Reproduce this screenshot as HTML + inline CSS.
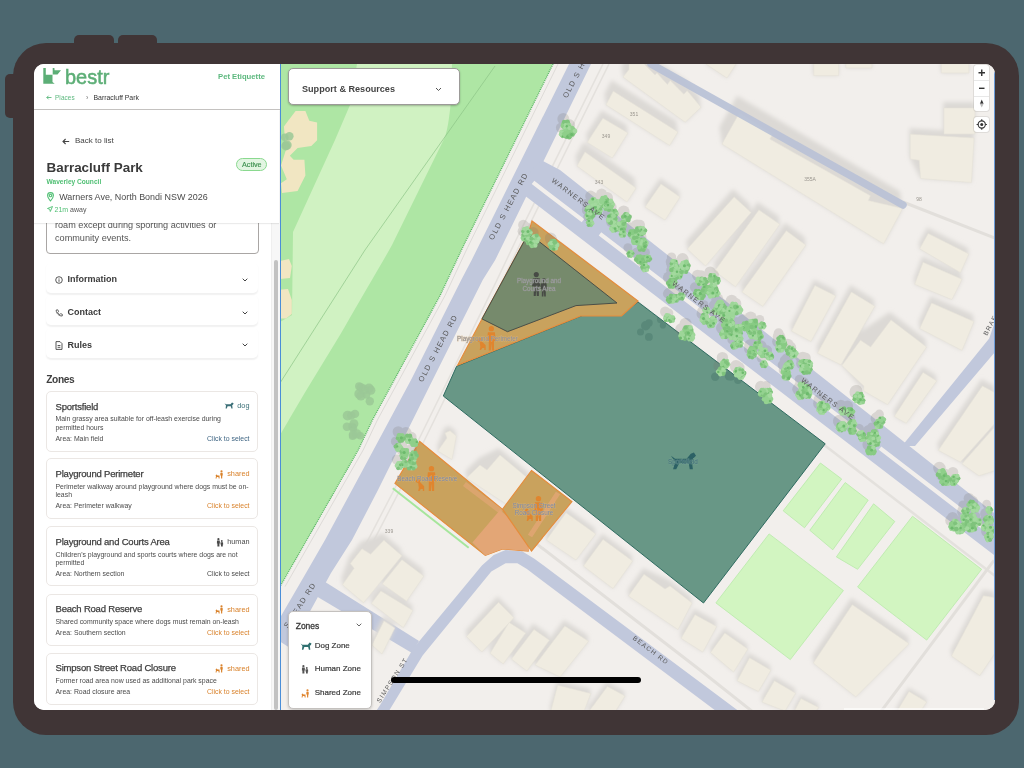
<!DOCTYPE html>
<html><head><meta charset="utf-8">
<style>
*{box-sizing:border-box}
html,body{margin:0;padding:0}
body{width:1024px;height:768px;background:#4c676f;position:relative;overflow:hidden;font-family:"Liberation Sans",sans-serif;color:#3b3b3b}
.abs{position:absolute}
.frame{left:13px;top:43px;width:1006px;height:692px;border-radius:33px;background:#403536}
.btn{background:#403536;border-radius:5px}
.screen{left:34px;top:64px;width:961px;height:646px;border-radius:10px;overflow:hidden;background:#fff;will-change:transform}
.side{left:0;top:0;width:246px;height:646px;background:#fff}
.t{position:absolute;white-space:nowrap;line-height:1}
.card{position:absolute;left:12px;width:212px;border:1px solid #ebe7e4;border-radius:5px;background:#fff}
.acc{position:absolute;left:12px;width:212px;height:30px;border-radius:5px;box-shadow:0 1.5px 1.5px rgba(0,0,0,0.06)}
.map{left:246px;top:0;width:715px;height:646px}
</style></head>
<body>
<div class="abs btn" style="left:74px;top:35px;width:40px;height:16px"></div>
<div class="abs btn" style="left:118px;top:35px;width:39px;height:16px"></div>
<div class="abs btn" style="left:5px;top:74px;width:16px;height:44px"></div>
<div class="abs frame"></div>
<div class="abs screen">
  <svg class="abs map" width="715" height="646" viewBox="280 64 715 646">
    <defs><filter id="blur" x="-20%" y="-20%" width="140%" height="140%"><feGaussianBlur stdDeviation="2.2"/></filter></defs>
    <rect x="280" y="64" width="715" height="646" fill="#f2efec"/>
<polygon points="280.0,64.0 553.0,64.0 462.6,247.5 440.0,295.6 372.4,420.0 358.2,450.0 280.0,586.6" fill="#aee6a4" />
<path d="M357,64 L452,64 L450.6,105 C449,118 448,128 445,137 L392,245 C378,270 360,300 340,335 L306,390.7 L280,435 L280,322 L292,315 L293,232 L335,140 L350,105 Z" fill="#d0f2c2" />
<polygon points="295.6,110.9 305.4,110.9 309.3,120.7 317.1,122.6 317.1,140.2 311.3,146.1 297.6,148.0 289.8,155.8 293.7,159.8 304.4,159.8 305.4,175.4 297.6,191.0 282.0,193.0 281.0,183.2 286.8,179.3 281.0,165.6 285.9,150.0 283.9,126.5" fill="#f1e6c2" />
<polygon points="280.0,261.0 289.0,259.0 291.8,266.0 290.0,278.0 280.0,279.0" fill="#f1e6c2" />
<polygon points="280.0,289.7 288.0,289.0 291.8,300.0 291.8,314.0 286.0,318.5 280.0,318.5" fill="#f1e6c2" />
<path d="M495,66 L365,250 L280,383" fill="none" stroke="#8cc487" stroke-width="0.7"/>
<path d="M553,64 L462.6,247.5 L440,295.6 L372.4,420 L358.2,450 L280,586.6" fill="none" stroke="#5fb86a" stroke-width="1.4" stroke-dasharray="1 1"/>
<path d="M558,64 L467.6,247.5 L445,295.6 L377.4,420 L363.2,450 L285,586.6" fill="none" stroke="#dedbd8" stroke-width="1"/>
<polygon points="569.0,64.0 471.7,260.0 461.2,280.0 411.0,380.0 352.0,490.0 325.0,540.0 306.0,573.0 270.0,635.0 290.0,648.0 331.0,573.0 352.0,540.0 378.0,490.0 432.6,380.0 482.7,280.0 495.2,260.0 591.0,64.0" fill="#c1c8dc" />
<path d="M603,64 L516,240 L496,282 L448,380 L394,490 L368,540 L348,573" fill="none" stroke="#e4e1dd" stroke-width="1.6"/>
<path d="M609,64 L522,240 L502,282 L454,380 L400,490 L374,540 L354,573" fill="none" stroke="#e4e1dd" stroke-width="1.6"/>
<polygon points="541.0,160.0 560.0,170.0 1000.0,517.7 1000.0,559.7 525.0,195.8 505.0,200.0" fill="#c1c8dc" />
<path d="M533,182.4 L583,220.7 M600,233.8 L712,319.6 M730,333.4 L870,440.6 M880,448.2 L990,532.5" fill="none" stroke="#f2efec" stroke-width="4.2"/>
<path d="M560,242.6 L1000,579.7" fill="none" stroke="#e4e1dd" stroke-width="2.5"/>
<polygon points="902.0,446.0 915.0,446.0 995.0,352.0 995.0,321.6 989.2,338.5" fill="#c1c8dc" />
<path d="M903,202 L995,238" fill="none" stroke="#e2dfdb" stroke-width="3"/>
<polygon points="322.0,580.0 419.0,641.0 412.0,653.0 316.0,596.0" fill="#c1c8dc" />
<polygon points="370.0,720.0 380.0,705.3 413.2,648.5 481.9,565.5 493.7,554.9 505.6,550.1 522.1,551.3 534.0,558.4 620.0,622.4 760.0,727.0 740.0,729.0 620.0,639.0 526.9,569.1 517.4,563.2 505.6,563.2 491.3,571.5 422.6,655.6 388.3,712.0 392.0,720.0" fill="#c1c8dc" />
<path d="M534,541.8 L620,608.2 L700,670 L753,712" fill="none" stroke="#e2dfdb" stroke-width="3"/>
<path d="M994,560.4 L880.6,712" fill="none" stroke="#e2dfdb" stroke-width="3"/>
<polygon points="783.2,510.8 820.4,463.0 841.7,479.0 804.5,527.8" fill="#d2f5c1" stroke="#b8eaa8" stroke-width="0.8"/>
<polygon points="809.8,530.3 845.2,482.5 868.2,500.2 832.8,549.8" fill="#d2f5c1" stroke="#b8eaa8" stroke-width="0.8"/>
<polygon points="836.4,556.9 873.6,503.8 894.8,521.5 857.6,569.3" fill="#d2f5c1" stroke="#b8eaa8" stroke-width="0.8"/>
<polygon points="715.9,602.9 769.1,533.9 843.4,590.5 790.3,659.6" fill="#d2f5c1" stroke="#b8eaa8" stroke-width="0.8"/>
<polygon points="857.6,587.0 912.5,516.2 981.6,569.3 926.7,640.1" fill="#d2f5c1" stroke="#b8eaa8" stroke-width="0.8"/>
<g filter="url(#blur)">
<polygon points="621.4,66.0 627.4,53.0 642.4,53.0 685.6,79.8 699.4,96.2 701.0,107.2 685.2,122.2 623.0,77.0" fill="#dcd9d5" />
<polygon points="705.2,59.0 735.2,59.0 736.0,64.0 727.0,78.0 706.0,64.0" fill="#dcd9d5" />
<polygon points="604.4,93.8 611.6,80.2 676.2,120.9 677.9,131.9 669.6,145.4 606.0,104.8" fill="#dcd9d5" />
<polygon points="586.1,134.3 601.7,110.3 626.7,124.9 627.9,132.9 612.3,157.9 587.3,142.3" fill="#dcd9d5" />
<polygon points="575.5,156.0 583.5,142.0 634.5,178.0 636.0,188.0 627.0,202.0 577.0,166.0" fill="#dcd9d5" />
<polygon points="644.1,201.0 660.1,178.0 679.1,191.0 680.0,197.0 665.0,220.0 645.0,207.0" fill="#dcd9d5" />
<polygon points="719.5,127.0 737.0,95.7 900.1,191.4 902.6,208.4 883.6,243.8 722.0,144.0" fill="#dcd9d5" />
<polygon points="812.9,58.0 837.7,58.0 838.6,64.0 838.6,75.6 813.8,75.6 812.9,69.6" fill="#dcd9d5" />
<polygon points="845.4,60.0 871.4,60.0 872.0,64.0 872.0,68.0 846.0,68.0 845.4,64.0" fill="#dcd9d5" />
<polygon points="940.6,59.0 968.0,59.0 968.8,64.0 968.8,73.0 941.4,73.0 940.6,68.0" fill="#dcd9d5" />
<polygon points="943.1,102.0 974.1,102.0 975.0,108.0 975.0,134.0 944.0,134.0 943.1,128.0" fill="#dcd9d5" />
<polygon points="909.3,128.2 973.1,132.0 974.0,138.0 971.4,182.4 920.6,178.5 910.2,159.0 909.3,153.0" fill="#dcd9d5" />
<polygon points="686.1,241.0 733.0,188.9 749.9,204.5 751.1,212.5 705.6,265.9 687.3,249.0" fill="#dcd9d5" />
<polygon points="713.5,263.1 757.7,201.9 778.6,216.3 779.8,224.3 735.5,286.7 714.7,271.1" fill="#dcd9d5" />
<polygon points="740.8,284.0 785.1,222.8 804.6,237.1 805.8,245.1 762.8,306.3 742.0,292.0" fill="#dcd9d5" />
<polygon points="790.6,325.0 814.0,279.4 834.8,289.9 835.7,295.9 811.0,341.4 791.5,331.0" fill="#dcd9d5" />
<polygon points="816.5,346.1 850.4,285.0 873.8,299.3 874.8,306.3 841.0,364.8 817.5,353.1" fill="#dcd9d5" />
<polygon points="918.8,242.8 927.3,227.5 967.9,247.9 968.8,253.9 960.4,272.5 919.7,248.8" fill="#dcd9d5" />
<polygon points="913.8,278.3 922.2,256.3 961.1,273.3 962.0,279.3 951.9,299.6 914.7,284.3" fill="#dcd9d5" />
<polygon points="918.7,321.4 930.6,296.0 972.9,314.6 973.9,321.6 962.0,350.4 919.7,328.4" fill="#dcd9d5" />
<polygon points="840.7,357.6 859.3,332.2 889.8,311.9 925.3,339.0 926.5,347.0 887.6,404.6 863.9,391.0 841.9,365.6" fill="#dcd9d5" />
<polygon points="893.4,410.4 922.2,366.4 935.8,374.9 936.7,380.9 906.2,423.2 894.3,416.4" fill="#dcd9d5" />
<polygon points="937.4,443.3 981.4,378.9 994.0,385.7 995.0,392.7 995.0,423.2 960.4,462.1 938.4,450.3" fill="#dcd9d5" />
<polygon points="961.1,457.8 994.1,420.6 995.0,426.6 995.0,470.6 979.0,475.7 962.0,463.8" fill="#dcd9d5" />
<polygon points="812.2,656.1 851.2,597.7 908.0,636.7 909.0,643.7 855.8,696.8 813.3,663.1" fill="#dcd9d5" />
<polygon points="950.6,650.0 982.5,589.8 994.1,591.6 995.0,597.6 995.0,653.0 979.8,675.5 951.5,656.0" fill="#dcd9d5" />
<polygon points="709.9,647.5 724.0,628.0 747.0,644.0 747.8,649.0 733.6,672.0 710.6,652.5" fill="#dcd9d5" />
<polygon points="736.5,675.8 748.9,652.8 770.0,665.2 770.8,670.2 758.4,691.5 737.2,680.8" fill="#dcd9d5" />
<polygon points="761.2,697.0 773.6,675.8 794.9,688.2 795.6,693.2 785.0,711.0 762.0,702.0" fill="#dcd9d5" />
<polygon points="793.3,708.0 800.4,694.6 818.1,703.4 818.7,707.4 815.0,712.0 793.9,712.0" fill="#dcd9d5" />
<polygon points="896.0,708.0 908.4,687.5 926.1,698.0 926.7,702.0 920.0,712.0 896.6,712.0" fill="#dcd9d5" />
<polygon points="465.6,630.6 497.6,596.3 513.0,611.7 513.9,617.7 481.9,652.0 466.5,636.6" fill="#dcd9d5" />
<polygon points="489.3,647.2 508.2,616.4 524.8,627.1 525.7,633.1 503.2,663.9 490.2,653.2" fill="#dcd9d5" />
<polygon points="510.6,653.1 533.1,623.5 548.5,634.2 549.4,640.2 526.9,671.0 511.5,659.1" fill="#dcd9d5" />
<polygon points="534.3,659.0 563.9,620.0 587.6,635.3 588.5,641.3 560.0,676.9 535.2,665.0" fill="#dcd9d5" />
<polygon points="549.9,707.0 557.0,680.2 590.0,688.5 590.8,693.5 583.7,712.0 550.6,712.0" fill="#dcd9d5" />
<polygon points="587.8,707.0 606.6,681.4 624.2,691.0 625.0,696.0 615.0,712.0 588.5,712.0" fill="#dcd9d5" />
<polygon points="341.4,577.7 349.2,556.6 360.9,541.8 382.8,533.2 400.8,548.8 401.9,555.8 363.6,602.7 342.5,584.7" fill="#dcd9d5" />
<polygon points="381.2,576.9 400.8,552.7 422.7,569.1 423.8,576.1 406.6,601.1 382.3,583.9" fill="#dcd9d5" />
<polygon points="370.5,597.4 379.9,584.9 411.9,604.5 412.8,610.5 403.4,627.7 371.4,603.4" fill="#dcd9d5" />
<polygon points="465.4,471.0 478.9,458.0 498.9,448.0 529.0,473.0 530.0,480.0 513.0,508.6 466.5,478.0" fill="#dcd9d5" />
<polygon points="437.1,446.0 444.2,428.0 449.2,425.8 455.6,431.0 456.3,436.0 452.0,459.5 437.8,451.0" fill="#dcd9d5" />
<polygon points="545.6,534.0 565.1,506.7 594.8,528.0 595.7,534.0 576.0,560.0 546.5,540.0" fill="#dcd9d5" />
<polygon points="582.6,560.0 602.1,533.4 631.7,555.0 632.6,561.0 613.0,588.6 583.5,566.0" fill="#dcd9d5" />
<polygon points="627.6,590.0 643.1,568.3 669.1,580.0 691.1,597.0 692.0,603.0 678.0,629.6 628.5,596.0" fill="#dcd9d5" />
<polygon points="680.2,632.3 694.1,608.7 715.7,620.5 716.6,626.5 702.8,652.1 681.1,638.3" fill="#dcd9d5" />
<polygon points="371.2,640.0 383.2,616.0 394.1,623.0 394.8,628.0 382.0,654.0 372.0,645.0" fill="#dcd9d5" />
</g>
<polygon points="623.0,77.0 629.0,69.6 629.0,64.0 644.0,64.0 655.0,75.0 657.0,73.0 667.4,84.6 670.2,80.5 683.8,94.2 687.2,90.8 701.0,107.2 685.2,122.2" fill="#f0ece1" stroke="#e6e2d9" stroke-width="0.6"/>
<polygon points="706.0,64.0 736.0,64.0 727.0,78.0" fill="#f0ece1" stroke="#e6e2d9" stroke-width="0.6"/>
<polygon points="606.0,104.8 613.3,91.2 677.9,131.9 669.6,145.4" fill="#f0ece1" stroke="#e6e2d9" stroke-width="0.6"/>
<polygon points="587.3,142.3 602.9,118.3 627.9,132.9 612.3,157.9" fill="#f0ece1" stroke="#e6e2d9" stroke-width="0.6"/>
<polygon points="577.0,166.0 585.0,152.0 636.0,188.0 627.0,202.0" fill="#f0ece1" stroke="#e6e2d9" stroke-width="0.6"/>
<polygon points="645.0,207.0 661.0,184.0 680.0,197.0 665.0,220.0" fill="#f0ece1" stroke="#e6e2d9" stroke-width="0.6"/>
<polygon points="722.0,144.0 739.5,112.7 772.7,134.2 769.8,139.1 870.4,195.7 868.4,200.6 902.6,208.4 883.6,243.8" fill="#f0ece1" stroke="#e6e2d9" stroke-width="0.6"/>
<polygon points="813.8,64.0 838.6,64.0 838.6,75.6 813.8,75.6" fill="#f0ece1" stroke="#e6e2d9" stroke-width="0.6"/>
<polygon points="846.0,64.0 872.0,64.0 872.0,68.0 846.0,68.0" fill="#f0ece1" stroke="#e6e2d9" stroke-width="0.6"/>
<polygon points="941.4,64.0 968.8,64.0 968.8,73.0 941.4,73.0" fill="#f0ece1" stroke="#e6e2d9" stroke-width="0.6"/>
<polygon points="944.0,108.0 975.0,108.0 975.0,134.0 944.0,134.0" fill="#f0ece1" stroke="#e6e2d9" stroke-width="0.6"/>
<polygon points="910.2,134.2 974.0,138.0 971.4,182.4 920.6,178.5 919.3,160.2 910.2,159.0" fill="#f0ece1" stroke="#e6e2d9" stroke-width="0.6"/>
<polygon points="687.3,249.0 734.2,196.9 751.1,212.5 705.6,265.9" fill="#f0ece1" stroke="#e6e2d9" stroke-width="0.6"/>
<polygon points="714.7,271.1 758.9,209.9 779.8,224.3 735.5,286.7" fill="#f0ece1" stroke="#e6e2d9" stroke-width="0.6"/>
<polygon points="742.0,292.0 786.3,230.8 805.8,245.1 762.8,306.3" fill="#f0ece1" stroke="#e6e2d9" stroke-width="0.6"/>
<polygon points="791.5,331.0 814.9,285.4 835.7,295.9 811.0,341.4" fill="#f0ece1" stroke="#e6e2d9" stroke-width="0.6"/>
<polygon points="817.5,353.1 851.4,292.0 874.8,306.3 841.0,364.8" fill="#f0ece1" stroke="#e6e2d9" stroke-width="0.6"/>
<polygon points="919.7,248.8 928.2,233.5 968.8,253.9 960.4,272.5" fill="#f0ece1" stroke="#e6e2d9" stroke-width="0.6"/>
<polygon points="914.7,284.3 923.1,262.3 962.0,279.3 951.9,299.6" fill="#f0ece1" stroke="#e6e2d9" stroke-width="0.6"/>
<polygon points="919.7,328.4 931.6,303.0 973.9,321.6 962.0,350.4" fill="#f0ece1" stroke="#e6e2d9" stroke-width="0.6"/>
<polygon points="841.9,365.6 860.5,340.2 870.6,347.0 891.0,319.9 926.5,347.0 887.6,404.6 863.9,391.0 863.9,386.0" fill="#f0ece1" stroke="#e6e2d9" stroke-width="0.6"/>
<polygon points="894.3,416.4 923.1,372.4 936.7,380.9 906.2,423.2" fill="#f0ece1" stroke="#e6e2d9" stroke-width="0.6"/>
<polygon points="938.4,450.3 982.4,385.9 995.0,392.7 995.0,423.2 960.4,462.1" fill="#f0ece1" stroke="#e6e2d9" stroke-width="0.6"/>
<polygon points="962.0,463.8 995.0,426.6 995.0,470.6 979.0,475.7" fill="#f0ece1" stroke="#e6e2d9" stroke-width="0.6"/>
<polygon points="813.3,663.1 852.3,604.7 909.0,643.7 855.8,696.8" fill="#f0ece1" stroke="#e6e2d9" stroke-width="0.6"/>
<polygon points="951.5,656.0 983.4,595.8 995.0,597.6 995.0,653.0 979.8,675.5" fill="#f0ece1" stroke="#e6e2d9" stroke-width="0.6"/>
<polygon points="710.6,652.5 724.8,633.0 747.8,649.0 733.6,672.0" fill="#f0ece1" stroke="#e6e2d9" stroke-width="0.6"/>
<polygon points="737.2,680.8 749.6,657.8 770.8,670.2 758.4,691.5" fill="#f0ece1" stroke="#e6e2d9" stroke-width="0.6"/>
<polygon points="762.0,702.0 774.4,680.8 795.6,693.2 785.0,711.0" fill="#f0ece1" stroke="#e6e2d9" stroke-width="0.6"/>
<polygon points="793.9,712.0 801.0,698.6 818.7,707.4 815.0,712.0" fill="#f0ece1" stroke="#e6e2d9" stroke-width="0.6"/>
<polygon points="896.6,712.0 909.0,691.5 926.7,702.0 920.0,712.0" fill="#f0ece1" stroke="#e6e2d9" stroke-width="0.6"/>
<polygon points="466.5,636.6 498.5,602.3 513.9,617.7 481.9,652.0" fill="#f0ece1" stroke="#e6e2d9" stroke-width="0.6"/>
<polygon points="490.2,653.2 509.1,622.4 525.7,633.1 503.2,663.9" fill="#f0ece1" stroke="#e6e2d9" stroke-width="0.6"/>
<polygon points="511.5,659.1 534.0,629.5 549.4,640.2 526.9,671.0" fill="#f0ece1" stroke="#e6e2d9" stroke-width="0.6"/>
<polygon points="535.2,665.0 564.8,626.0 588.5,641.3 560.0,676.9" fill="#f0ece1" stroke="#e6e2d9" stroke-width="0.6"/>
<polygon points="550.6,712.0 557.7,685.2 590.8,693.5 583.7,712.0" fill="#f0ece1" stroke="#e6e2d9" stroke-width="0.6"/>
<polygon points="588.5,712.0 607.4,686.4 625.0,696.0 615.0,712.0" fill="#f0ece1" stroke="#e6e2d9" stroke-width="0.6"/>
<polygon points="342.5,584.7 354.2,568.3 350.3,563.6 362.0,548.8 370.6,554.2 383.9,540.2 401.9,555.8 363.6,602.7" fill="#f0ece1" stroke="#e6e2d9" stroke-width="0.6"/>
<polygon points="382.3,583.9 401.9,559.7 423.8,576.1 406.6,601.1" fill="#f0ece1" stroke="#e6e2d9" stroke-width="0.6"/>
<polygon points="371.4,603.4 380.8,590.9 412.8,610.5 403.4,627.7" fill="#f0ece1" stroke="#e6e2d9" stroke-width="0.6"/>
<polygon points="466.5,478.0 480.0,465.0 487.0,470.0 500.0,455.0 530.0,480.0 513.0,508.6 466.5,478.0" fill="#f0ece1" stroke="#e6e2d9" stroke-width="0.6"/>
<polygon points="437.8,451.0 447.0,438.0 445.0,433.0 450.0,430.8 456.3,436.0 452.0,459.5" fill="#f0ece1" stroke="#e6e2d9" stroke-width="0.6"/>
<polygon points="546.5,540.0 566.0,512.7 595.7,534.0 576.0,560.0" fill="#f0ece1" stroke="#e6e2d9" stroke-width="0.6"/>
<polygon points="583.5,566.0 603.0,539.4 632.6,561.0 613.0,588.6" fill="#f0ece1" stroke="#e6e2d9" stroke-width="0.6"/>
<polygon points="628.5,596.0 644.0,574.3 665.0,589.0 670.0,586.0 692.0,603.0 678.0,629.6" fill="#f0ece1" stroke="#e6e2d9" stroke-width="0.6"/>
<polygon points="681.1,638.3 695.0,614.7 716.6,626.5 702.8,652.1" fill="#f0ece1" stroke="#e6e2d9" stroke-width="0.6"/>
<polygon points="372.0,645.0 384.0,621.0 394.8,628.0 382.0,654.0" fill="#f0ece1" stroke="#e6e2d9" stroke-width="0.6"/>
<path d="M651,64 L903,205" fill="none" stroke="#b9c1d6" stroke-width="7.5" stroke-linecap="round" opacity="0.92"/>
<polygon points="443.3,396.0 456.6,366.3 582.7,315.4 620.3,315.4 638.0,302.0 825.2,443.8 703.5,603.0" fill="#689786" stroke="#2f6b60" stroke-width="1"/>
<clipPath id="sfclip"><polygon points="443.3,396 456.6,366.3 582.7,315.4 620.3,315.4 638,302 825.2,443.8 703.5,603"/></clipPath>
<g clip-path="url(#sfclip)" fill="#4d7d70" opacity="0.55"><circle cx="649.0" cy="322.9" r="3.7"/><circle cx="662.9" cy="325.4" r="3.1"/><circle cx="640.5" cy="332.0" r="3.5"/><circle cx="648.9" cy="336.9" r="3.9"/><circle cx="671.8" cy="320.8" r="4.3"/><circle cx="645.7" cy="325.7" r="4.7"/><circle cx="731.3" cy="376.3" r="4.3"/><circle cx="715.2" cy="376.7" r="4.2"/><circle cx="723.5" cy="360.7" r="4.7"/><circle cx="729.5" cy="375.8" r="4.8"/><circle cx="738.0" cy="380.3" r="3.8"/><circle cx="741.0" cy="369.8" r="4.9"/><circle cx="693.9" cy="301.9" r="3.3"/><circle cx="660.8" cy="319.3" r="3.9"/><circle cx="681.3" cy="306.0" r="4.0"/><circle cx="669.3" cy="307.0" r="4.2"/><circle cx="679.2" cy="318.1" r="4.4"/><circle cx="696.4" cy="317.1" r="5.0"/><circle cx="806.8" cy="413.3" r="4.7"/><circle cx="814.1" cy="428.1" r="4.1"/><circle cx="807.8" cy="414.2" r="4.7"/><circle cx="804.3" cy="415.7" r="3.1"/><circle cx="811.3" cy="429.8" r="3.2"/><circle cx="810.0" cy="418.2" r="3.3"/></g>
<polygon points="532.0,221.0 638.0,301.0 621.5,316.0 580.5,316.0 457.7,365.0 482.0,319.0 528.5,233.0" fill="#c9a25d" stroke="#e58c3c" stroke-width="1.2"/>
<polygon points="528.5,233.2 617.0,303.0 576.0,305.6 507.5,331.7 482.0,318.9" fill="#768a6c" stroke="#4a4f48" stroke-width="1"/>
<path d="M392.8,488.2 L468.7,547.7" fill="none" stroke="#a6e69c" stroke-width="2"/>
<polygon points="419.7,441.5 503.5,510.2 527.2,533.9 528.2,551.0 502.5,548.9 485.3,555.4 395.0,483.4" fill="#c9a25d" stroke="#e58c3c" stroke-width="1.2"/>
<polygon points="472.4,542.5 500.0,510.0 527.2,533.9 528.2,551.0 502.5,548.9 485.3,555.4" fill="#e3a676" />
<polygon points="466.0,482.0 503.5,510.2 500.0,514.0 463.0,486.0" fill="#e3a676" opacity="0.7"/>
<polygon points="531.5,470.5 571.9,501.6 531.5,551.0 502.5,509.2" fill="#c9a25d" stroke="#e58c3c" stroke-width="1.2"/>
<path d="M558,493 L530,536" fill="none" stroke="#e3a676" stroke-width="5" opacity="0.8"/>
<g fill="#77736c" opacity="0.2"><circle cx="560.9" cy="127.7" r="5.0"/>
<circle cx="563.3" cy="119.0" r="6.0"/>
<circle cx="567.4" cy="125.4" r="4.9"/>
<circle cx="565.9" cy="127.6" r="6.2"/>
<circle cx="564.7" cy="120.9" r="4.7"/>
<circle cx="568.9" cy="125.2" r="6.2"/>
<circle cx="586.0" cy="203.5" r="4.5"/>
<circle cx="587.7" cy="209.3" r="5.8"/>
<circle cx="586.9" cy="210.6" r="4.9"/>
<circle cx="595.9" cy="204.9" r="4.8"/>
<circle cx="593.2" cy="198.1" r="5.9"/>
<circle cx="590.6" cy="196.0" r="5.4"/>
<circle cx="587.7" cy="217.1" r="4.5"/>
<circle cx="623.7" cy="211.4" r="5.9"/>
<circle cx="614.3" cy="220.4" r="5.7"/>
<circle cx="620.2" cy="218.0" r="4.5"/>
<circle cx="618.7" cy="220.8" r="6.2"/>
<circle cx="610.8" cy="213.0" r="5.0"/>
<circle cx="611.8" cy="207.0" r="4.8"/>
<circle cx="611.2" cy="222.2" r="5.0"/>
<circle cx="620.2" cy="227.9" r="4.4"/>
<circle cx="608.0" cy="213.9" r="4.9"/>
<circle cx="609.2" cy="213.1" r="6.2"/>
<circle cx="601.0" cy="198.0" r="4.9"/>
<circle cx="605.7" cy="200.1" r="6.2"/>
<circle cx="607.0" cy="198.0" r="6.1"/>
<circle cx="601.6" cy="194.1" r="5.5"/>
<circle cx="633.7" cy="234.1" r="5.2"/>
<circle cx="640.6" cy="237.1" r="5.9"/>
<circle cx="630.1" cy="227.8" r="5.6"/>
<circle cx="627.9" cy="247.8" r="4.5"/>
<circle cx="640.9" cy="237.2" r="5.0"/>
<circle cx="637.0" cy="225.6" r="6.2"/>
<circle cx="639.9" cy="224.9" r="5.1"/>
<circle cx="639.8" cy="240.8" r="5.8"/>
<circle cx="633.4" cy="234.5" r="5.5"/>
<circle cx="640.1" cy="254.2" r="6.0"/>
<circle cx="642.4" cy="261.7" r="5.3"/>
<circle cx="645.5" cy="252.5" r="4.5"/>
<circle cx="636.9" cy="253.3" r="5.7"/>
<circle cx="670.1" cy="276.6" r="5.6"/>
<circle cx="672.9" cy="267.4" r="4.7"/>
<circle cx="671.6" cy="270.4" r="5.4"/>
<circle cx="670.9" cy="261.8" r="5.2"/>
<circle cx="673.2" cy="263.0" r="5.9"/>
<circle cx="668.8" cy="277.5" r="5.9"/>
<circle cx="675.1" cy="265.9" r="6.0"/>
<circle cx="676.3" cy="269.4" r="4.7"/>
<circle cx="672.5" cy="264.2" r="6.1"/>
<circle cx="681.4" cy="263.2" r="6.0"/>
<circle cx="682.6" cy="259.2" r="6.1"/>
<circle cx="671.5" cy="257.1" r="4.7"/>
<circle cx="667.5" cy="293.7" r="4.6"/>
<circle cx="672.4" cy="292.3" r="5.2"/>
<circle cx="669.4" cy="292.8" r="5.5"/>
<circle cx="678.8" cy="290.4" r="4.7"/>
<circle cx="713.2" cy="287.1" r="4.9"/>
<circle cx="697.6" cy="275.3" r="5.6"/>
<circle cx="710.2" cy="282.3" r="6.1"/>
<circle cx="694.9" cy="287.2" r="5.0"/>
<circle cx="698.1" cy="289.6" r="5.9"/>
<circle cx="714.4" cy="274.6" r="4.5"/>
<circle cx="703.6" cy="283.6" r="5.9"/>
<circle cx="708.8" cy="287.4" r="5.6"/>
<circle cx="701.3" cy="275.7" r="5.5"/>
<circle cx="710.1" cy="272.0" r="5.6"/>
<circle cx="707.8" cy="316.5" r="5.2"/>
<circle cx="704.0" cy="304.7" r="4.5"/>
<circle cx="713.4" cy="304.9" r="4.6"/>
<circle cx="708.3" cy="318.1" r="5.1"/>
<circle cx="710.5" cy="314.7" r="5.1"/>
<circle cx="727.9" cy="310.1" r="5.6"/>
<circle cx="731.7" cy="300.8" r="6.0"/>
<circle cx="734.2" cy="303.5" r="5.4"/>
<circle cx="735.3" cy="303.9" r="6.1"/>
<circle cx="727.1" cy="305.3" r="4.5"/>
<circle cx="722.1" cy="328.0" r="6.1"/>
<circle cx="728.8" cy="317.8" r="4.5"/>
<circle cx="726.4" cy="317.0" r="6.1"/>
<circle cx="728.0" cy="320.8" r="5.3"/>
<circle cx="728.7" cy="320.8" r="5.8"/>
<circle cx="665.2" cy="311.8" r="5.2"/>
<circle cx="668.8" cy="313.0" r="4.5"/>
<circle cx="681.2" cy="329.2" r="6.0"/>
<circle cx="688.3" cy="328.8" r="4.9"/>
<circle cx="688.2" cy="331.7" r="4.7"/>
<circle cx="685.6" cy="323.9" r="6.1"/>
<circle cx="702.1" cy="311.1" r="4.9"/>
<circle cx="702.1" cy="313.9" r="5.6"/>
<circle cx="717.5" cy="298.0" r="4.8"/>
<circle cx="735.0" cy="328.9" r="4.6"/>
<circle cx="724.0" cy="315.2" r="5.1"/>
<circle cx="717.4" cy="299.6" r="6.1"/>
<circle cx="720.3" cy="304.2" r="6.2"/>
<circle cx="719.9" cy="307.2" r="5.2"/>
<circle cx="727.1" cy="316.1" r="4.8"/>
<circle cx="721.4" cy="306.6" r="4.7"/>
<circle cx="729.4" cy="329.9" r="5.0"/>
<circle cx="723.9" cy="319.2" r="6.1"/>
<circle cx="724.3" cy="304.6" r="4.9"/>
<circle cx="728.1" cy="306.6" r="5.4"/>
<circle cx="722.7" cy="311.1" r="5.8"/>
<circle cx="750.8" cy="325.0" r="4.8"/>
<circle cx="755.7" cy="329.6" r="6.1"/>
<circle cx="749.2" cy="326.3" r="6.0"/>
<circle cx="736.0" cy="332.3" r="5.6"/>
<circle cx="743.3" cy="320.2" r="6.0"/>
<circle cx="735.1" cy="327.2" r="5.5"/>
<circle cx="750.6" cy="317.6" r="6.1"/>
<circle cx="736.4" cy="322.3" r="5.4"/>
<circle cx="731.8" cy="339.8" r="4.5"/>
<circle cx="750.2" cy="329.2" r="5.0"/>
<circle cx="736.7" cy="338.0" r="4.6"/>
<circle cx="755.1" cy="339.1" r="5.4"/>
<circle cx="759.7" cy="319.5" r="4.6"/>
<circle cx="760.6" cy="346.4" r="6.2"/>
<circle cx="767.4" cy="350.3" r="4.5"/>
<circle cx="750.9" cy="347.9" r="4.5"/>
<circle cx="761.4" cy="358.3" r="4.7"/>
<circle cx="766.9" cy="350.2" r="5.0"/>
<circle cx="749.7" cy="344.8" r="5.5"/>
<circle cx="749.9" cy="345.9" r="5.4"/>
<circle cx="749.0" cy="348.9" r="5.0"/>
<circle cx="778.6" cy="336.7" r="5.9"/>
<circle cx="778.0" cy="341.6" r="5.9"/>
<circle cx="779.3" cy="337.7" r="6.3"/>
<circle cx="778.6" cy="333.1" r="4.9"/>
<circle cx="787.1" cy="358.8" r="5.6"/>
<circle cx="783.6" cy="365.5" r="5.2"/>
<circle cx="782.4" cy="365.1" r="4.8"/>
<circle cx="784.1" cy="370.1" r="5.4"/>
<circle cx="784.3" cy="360.2" r="4.5"/>
<circle cx="790.4" cy="347.7" r="5.9"/>
<circle cx="787.7" cy="344.9" r="6.1"/>
<circle cx="805.4" cy="360.0" r="5.1"/>
<circle cx="802.7" cy="357.4" r="5.6"/>
<circle cx="805.5" cy="363.9" r="5.1"/>
<circle cx="799.7" cy="357.3" r="4.6"/>
<circle cx="805.4" cy="357.9" r="5.4"/>
<circle cx="802.3" cy="363.4" r="6.2"/>
<circle cx="805.4" cy="388.9" r="4.7"/>
<circle cx="797.9" cy="389.3" r="5.7"/>
<circle cx="802.3" cy="382.7" r="5.1"/>
<circle cx="803.5" cy="382.6" r="5.5"/>
<circle cx="766.2" cy="385.6" r="4.5"/>
<circle cx="760.8" cy="386.0" r="5.3"/>
<circle cx="765.3" cy="392.7" r="6.2"/>
<circle cx="760.0" cy="387.1" r="5.0"/>
<circle cx="738.3" cy="368.0" r="6.3"/>
<circle cx="722.4" cy="357.6" r="5.7"/>
<circle cx="736.7" cy="366.8" r="5.3"/>
<circle cx="722.2" cy="358.7" r="5.2"/>
<circle cx="736.6" cy="365.7" r="4.8"/>
<circle cx="736.0" cy="366.3" r="6.2"/>
<circle cx="718.7" cy="365.6" r="5.4"/>
<circle cx="738.2" cy="366.2" r="4.6"/>
<circle cx="799.9" cy="386.5" r="5.9"/>
<circle cx="801.7" cy="386.4" r="4.9"/>
<circle cx="804.7" cy="386.7" r="6.0"/>
<circle cx="799.4" cy="379.5" r="4.7"/>
<circle cx="819.2" cy="403.5" r="6.1"/>
<circle cx="819.1" cy="399.7" r="5.6"/>
<circle cx="824.1" cy="400.9" r="4.5"/>
<circle cx="819.8" cy="402.8" r="5.6"/>
<circle cx="837.9" cy="422.0" r="4.8"/>
<circle cx="849.8" cy="424.8" r="5.0"/>
<circle cx="838.5" cy="420.5" r="5.4"/>
<circle cx="849.8" cy="417.4" r="5.5"/>
<circle cx="847.6" cy="406.1" r="5.5"/>
<circle cx="840.6" cy="420.2" r="5.8"/>
<circle cx="840.8" cy="405.2" r="5.5"/>
<circle cx="856.1" cy="391.2" r="6.3"/>
<circle cx="858.7" cy="394.7" r="4.7"/>
<circle cx="857.0" cy="390.4" r="5.1"/>
<circle cx="855.1" cy="392.7" r="5.6"/>
<circle cx="876.3" cy="418.4" r="5.7"/>
<circle cx="879.3" cy="414.2" r="4.6"/>
<circle cx="876.8" cy="417.0" r="5.1"/>
<circle cx="860.1" cy="431.8" r="4.8"/>
<circle cx="858.9" cy="428.9" r="5.2"/>
<circle cx="873.6" cy="436.8" r="4.9"/>
<circle cx="868.5" cy="430.6" r="5.6"/>
<circle cx="874.4" cy="431.9" r="4.4"/>
<circle cx="871.9" cy="427.1" r="4.7"/>
<circle cx="868.5" cy="444.6" r="6.1"/>
<circle cx="869.0" cy="435.0" r="5.4"/>
<circle cx="951.0" cy="475.7" r="5.1"/>
<circle cx="952.9" cy="472.3" r="5.4"/>
<circle cx="944.6" cy="474.3" r="5.9"/>
<circle cx="939.4" cy="468.1" r="6.3"/>
<circle cx="941.5" cy="475.3" r="5.3"/>
<circle cx="986.7" cy="504.1" r="4.4"/>
<circle cx="963.2" cy="518.1" r="5.3"/>
<circle cx="975.7" cy="516.0" r="4.6"/>
<circle cx="952.6" cy="517.5" r="5.5"/>
<circle cx="965.0" cy="521.2" r="4.9"/>
<circle cx="969.9" cy="520.6" r="6.0"/>
<circle cx="983.0" cy="521.5" r="5.0"/>
<circle cx="962.7" cy="510.6" r="5.4"/>
<circle cx="963.1" cy="505.2" r="4.8"/>
<circle cx="972.2" cy="501.7" r="6.1"/>
<circle cx="954.2" cy="520.5" r="5.8"/>
<circle cx="957.4" cy="523.6" r="5.9"/>
<circle cx="969.9" cy="511.5" r="5.2"/>
<circle cx="969.0" cy="498.4" r="5.4"/>
<circle cx="962.1" cy="512.5" r="4.8"/>
<circle cx="968.1" cy="521.7" r="5.6"/>
<circle cx="986.8" cy="513.8" r="5.1"/>
<circle cx="951.2" cy="520.5" r="6.0"/>
<circle cx="986.2" cy="513.8" r="6.1"/>
<circle cx="986.1" cy="531.9" r="4.8"/>
<circle cx="987.9" cy="524.4" r="5.4"/>
<circle cx="986.5" cy="530.6" r="5.2"/>
<circle cx="409.1" cy="459.5" r="6.2"/>
<circle cx="405.9" cy="432.8" r="5.8"/>
<circle cx="409.6" cy="455.0" r="4.5"/>
<circle cx="411.1" cy="449.4" r="5.6"/>
<circle cx="395.9" cy="441.4" r="5.0"/>
<circle cx="396.8" cy="459.6" r="5.1"/>
<circle cx="411.6" cy="437.0" r="5.0"/>
<circle cx="402.0" cy="457.9" r="4.4"/>
<circle cx="401.1" cy="450.1" r="4.7"/>
<circle cx="402.0" cy="446.3" r="5.5"/>
<circle cx="398.2" cy="431.8" r="5.6"/>
<circle cx="530.5" cy="237.0" r="5.8"/>
<circle cx="525.7" cy="226.9" r="5.0"/>
<circle cx="522.9" cy="231.2" r="5.3"/>
<circle cx="523.3" cy="224.9" r="5.2"/>
<circle cx="533.1" cy="232.7" r="5.6"/>
<circle cx="527.2" cy="235.2" r="5.1"/>
<circle cx="550.5" cy="238.1" r="5.7"/>
<circle cx="551.3" cy="239.7" r="6.0"/></g>
<circle cx="563.4" cy="133.7" r="4.1" fill="#8fcf8a"/>
<circle cx="566.3" cy="134.2" r="1.6" fill="#a3d99e"/>
<circle cx="565.5" cy="135.8" r="1.8" fill="#8fcf8a"/>
<circle cx="562.6" cy="136.5" r="1.7" fill="#8fcf8a"/>
<circle cx="560.5" cy="134.4" r="1.7" fill="#a3d99e"/>
<circle cx="561.4" cy="131.5" r="1.6" fill="#a3d99e"/>
<circle cx="565.0" cy="131.2" r="1.6" fill="#a3d99e"/>
<circle cx="562.8" cy="136.4" r="1.0" fill="#6cba6c"/>
<circle cx="565.8" cy="125.0" r="4.9" fill="#8fcf8a"/>
<circle cx="569.4" cy="125.2" r="2.2" fill="#a3d99e"/>
<circle cx="568.1" cy="127.7" r="2.2" fill="#a3d99e"/>
<circle cx="564.6" cy="128.4" r="1.9" fill="#a3d99e"/>
<circle cx="562.4" cy="126.0" r="1.9" fill="#8fcf8a"/>
<circle cx="564.0" cy="121.9" r="2.1" fill="#7fc37c"/>
<circle cx="567.5" cy="121.9" r="2.4" fill="#7fc37c"/>
<circle cx="564.4" cy="127.1" r="1.6" fill="#6cba6c"/>
<circle cx="569.9" cy="131.4" r="3.9" fill="#88cb84"/>
<circle cx="572.8" cy="131.8" r="1.6" fill="#88cb84"/>
<circle cx="571.9" cy="133.5" r="1.7" fill="#7fc37c"/>
<circle cx="569.0" cy="134.1" r="1.7" fill="#88cb84"/>
<circle cx="567.1" cy="130.6" r="1.5" fill="#a3d99e"/>
<circle cx="568.6" cy="128.9" r="1.9" fill="#7fc37c"/>
<circle cx="571.1" cy="128.8" r="1.6" fill="#7fc37c"/>
<circle cx="570.4" cy="131.2" r="1.3" fill="#6cba6c"/>
<circle cx="568.4" cy="133.6" r="5.0" fill="#8fcf8a"/>
<circle cx="572.0" cy="134.2" r="2.1" fill="#a3d99e"/>
<circle cx="569.2" cy="137.2" r="2.4" fill="#7fc37c"/>
<circle cx="566.2" cy="136.6" r="2.4" fill="#7fc37c"/>
<circle cx="564.9" cy="134.7" r="2.2" fill="#8fcf8a"/>
<circle cx="566.8" cy="130.4" r="2.2" fill="#8fcf8a"/>
<circle cx="570.7" cy="130.8" r="2.0" fill="#8fcf8a"/>
<circle cx="567.7" cy="136.6" r="1.5" fill="#6cba6c"/>
<circle cx="567.2" cy="126.9" r="3.8" fill="#94d290"/>
<circle cx="569.9" cy="127.4" r="1.8" fill="#7fc37c"/>
<circle cx="568.3" cy="129.4" r="1.9" fill="#a3d99e"/>
<circle cx="565.3" cy="128.9" r="1.9" fill="#94d290"/>
<circle cx="564.5" cy="127.6" r="1.5" fill="#a3d99e"/>
<circle cx="565.4" cy="124.7" r="1.7" fill="#a3d99e"/>
<circle cx="568.1" cy="124.2" r="1.6" fill="#94d290"/>
<circle cx="566.8" cy="126.2" r="1.2" fill="#6cba6c"/>
<circle cx="571.4" cy="131.2" r="5.0" fill="#8fcf8a"/>
<circle cx="575.0" cy="131.1" r="2.4" fill="#a3d99e"/>
<circle cx="572.6" cy="134.7" r="2.1" fill="#7fc37c"/>
<circle cx="569.8" cy="134.5" r="2.2" fill="#7fc37c"/>
<circle cx="567.8" cy="132.2" r="1.9" fill="#8fcf8a"/>
<circle cx="569.4" cy="128.1" r="2.0" fill="#a3d99e"/>
<circle cx="572.3" cy="127.7" r="1.9" fill="#8fcf8a"/>
<circle cx="571.6" cy="134.4" r="1.5" fill="#6cba6c"/>
<circle cx="588.5" cy="209.5" r="3.7" fill="#88cb84"/>
<circle cx="591.1" cy="210.3" r="1.6" fill="#7fc37c"/>
<circle cx="590.3" cy="211.5" r="1.8" fill="#7fc37c"/>
<circle cx="587.2" cy="211.9" r="1.5" fill="#88cb84"/>
<circle cx="585.9" cy="210.2" r="1.5" fill="#7fc37c"/>
<circle cx="587.1" cy="207.2" r="1.7" fill="#a3d99e"/>
<circle cx="589.1" cy="206.9" r="1.8" fill="#a3d99e"/>
<circle cx="587.8" cy="210.5" r="1.3" fill="#6cba6c"/>
<circle cx="590.2" cy="215.3" r="4.7" fill="#8fcf8a"/>
<circle cx="593.6" cy="215.7" r="1.9" fill="#7fc37c"/>
<circle cx="591.1" cy="218.7" r="2.0" fill="#8fcf8a"/>
<circle cx="588.4" cy="218.3" r="2.2" fill="#7fc37c"/>
<circle cx="586.7" cy="215.1" r="2.1" fill="#8fcf8a"/>
<circle cx="589.0" cy="212.1" r="2.2" fill="#a3d99e"/>
<circle cx="592.4" cy="212.7" r="1.9" fill="#7fc37c"/>
<circle cx="589.2" cy="212.2" r="1.1" fill="#6cba6c"/>
<circle cx="589.4" cy="216.6" r="4.0" fill="#88cb84"/>
<circle cx="592.3" cy="216.5" r="1.9" fill="#7fc37c"/>
<circle cx="590.1" cy="219.4" r="1.7" fill="#88cb84"/>
<circle cx="588.6" cy="219.4" r="1.7" fill="#7fc37c"/>
<circle cx="586.5" cy="217.1" r="1.8" fill="#a3d99e"/>
<circle cx="588.5" cy="213.8" r="1.7" fill="#a3d99e"/>
<circle cx="590.6" cy="214.0" r="1.8" fill="#a3d99e"/>
<circle cx="587.2" cy="216.0" r="1.3" fill="#6cba6c"/>
<circle cx="598.4" cy="210.9" r="3.9" fill="#88cb84"/>
<circle cx="601.1" cy="210.2" r="1.9" fill="#a3d99e"/>
<circle cx="600.0" cy="213.2" r="1.6" fill="#88cb84"/>
<circle cx="596.7" cy="213.1" r="1.5" fill="#88cb84"/>
<circle cx="595.7" cy="211.7" r="1.7" fill="#7fc37c"/>
<circle cx="597.5" cy="208.2" r="1.5" fill="#a3d99e"/>
<circle cx="600.5" cy="208.9" r="1.8" fill="#7fc37c"/>
<circle cx="596.5" cy="211.1" r="0.9" fill="#6cba6c"/>
<circle cx="595.7" cy="204.1" r="4.8" fill="#94d290"/>
<circle cx="599.2" cy="203.9" r="2.3" fill="#94d290"/>
<circle cx="598.2" cy="206.5" r="1.9" fill="#a3d99e"/>
<circle cx="594.5" cy="207.3" r="2.1" fill="#7fc37c"/>
<circle cx="592.2" cy="204.0" r="2.3" fill="#94d290"/>
<circle cx="594.8" cy="200.7" r="2.0" fill="#7fc37c"/>
<circle cx="597.8" cy="201.2" r="2.3" fill="#a3d99e"/>
<circle cx="595.2" cy="206.9" r="1.4" fill="#6cba6c"/>
<circle cx="593.1" cy="202.0" r="4.4" fill="#9dd698"/>
<circle cx="596.3" cy="202.5" r="2.0" fill="#9dd698"/>
<circle cx="595.2" cy="204.4" r="1.9" fill="#a3d99e"/>
<circle cx="592.2" cy="205.1" r="1.7" fill="#a3d99e"/>
<circle cx="589.9" cy="202.0" r="1.9" fill="#9dd698"/>
<circle cx="592.2" cy="199.0" r="1.7" fill="#9dd698"/>
<circle cx="594.3" cy="199.1" r="2.0" fill="#a3d99e"/>
<circle cx="592.8" cy="199.1" r="1.5" fill="#6cba6c"/>
<circle cx="590.2" cy="223.1" r="3.7" fill="#94d290"/>
<circle cx="592.9" cy="223.4" r="1.6" fill="#a3d99e"/>
<circle cx="591.1" cy="225.6" r="1.6" fill="#94d290"/>
<circle cx="588.6" cy="225.2" r="1.8" fill="#7fc37c"/>
<circle cx="587.6" cy="222.4" r="1.8" fill="#94d290"/>
<circle cx="589.4" cy="220.5" r="1.4" fill="#94d290"/>
<circle cx="591.4" cy="220.7" r="1.5" fill="#a3d99e"/>
<circle cx="588.9" cy="220.9" r="1.2" fill="#6cba6c"/>
<circle cx="626.2" cy="217.4" r="4.8" fill="#88cb84"/>
<circle cx="629.6" cy="216.7" r="2.3" fill="#7fc37c"/>
<circle cx="628.4" cy="220.1" r="2.3" fill="#7fc37c"/>
<circle cx="623.8" cy="220.0" r="1.9" fill="#a3d99e"/>
<circle cx="622.8" cy="216.8" r="1.9" fill="#7fc37c"/>
<circle cx="625.4" cy="214.1" r="2.0" fill="#7fc37c"/>
<circle cx="627.3" cy="214.2" r="2.0" fill="#a3d99e"/>
<circle cx="625.3" cy="216.4" r="1.4" fill="#6cba6c"/>
<circle cx="616.8" cy="226.4" r="4.6" fill="#88cb84"/>
<circle cx="620.1" cy="226.5" r="1.8" fill="#88cb84"/>
<circle cx="617.6" cy="229.7" r="1.8" fill="#7fc37c"/>
<circle cx="615.5" cy="229.6" r="2.2" fill="#88cb84"/>
<circle cx="613.4" cy="226.9" r="1.8" fill="#7fc37c"/>
<circle cx="615.7" cy="223.2" r="2.1" fill="#7fc37c"/>
<circle cx="618.3" cy="223.4" r="2.0" fill="#a3d99e"/>
<circle cx="617.2" cy="227.7" r="1.1" fill="#6cba6c"/>
<circle cx="622.7" cy="224.0" r="3.7" fill="#8fcf8a"/>
<circle cx="625.3" cy="223.6" r="1.4" fill="#8fcf8a"/>
<circle cx="623.6" cy="226.5" r="1.4" fill="#8fcf8a"/>
<circle cx="622.0" cy="226.6" r="1.7" fill="#7fc37c"/>
<circle cx="620.1" cy="224.8" r="1.8" fill="#7fc37c"/>
<circle cx="622.0" cy="221.4" r="1.5" fill="#8fcf8a"/>
<circle cx="623.4" cy="221.4" r="1.7" fill="#8fcf8a"/>
<circle cx="625.1" cy="222.8" r="0.9" fill="#6cba6c"/>
<circle cx="621.2" cy="226.8" r="5.0" fill="#94d290"/>
<circle cx="624.8" cy="226.3" r="2.2" fill="#94d290"/>
<circle cx="623.5" cy="229.6" r="2.4" fill="#7fc37c"/>
<circle cx="620.3" cy="230.3" r="1.9" fill="#a3d99e"/>
<circle cx="617.6" cy="226.6" r="2.0" fill="#7fc37c"/>
<circle cx="618.9" cy="223.9" r="2.1" fill="#a3d99e"/>
<circle cx="623.6" cy="224.0" r="2.1" fill="#7fc37c"/>
<circle cx="621.5" cy="229.5" r="1.7" fill="#6cba6c"/>
<circle cx="613.3" cy="219.0" r="4.0" fill="#94d290"/>
<circle cx="616.2" cy="219.6" r="1.9" fill="#a3d99e"/>
<circle cx="615.3" cy="221.2" r="2.0" fill="#94d290"/>
<circle cx="611.4" cy="221.2" r="1.5" fill="#a3d99e"/>
<circle cx="610.4" cy="218.6" r="1.6" fill="#94d290"/>
<circle cx="611.2" cy="216.9" r="1.8" fill="#7fc37c"/>
<circle cx="615.3" cy="216.8" r="1.8" fill="#7fc37c"/>
<circle cx="613.9" cy="220.1" r="1.0" fill="#6cba6c"/>
<circle cx="614.3" cy="213.0" r="3.9" fill="#88cb84"/>
<circle cx="617.0" cy="213.7" r="1.9" fill="#a3d99e"/>
<circle cx="616.0" cy="215.2" r="1.5" fill="#7fc37c"/>
<circle cx="613.3" cy="215.6" r="1.5" fill="#7fc37c"/>
<circle cx="611.5" cy="213.2" r="1.7" fill="#a3d99e"/>
<circle cx="613.1" cy="210.4" r="1.6" fill="#88cb84"/>
<circle cx="615.1" cy="210.3" r="1.8" fill="#88cb84"/>
<circle cx="613.8" cy="210.5" r="0.9" fill="#6cba6c"/>
<circle cx="613.7" cy="228.2" r="4.0" fill="#94d290"/>
<circle cx="616.6" cy="228.5" r="1.9" fill="#a3d99e"/>
<circle cx="615.3" cy="230.7" r="1.7" fill="#7fc37c"/>
<circle cx="612.8" cy="231.0" r="1.9" fill="#a3d99e"/>
<circle cx="610.8" cy="228.8" r="1.9" fill="#a3d99e"/>
<circle cx="612.8" cy="225.4" r="1.8" fill="#a3d99e"/>
<circle cx="615.4" cy="225.9" r="1.8" fill="#a3d99e"/>
<circle cx="615.1" cy="228.6" r="1.3" fill="#6cba6c"/>
<circle cx="622.7" cy="233.9" r="3.6" fill="#94d290"/>
<circle cx="625.2" cy="233.3" r="1.4" fill="#a3d99e"/>
<circle cx="624.2" cy="236.1" r="1.4" fill="#7fc37c"/>
<circle cx="621.3" cy="236.2" r="1.6" fill="#a3d99e"/>
<circle cx="620.1" cy="233.9" r="1.5" fill="#7fc37c"/>
<circle cx="620.8" cy="232.2" r="1.7" fill="#a3d99e"/>
<circle cx="624.5" cy="232.1" r="1.7" fill="#94d290"/>
<circle cx="623.5" cy="231.7" r="1.2" fill="#6cba6c"/>
<circle cx="610.5" cy="219.9" r="4.0" fill="#94d290"/>
<circle cx="613.4" cy="219.4" r="1.8" fill="#7fc37c"/>
<circle cx="612.0" cy="222.4" r="1.7" fill="#7fc37c"/>
<circle cx="608.5" cy="222.0" r="1.6" fill="#94d290"/>
<circle cx="607.6" cy="219.7" r="1.8" fill="#94d290"/>
<circle cx="609.2" cy="217.3" r="1.6" fill="#a3d99e"/>
<circle cx="612.3" cy="217.6" r="1.6" fill="#a3d99e"/>
<circle cx="608.5" cy="219.8" r="1.2" fill="#6cba6c"/>
<circle cx="611.7" cy="219.1" r="5.1" fill="#9dd698"/>
<circle cx="615.4" cy="218.7" r="2.2" fill="#7fc37c"/>
<circle cx="613.7" cy="222.3" r="2.4" fill="#a3d99e"/>
<circle cx="610.5" cy="222.6" r="2.5" fill="#7fc37c"/>
<circle cx="608.2" cy="220.2" r="2.2" fill="#a3d99e"/>
<circle cx="610.9" cy="215.6" r="2.2" fill="#7fc37c"/>
<circle cx="613.4" cy="215.8" r="2.4" fill="#9dd698"/>
<circle cx="608.7" cy="216.2" r="1.6" fill="#6cba6c"/>
<circle cx="603.5" cy="204.0" r="4.0" fill="#88cb84"/>
<circle cx="606.3" cy="204.6" r="1.8" fill="#88cb84"/>
<circle cx="604.9" cy="206.5" r="1.9" fill="#7fc37c"/>
<circle cx="602.8" cy="206.8" r="1.5" fill="#7fc37c"/>
<circle cx="600.6" cy="203.7" r="1.7" fill="#a3d99e"/>
<circle cx="601.5" cy="201.8" r="1.7" fill="#7fc37c"/>
<circle cx="604.3" cy="201.2" r="1.6" fill="#7fc37c"/>
<circle cx="604.9" cy="205.9" r="1.0" fill="#6cba6c"/>
<circle cx="608.2" cy="206.1" r="5.0" fill="#88cb84"/>
<circle cx="611.8" cy="205.6" r="1.9" fill="#7fc37c"/>
<circle cx="609.0" cy="209.7" r="2.2" fill="#7fc37c"/>
<circle cx="605.7" cy="208.7" r="2.3" fill="#88cb84"/>
<circle cx="604.6" cy="206.6" r="1.9" fill="#a3d99e"/>
<circle cx="606.0" cy="203.2" r="2.4" fill="#88cb84"/>
<circle cx="610.8" cy="203.6" r="2.1" fill="#7fc37c"/>
<circle cx="606.0" cy="205.2" r="1.7" fill="#6cba6c"/>
<circle cx="609.5" cy="204.0" r="4.9" fill="#94d290"/>
<circle cx="613.1" cy="204.5" r="1.9" fill="#a3d99e"/>
<circle cx="611.5" cy="207.0" r="2.2" fill="#94d290"/>
<circle cx="607.5" cy="207.0" r="2.0" fill="#94d290"/>
<circle cx="606.0" cy="203.2" r="2.2" fill="#94d290"/>
<circle cx="607.7" cy="201.0" r="2.1" fill="#7fc37c"/>
<circle cx="610.8" cy="200.7" r="2.3" fill="#a3d99e"/>
<circle cx="607.9" cy="205.1" r="1.3" fill="#6cba6c"/>
<circle cx="604.1" cy="200.1" r="4.4" fill="#94d290"/>
<circle cx="607.2" cy="199.3" r="1.9" fill="#7fc37c"/>
<circle cx="605.6" cy="202.9" r="1.9" fill="#7fc37c"/>
<circle cx="601.7" cy="202.3" r="1.9" fill="#94d290"/>
<circle cx="600.8" cy="200.0" r="1.8" fill="#94d290"/>
<circle cx="602.2" cy="197.5" r="1.7" fill="#94d290"/>
<circle cx="605.4" cy="197.2" r="2.1" fill="#94d290"/>
<circle cx="606.5" cy="201.7" r="1.3" fill="#6cba6c"/>
<circle cx="636.2" cy="240.1" r="4.2" fill="#88cb84"/>
<circle cx="639.2" cy="240.6" r="1.8" fill="#a3d99e"/>
<circle cx="636.9" cy="243.1" r="1.6" fill="#a3d99e"/>
<circle cx="634.6" cy="242.7" r="2.0" fill="#88cb84"/>
<circle cx="633.2" cy="240.8" r="2.0" fill="#7fc37c"/>
<circle cx="634.5" cy="237.5" r="1.8" fill="#7fc37c"/>
<circle cx="638.2" cy="237.8" r="2.0" fill="#88cb84"/>
<circle cx="633.9" cy="239.7" r="1.4" fill="#6cba6c"/>
<circle cx="643.1" cy="243.1" r="4.8" fill="#8fcf8a"/>
<circle cx="646.5" cy="242.9" r="2.3" fill="#a3d99e"/>
<circle cx="644.1" cy="246.4" r="2.4" fill="#8fcf8a"/>
<circle cx="640.8" cy="245.8" r="1.9" fill="#8fcf8a"/>
<circle cx="639.6" cy="243.0" r="2.2" fill="#a3d99e"/>
<circle cx="641.7" cy="239.9" r="2.3" fill="#7fc37c"/>
<circle cx="644.0" cy="239.7" r="2.2" fill="#8fcf8a"/>
<circle cx="645.0" cy="241.3" r="1.6" fill="#6cba6c"/>
<circle cx="632.6" cy="233.8" r="4.6" fill="#88cb84"/>
<circle cx="635.9" cy="233.8" r="2.0" fill="#88cb84"/>
<circle cx="634.9" cy="236.2" r="1.9" fill="#a3d99e"/>
<circle cx="631.5" cy="236.9" r="1.9" fill="#a3d99e"/>
<circle cx="629.4" cy="234.7" r="2.0" fill="#7fc37c"/>
<circle cx="630.6" cy="231.1" r="1.9" fill="#88cb84"/>
<circle cx="634.2" cy="230.8" r="1.8" fill="#88cb84"/>
<circle cx="629.6" cy="233.2" r="1.4" fill="#6cba6c"/>
<circle cx="630.4" cy="253.8" r="3.7" fill="#9dd698"/>
<circle cx="633.0" cy="253.2" r="1.5" fill="#7fc37c"/>
<circle cx="631.1" cy="256.4" r="1.5" fill="#9dd698"/>
<circle cx="628.8" cy="256.0" r="1.7" fill="#7fc37c"/>
<circle cx="627.8" cy="253.6" r="1.5" fill="#7fc37c"/>
<circle cx="629.4" cy="251.4" r="1.6" fill="#9dd698"/>
<circle cx="631.7" cy="251.5" r="1.5" fill="#9dd698"/>
<circle cx="629.0" cy="252.4" r="1.2" fill="#6cba6c"/>
<circle cx="643.4" cy="243.2" r="4.0" fill="#94d290"/>
<circle cx="646.2" cy="243.9" r="1.7" fill="#a3d99e"/>
<circle cx="645.5" cy="245.3" r="1.8" fill="#7fc37c"/>
<circle cx="642.6" cy="246.1" r="1.5" fill="#a3d99e"/>
<circle cx="640.5" cy="243.9" r="1.5" fill="#94d290"/>
<circle cx="641.5" cy="241.0" r="1.7" fill="#a3d99e"/>
<circle cx="645.4" cy="241.1" r="1.9" fill="#94d290"/>
<circle cx="645.8" cy="242.3" r="1.0" fill="#6cba6c"/>
<circle cx="639.5" cy="231.6" r="5.0" fill="#9dd698"/>
<circle cx="643.1" cy="232.4" r="2.5" fill="#7fc37c"/>
<circle cx="641.9" cy="234.4" r="1.9" fill="#7fc37c"/>
<circle cx="638.5" cy="235.1" r="2.1" fill="#9dd698"/>
<circle cx="635.9" cy="231.5" r="2.3" fill="#7fc37c"/>
<circle cx="637.4" cy="228.6" r="2.4" fill="#7fc37c"/>
<circle cx="640.5" cy="228.1" r="2.3" fill="#9dd698"/>
<circle cx="638.6" cy="234.6" r="1.3" fill="#6cba6c"/>
<circle cx="642.4" cy="230.9" r="4.1" fill="#9dd698"/>
<circle cx="645.4" cy="230.4" r="1.9" fill="#7fc37c"/>
<circle cx="644.5" cy="233.0" r="1.6" fill="#9dd698"/>
<circle cx="640.4" cy="233.2" r="1.6" fill="#9dd698"/>
<circle cx="639.4" cy="230.5" r="2.0" fill="#7fc37c"/>
<circle cx="640.7" cy="228.4" r="1.7" fill="#a3d99e"/>
<circle cx="643.1" cy="228.0" r="1.9" fill="#a3d99e"/>
<circle cx="641.3" cy="229.6" r="1.0" fill="#6cba6c"/>
<circle cx="642.3" cy="246.8" r="4.7" fill="#8fcf8a"/>
<circle cx="645.6" cy="245.8" r="1.9" fill="#7fc37c"/>
<circle cx="643.6" cy="250.0" r="2.0" fill="#7fc37c"/>
<circle cx="640.1" cy="249.4" r="2.3" fill="#7fc37c"/>
<circle cx="638.9" cy="247.5" r="2.1" fill="#8fcf8a"/>
<circle cx="641.1" cy="243.5" r="2.2" fill="#a3d99e"/>
<circle cx="644.5" cy="244.1" r="2.1" fill="#7fc37c"/>
<circle cx="644.7" cy="246.5" r="1.5" fill="#6cba6c"/>
<circle cx="635.9" cy="240.5" r="4.5" fill="#94d290"/>
<circle cx="639.2" cy="240.0" r="1.7" fill="#94d290"/>
<circle cx="637.6" cy="243.4" r="2.0" fill="#94d290"/>
<circle cx="633.6" cy="242.8" r="2.2" fill="#94d290"/>
<circle cx="632.7" cy="241.0" r="1.7" fill="#94d290"/>
<circle cx="634.2" cy="237.8" r="2.2" fill="#7fc37c"/>
<circle cx="637.0" cy="237.4" r="1.8" fill="#7fc37c"/>
<circle cx="636.7" cy="241.6" r="1.4" fill="#6cba6c"/>
<circle cx="642.6" cy="260.2" r="4.9" fill="#88cb84"/>
<circle cx="646.2" cy="259.8" r="2.2" fill="#7fc37c"/>
<circle cx="644.8" cy="263.0" r="2.0" fill="#7fc37c"/>
<circle cx="641.3" cy="263.5" r="2.0" fill="#88cb84"/>
<circle cx="639.1" cy="260.7" r="2.4" fill="#88cb84"/>
<circle cx="640.5" cy="257.3" r="2.1" fill="#88cb84"/>
<circle cx="644.4" cy="257.1" r="2.0" fill="#88cb84"/>
<circle cx="643.7" cy="263.6" r="1.2" fill="#6cba6c"/>
<circle cx="644.9" cy="267.7" r="4.3" fill="#88cb84"/>
<circle cx="648.0" cy="266.9" r="1.8" fill="#88cb84"/>
<circle cx="647.2" cy="269.9" r="1.9" fill="#a3d99e"/>
<circle cx="643.9" cy="270.7" r="1.7" fill="#a3d99e"/>
<circle cx="641.9" cy="267.0" r="1.8" fill="#7fc37c"/>
<circle cx="643.8" cy="264.8" r="2.0" fill="#88cb84"/>
<circle cx="645.8" cy="264.7" r="1.9" fill="#a3d99e"/>
<circle cx="644.0" cy="264.9" r="1.2" fill="#6cba6c"/>
<circle cx="648.0" cy="258.5" r="3.6" fill="#94d290"/>
<circle cx="650.6" cy="259.0" r="1.7" fill="#7fc37c"/>
<circle cx="649.1" cy="260.9" r="1.4" fill="#7fc37c"/>
<circle cx="647.3" cy="261.0" r="1.4" fill="#7fc37c"/>
<circle cx="645.4" cy="258.4" r="1.4" fill="#94d290"/>
<circle cx="647.1" cy="256.0" r="1.7" fill="#94d290"/>
<circle cx="649.5" cy="256.3" r="1.4" fill="#94d290"/>
<circle cx="647.5" cy="257.3" r="1.3" fill="#6cba6c"/>
<circle cx="639.4" cy="259.3" r="4.6" fill="#88cb84"/>
<circle cx="642.7" cy="259.1" r="1.7" fill="#7fc37c"/>
<circle cx="640.8" cy="262.4" r="1.9" fill="#7fc37c"/>
<circle cx="638.3" cy="262.5" r="1.7" fill="#88cb84"/>
<circle cx="636.1" cy="259.5" r="2.2" fill="#7fc37c"/>
<circle cx="637.9" cy="256.3" r="1.9" fill="#88cb84"/>
<circle cx="640.4" cy="256.1" r="1.8" fill="#88cb84"/>
<circle cx="640.3" cy="262.0" r="1.1" fill="#6cba6c"/>
<circle cx="672.6" cy="282.6" r="4.5" fill="#94d290"/>
<circle cx="675.9" cy="282.3" r="1.8" fill="#94d290"/>
<circle cx="673.5" cy="285.8" r="1.8" fill="#7fc37c"/>
<circle cx="670.5" cy="285.2" r="2.1" fill="#94d290"/>
<circle cx="669.3" cy="283.0" r="2.1" fill="#94d290"/>
<circle cx="671.8" cy="279.4" r="2.0" fill="#94d290"/>
<circle cx="674.4" cy="279.9" r="2.0" fill="#94d290"/>
<circle cx="675.2" cy="283.4" r="1.5" fill="#6cba6c"/>
<circle cx="675.4" cy="273.4" r="3.8" fill="#9dd698"/>
<circle cx="678.1" cy="273.6" r="1.5" fill="#7fc37c"/>
<circle cx="677.2" cy="275.5" r="1.5" fill="#7fc37c"/>
<circle cx="673.4" cy="275.4" r="1.5" fill="#7fc37c"/>
<circle cx="672.6" cy="274.0" r="1.5" fill="#a3d99e"/>
<circle cx="674.4" cy="270.8" r="1.5" fill="#a3d99e"/>
<circle cx="677.2" cy="271.3" r="1.7" fill="#a3d99e"/>
<circle cx="677.2" cy="271.3" r="1.2" fill="#6cba6c"/>
<circle cx="674.1" cy="276.4" r="4.4" fill="#9dd698"/>
<circle cx="677.3" cy="276.0" r="1.8" fill="#7fc37c"/>
<circle cx="675.5" cy="279.3" r="1.9" fill="#7fc37c"/>
<circle cx="673.1" cy="279.4" r="1.7" fill="#7fc37c"/>
<circle cx="670.9" cy="276.4" r="1.9" fill="#a3d99e"/>
<circle cx="673.0" cy="273.3" r="1.9" fill="#9dd698"/>
<circle cx="676.2" cy="273.9" r="1.9" fill="#9dd698"/>
<circle cx="671.8" cy="275.9" r="1.1" fill="#6cba6c"/>
<circle cx="673.4" cy="267.8" r="4.2" fill="#94d290"/>
<circle cx="676.4" cy="267.0" r="2.0" fill="#a3d99e"/>
<circle cx="674.9" cy="270.5" r="1.6" fill="#a3d99e"/>
<circle cx="671.3" cy="270.0" r="1.9" fill="#94d290"/>
<circle cx="670.4" cy="268.7" r="1.6" fill="#a3d99e"/>
<circle cx="672.3" cy="264.9" r="2.0" fill="#94d290"/>
<circle cx="674.3" cy="264.8" r="2.0" fill="#7fc37c"/>
<circle cx="676.2" cy="270.3" r="1.1" fill="#6cba6c"/>
<circle cx="675.7" cy="269.0" r="4.8" fill="#88cb84"/>
<circle cx="679.2" cy="269.2" r="1.9" fill="#7fc37c"/>
<circle cx="676.7" cy="272.3" r="2.0" fill="#7fc37c"/>
<circle cx="674.6" cy="272.3" r="2.1" fill="#7fc37c"/>
<circle cx="672.3" cy="269.6" r="1.9" fill="#a3d99e"/>
<circle cx="673.5" cy="266.3" r="2.0" fill="#88cb84"/>
<circle cx="676.8" cy="265.7" r="1.9" fill="#7fc37c"/>
<circle cx="676.9" cy="271.6" r="1.2" fill="#6cba6c"/>
<circle cx="671.3" cy="283.5" r="4.8" fill="#88cb84"/>
<circle cx="674.6" cy="284.4" r="2.1" fill="#a3d99e"/>
<circle cx="672.8" cy="286.6" r="2.3" fill="#88cb84"/>
<circle cx="670.0" cy="286.7" r="2.1" fill="#7fc37c"/>
<circle cx="667.8" cy="283.0" r="2.0" fill="#7fc37c"/>
<circle cx="670.5" cy="280.1" r="2.1" fill="#7fc37c"/>
<circle cx="672.7" cy="280.3" r="1.8" fill="#88cb84"/>
<circle cx="669.1" cy="285.1" r="1.1" fill="#6cba6c"/>
<circle cx="677.6" cy="271.9" r="4.8" fill="#88cb84"/>
<circle cx="681.1" cy="272.4" r="2.2" fill="#88cb84"/>
<circle cx="680.0" cy="274.5" r="2.2" fill="#7fc37c"/>
<circle cx="676.0" cy="275.0" r="2.0" fill="#88cb84"/>
<circle cx="674.2" cy="272.7" r="1.9" fill="#a3d99e"/>
<circle cx="675.1" cy="269.5" r="1.8" fill="#a3d99e"/>
<circle cx="679.1" cy="268.7" r="1.9" fill="#7fc37c"/>
<circle cx="677.9" cy="271.3" r="1.3" fill="#6cba6c"/>
<circle cx="678.8" cy="275.4" r="3.8" fill="#94d290"/>
<circle cx="681.5" cy="274.8" r="1.8" fill="#94d290"/>
<circle cx="679.9" cy="278.0" r="1.6" fill="#94d290"/>
<circle cx="677.3" cy="277.7" r="1.8" fill="#7fc37c"/>
<circle cx="676.1" cy="275.6" r="1.5" fill="#94d290"/>
<circle cx="676.9" cy="273.5" r="1.8" fill="#7fc37c"/>
<circle cx="680.4" cy="273.1" r="1.7" fill="#a3d99e"/>
<circle cx="681.2" cy="276.7" r="1.0" fill="#6cba6c"/>
<circle cx="675.0" cy="270.2" r="5.0" fill="#9dd698"/>
<circle cx="678.6" cy="269.6" r="2.0" fill="#9dd698"/>
<circle cx="677.7" cy="272.7" r="2.2" fill="#9dd698"/>
<circle cx="673.9" cy="273.7" r="2.0" fill="#a3d99e"/>
<circle cx="671.4" cy="269.9" r="2.2" fill="#7fc37c"/>
<circle cx="673.8" cy="266.8" r="2.0" fill="#7fc37c"/>
<circle cx="676.0" cy="266.7" r="2.2" fill="#a3d99e"/>
<circle cx="677.0" cy="271.7" r="1.2" fill="#6cba6c"/>
<circle cx="683.9" cy="269.2" r="4.9" fill="#9dd698"/>
<circle cx="687.4" cy="268.5" r="2.4" fill="#7fc37c"/>
<circle cx="686.2" cy="272.0" r="1.9" fill="#7fc37c"/>
<circle cx="681.5" cy="271.8" r="2.4" fill="#7fc37c"/>
<circle cx="680.4" cy="268.8" r="2.0" fill="#a3d99e"/>
<circle cx="682.5" cy="266.0" r="2.2" fill="#a3d99e"/>
<circle cx="686.5" cy="266.8" r="2.0" fill="#9dd698"/>
<circle cx="681.1" cy="269.3" r="1.2" fill="#6cba6c"/>
<circle cx="685.1" cy="265.2" r="5.0" fill="#94d290"/>
<circle cx="688.7" cy="265.7" r="2.1" fill="#7fc37c"/>
<circle cx="687.2" cy="268.1" r="2.0" fill="#a3d99e"/>
<circle cx="682.6" cy="267.8" r="2.4" fill="#a3d99e"/>
<circle cx="681.5" cy="265.3" r="2.4" fill="#a3d99e"/>
<circle cx="682.5" cy="262.7" r="1.9" fill="#a3d99e"/>
<circle cx="686.4" cy="261.8" r="2.4" fill="#94d290"/>
<circle cx="684.4" cy="265.8" r="1.5" fill="#6cba6c"/>
<circle cx="674.0" cy="263.1" r="3.8" fill="#94d290"/>
<circle cx="676.8" cy="262.8" r="1.5" fill="#94d290"/>
<circle cx="676.0" cy="265.0" r="1.5" fill="#a3d99e"/>
<circle cx="672.4" cy="265.4" r="1.8" fill="#a3d99e"/>
<circle cx="671.3" cy="263.8" r="1.8" fill="#7fc37c"/>
<circle cx="672.2" cy="260.9" r="1.9" fill="#a3d99e"/>
<circle cx="676.0" cy="261.0" r="1.5" fill="#a3d99e"/>
<circle cx="676.4" cy="261.0" r="1.0" fill="#6cba6c"/>
<circle cx="670.0" cy="299.7" r="3.7" fill="#8fcf8a"/>
<circle cx="672.7" cy="300.2" r="1.7" fill="#7fc37c"/>
<circle cx="671.4" cy="302.0" r="1.5" fill="#a3d99e"/>
<circle cx="669.1" cy="302.2" r="1.5" fill="#7fc37c"/>
<circle cx="667.3" cy="300.1" r="1.6" fill="#7fc37c"/>
<circle cx="668.0" cy="297.7" r="1.7" fill="#7fc37c"/>
<circle cx="671.7" cy="297.5" r="1.7" fill="#7fc37c"/>
<circle cx="671.9" cy="300.3" r="0.9" fill="#6cba6c"/>
<circle cx="674.9" cy="298.3" r="4.2" fill="#88cb84"/>
<circle cx="677.9" cy="298.3" r="1.6" fill="#a3d99e"/>
<circle cx="676.8" cy="300.7" r="2.0" fill="#88cb84"/>
<circle cx="673.2" cy="300.9" r="1.7" fill="#7fc37c"/>
<circle cx="672.0" cy="299.2" r="1.7" fill="#88cb84"/>
<circle cx="672.6" cy="296.3" r="1.8" fill="#7fc37c"/>
<circle cx="676.7" cy="295.9" r="2.0" fill="#7fc37c"/>
<circle cx="675.4" cy="301.1" r="1.2" fill="#6cba6c"/>
<circle cx="671.9" cy="298.8" r="4.5" fill="#94d290"/>
<circle cx="675.1" cy="298.8" r="1.7" fill="#a3d99e"/>
<circle cx="673.1" cy="301.8" r="1.9" fill="#a3d99e"/>
<circle cx="670.2" cy="301.6" r="1.7" fill="#7fc37c"/>
<circle cx="668.7" cy="299.1" r="1.9" fill="#7fc37c"/>
<circle cx="671.0" cy="295.7" r="2.1" fill="#7fc37c"/>
<circle cx="674.1" cy="296.4" r="1.7" fill="#94d290"/>
<circle cx="670.7" cy="298.4" r="1.3" fill="#6cba6c"/>
<circle cx="681.3" cy="296.4" r="3.8" fill="#9dd698"/>
<circle cx="684.1" cy="295.8" r="1.7" fill="#a3d99e"/>
<circle cx="682.4" cy="299.0" r="1.7" fill="#7fc37c"/>
<circle cx="679.8" cy="298.8" r="1.7" fill="#7fc37c"/>
<circle cx="678.6" cy="296.2" r="1.8" fill="#9dd698"/>
<circle cx="679.9" cy="294.0" r="1.8" fill="#7fc37c"/>
<circle cx="682.8" cy="294.1" r="1.5" fill="#7fc37c"/>
<circle cx="682.1" cy="297.5" r="1.1" fill="#6cba6c"/>
<circle cx="715.7" cy="293.1" r="4.0" fill="#94d290"/>
<circle cx="718.6" cy="293.5" r="2.0" fill="#a3d99e"/>
<circle cx="717.4" cy="295.5" r="1.7" fill="#94d290"/>
<circle cx="714.6" cy="295.8" r="1.9" fill="#7fc37c"/>
<circle cx="712.9" cy="292.3" r="1.8" fill="#94d290"/>
<circle cx="713.8" cy="291.0" r="1.8" fill="#94d290"/>
<circle cx="716.9" cy="290.5" r="2.0" fill="#7fc37c"/>
<circle cx="717.0" cy="292.8" r="1.0" fill="#6cba6c"/>
<circle cx="700.1" cy="281.3" r="4.5" fill="#9dd698"/>
<circle cx="703.4" cy="281.2" r="1.7" fill="#7fc37c"/>
<circle cx="701.4" cy="284.3" r="2.0" fill="#a3d99e"/>
<circle cx="698.8" cy="284.3" r="1.7" fill="#7fc37c"/>
<circle cx="696.8" cy="281.1" r="1.9" fill="#a3d99e"/>
<circle cx="698.0" cy="278.7" r="2.2" fill="#a3d99e"/>
<circle cx="701.9" cy="278.5" r="2.1" fill="#7fc37c"/>
<circle cx="702.3" cy="282.4" r="1.4" fill="#6cba6c"/>
<circle cx="712.7" cy="288.3" r="4.9" fill="#94d290"/>
<circle cx="716.2" cy="288.6" r="2.2" fill="#7fc37c"/>
<circle cx="714.6" cy="291.3" r="2.0" fill="#a3d99e"/>
<circle cx="711.7" cy="291.7" r="2.1" fill="#7fc37c"/>
<circle cx="709.1" cy="287.8" r="2.2" fill="#7fc37c"/>
<circle cx="711.6" cy="284.9" r="2.1" fill="#94d290"/>
<circle cx="714.7" cy="285.3" r="2.1" fill="#a3d99e"/>
<circle cx="713.8" cy="290.8" r="1.7" fill="#6cba6c"/>
<circle cx="697.4" cy="293.2" r="4.1" fill="#8fcf8a"/>
<circle cx="700.3" cy="292.4" r="1.8" fill="#8fcf8a"/>
<circle cx="698.6" cy="295.9" r="2.0" fill="#8fcf8a"/>
<circle cx="695.9" cy="295.7" r="1.6" fill="#a3d99e"/>
<circle cx="694.4" cy="293.3" r="1.6" fill="#7fc37c"/>
<circle cx="695.9" cy="290.6" r="1.8" fill="#7fc37c"/>
<circle cx="698.9" cy="290.6" r="1.7" fill="#7fc37c"/>
<circle cx="695.7" cy="294.2" r="1.1" fill="#6cba6c"/>
<circle cx="700.6" cy="295.6" r="4.7" fill="#88cb84"/>
<circle cx="704.0" cy="295.9" r="1.9" fill="#7fc37c"/>
<circle cx="702.5" cy="298.5" r="1.8" fill="#7fc37c"/>
<circle cx="698.2" cy="298.1" r="2.1" fill="#a3d99e"/>
<circle cx="697.1" cy="295.9" r="1.9" fill="#88cb84"/>
<circle cx="698.5" cy="292.8" r="2.0" fill="#a3d99e"/>
<circle cx="703.1" cy="293.2" r="2.3" fill="#7fc37c"/>
<circle cx="700.3" cy="293.4" r="1.6" fill="#6cba6c"/>
<circle cx="716.9" cy="280.6" r="3.7" fill="#94d290"/>
<circle cx="719.5" cy="281.1" r="1.4" fill="#a3d99e"/>
<circle cx="718.0" cy="283.0" r="1.7" fill="#7fc37c"/>
<circle cx="715.6" cy="282.9" r="1.5" fill="#a3d99e"/>
<circle cx="714.2" cy="280.4" r="1.7" fill="#7fc37c"/>
<circle cx="715.4" cy="278.4" r="1.8" fill="#7fc37c"/>
<circle cx="718.5" cy="278.5" r="1.7" fill="#7fc37c"/>
<circle cx="717.8" cy="280.5" r="1.2" fill="#6cba6c"/>
<circle cx="706.1" cy="289.6" r="4.8" fill="#88cb84"/>
<circle cx="709.6" cy="289.5" r="2.0" fill="#a3d99e"/>
<circle cx="708.5" cy="292.1" r="2.3" fill="#88cb84"/>
<circle cx="703.6" cy="292.0" r="2.3" fill="#88cb84"/>
<circle cx="702.7" cy="290.4" r="2.1" fill="#7fc37c"/>
<circle cx="704.9" cy="286.3" r="1.9" fill="#7fc37c"/>
<circle cx="708.1" cy="286.7" r="1.8" fill="#88cb84"/>
<circle cx="704.1" cy="286.7" r="1.3" fill="#6cba6c"/>
<circle cx="711.3" cy="293.4" r="4.5" fill="#94d290"/>
<circle cx="714.5" cy="293.9" r="1.9" fill="#94d290"/>
<circle cx="713.4" cy="295.9" r="1.9" fill="#a3d99e"/>
<circle cx="710.2" cy="296.5" r="2.2" fill="#a3d99e"/>
<circle cx="708.1" cy="292.4" r="1.7" fill="#a3d99e"/>
<circle cx="710.1" cy="290.3" r="2.1" fill="#94d290"/>
<circle cx="712.9" cy="290.5" r="1.8" fill="#94d290"/>
<circle cx="712.8" cy="293.0" r="1.5" fill="#6cba6c"/>
<circle cx="703.8" cy="281.7" r="4.4" fill="#94d290"/>
<circle cx="707.0" cy="281.7" r="2.0" fill="#7fc37c"/>
<circle cx="705.4" cy="284.5" r="1.7" fill="#7fc37c"/>
<circle cx="702.6" cy="284.8" r="1.7" fill="#a3d99e"/>
<circle cx="700.6" cy="281.1" r="1.7" fill="#7fc37c"/>
<circle cx="702.1" cy="279.0" r="2.0" fill="#a3d99e"/>
<circle cx="705.0" cy="278.8" r="1.9" fill="#7fc37c"/>
<circle cx="703.3" cy="284.6" r="1.1" fill="#6cba6c"/>
<circle cx="712.6" cy="278.0" r="4.5" fill="#8fcf8a"/>
<circle cx="715.9" cy="278.3" r="2.2" fill="#7fc37c"/>
<circle cx="713.7" cy="281.1" r="1.8" fill="#7fc37c"/>
<circle cx="711.0" cy="280.9" r="2.2" fill="#8fcf8a"/>
<circle cx="709.4" cy="278.5" r="1.9" fill="#8fcf8a"/>
<circle cx="710.7" cy="275.3" r="2.2" fill="#7fc37c"/>
<circle cx="714.0" cy="275.0" r="2.1" fill="#a3d99e"/>
<circle cx="714.4" cy="276.1" r="1.3" fill="#6cba6c"/>
<circle cx="710.3" cy="322.5" r="4.2" fill="#88cb84"/>
<circle cx="713.3" cy="322.3" r="1.8" fill="#7fc37c"/>
<circle cx="711.8" cy="325.2" r="1.7" fill="#a3d99e"/>
<circle cx="709.0" cy="325.3" r="1.7" fill="#7fc37c"/>
<circle cx="707.2" cy="322.0" r="1.8" fill="#7fc37c"/>
<circle cx="709.1" cy="319.7" r="1.7" fill="#a3d99e"/>
<circle cx="711.1" cy="319.6" r="2.1" fill="#7fc37c"/>
<circle cx="711.6" cy="324.8" r="1.3" fill="#6cba6c"/>
<circle cx="706.5" cy="310.7" r="3.6" fill="#94d290"/>
<circle cx="709.1" cy="311.2" r="1.6" fill="#a3d99e"/>
<circle cx="708.4" cy="312.6" r="1.6" fill="#a3d99e"/>
<circle cx="705.0" cy="312.9" r="1.6" fill="#a3d99e"/>
<circle cx="703.9" cy="310.4" r="1.7" fill="#a3d99e"/>
<circle cx="704.6" cy="308.8" r="1.4" fill="#a3d99e"/>
<circle cx="707.8" cy="308.4" r="1.7" fill="#94d290"/>
<circle cx="707.3" cy="312.6" r="1.0" fill="#6cba6c"/>
<circle cx="715.9" cy="310.9" r="3.7" fill="#94d290"/>
<circle cx="718.6" cy="311.3" r="1.6" fill="#7fc37c"/>
<circle cx="716.7" cy="313.5" r="1.5" fill="#94d290"/>
<circle cx="714.8" cy="313.4" r="1.6" fill="#a3d99e"/>
<circle cx="713.2" cy="310.7" r="1.8" fill="#7fc37c"/>
<circle cx="714.6" cy="308.5" r="1.4" fill="#94d290"/>
<circle cx="717.6" cy="308.8" r="1.6" fill="#a3d99e"/>
<circle cx="718.1" cy="310.6" r="0.9" fill="#6cba6c"/>
<circle cx="710.8" cy="324.1" r="4.2" fill="#94d290"/>
<circle cx="713.8" cy="324.1" r="1.8" fill="#94d290"/>
<circle cx="712.9" cy="326.3" r="1.8" fill="#94d290"/>
<circle cx="709.1" cy="326.6" r="1.8" fill="#94d290"/>
<circle cx="707.8" cy="323.8" r="1.6" fill="#94d290"/>
<circle cx="708.9" cy="321.8" r="1.6" fill="#7fc37c"/>
<circle cx="711.5" cy="321.1" r="1.9" fill="#94d290"/>
<circle cx="710.5" cy="325.5" r="1.4" fill="#6cba6c"/>
<circle cx="713.0" cy="320.7" r="4.1" fill="#94d290"/>
<circle cx="716.0" cy="321.1" r="1.6" fill="#a3d99e"/>
<circle cx="714.4" cy="323.4" r="1.8" fill="#a3d99e"/>
<circle cx="710.9" cy="322.9" r="1.7" fill="#94d290"/>
<circle cx="710.0" cy="320.3" r="1.6" fill="#94d290"/>
<circle cx="712.1" cy="317.8" r="1.9" fill="#a3d99e"/>
<circle cx="713.8" cy="317.8" r="1.7" fill="#a3d99e"/>
<circle cx="713.6" cy="323.4" r="1.4" fill="#6cba6c"/>
<circle cx="730.4" cy="316.1" r="4.5" fill="#9dd698"/>
<circle cx="733.7" cy="316.1" r="1.8" fill="#9dd698"/>
<circle cx="732.3" cy="318.8" r="2.0" fill="#a3d99e"/>
<circle cx="728.3" cy="318.6" r="1.9" fill="#7fc37c"/>
<circle cx="727.3" cy="315.3" r="2.1" fill="#a3d99e"/>
<circle cx="728.5" cy="313.5" r="1.8" fill="#a3d99e"/>
<circle cx="732.8" cy="313.9" r="2.1" fill="#a3d99e"/>
<circle cx="729.4" cy="316.8" r="1.6" fill="#6cba6c"/>
<circle cx="734.2" cy="306.8" r="4.8" fill="#9dd698"/>
<circle cx="737.6" cy="307.8" r="2.0" fill="#7fc37c"/>
<circle cx="735.6" cy="310.1" r="2.2" fill="#9dd698"/>
<circle cx="731.9" cy="309.5" r="2.0" fill="#9dd698"/>
<circle cx="730.7" cy="307.2" r="2.0" fill="#9dd698"/>
<circle cx="732.6" cy="303.7" r="2.3" fill="#9dd698"/>
<circle cx="735.6" cy="303.6" r="1.9" fill="#a3d99e"/>
<circle cx="731.8" cy="310.1" r="1.6" fill="#6cba6c"/>
<circle cx="736.7" cy="309.5" r="4.4" fill="#8fcf8a"/>
<circle cx="739.9" cy="309.6" r="1.9" fill="#7fc37c"/>
<circle cx="738.7" cy="312.0" r="2.0" fill="#8fcf8a"/>
<circle cx="735.4" cy="312.5" r="1.7" fill="#7fc37c"/>
<circle cx="733.4" cy="309.6" r="1.8" fill="#7fc37c"/>
<circle cx="735.2" cy="306.7" r="1.7" fill="#7fc37c"/>
<circle cx="738.2" cy="306.7" r="1.7" fill="#7fc37c"/>
<circle cx="738.3" cy="307.9" r="1.3" fill="#6cba6c"/>
<circle cx="737.8" cy="309.9" r="4.9" fill="#9dd698"/>
<circle cx="741.4" cy="309.9" r="2.0" fill="#9dd698"/>
<circle cx="740.1" cy="312.6" r="2.0" fill="#a3d99e"/>
<circle cx="736.4" cy="313.2" r="2.2" fill="#7fc37c"/>
<circle cx="734.2" cy="310.1" r="2.2" fill="#9dd698"/>
<circle cx="735.5" cy="307.0" r="2.4" fill="#7fc37c"/>
<circle cx="739.3" cy="306.6" r="1.9" fill="#a3d99e"/>
<circle cx="737.5" cy="306.9" r="1.3" fill="#6cba6c"/>
<circle cx="729.6" cy="311.3" r="3.6" fill="#8fcf8a"/>
<circle cx="732.2" cy="310.6" r="1.8" fill="#a3d99e"/>
<circle cx="731.0" cy="313.6" r="1.6" fill="#7fc37c"/>
<circle cx="727.8" cy="313.2" r="1.5" fill="#8fcf8a"/>
<circle cx="727.1" cy="310.6" r="1.7" fill="#a3d99e"/>
<circle cx="729.0" cy="308.7" r="1.5" fill="#8fcf8a"/>
<circle cx="730.7" cy="308.9" r="1.8" fill="#7fc37c"/>
<circle cx="727.5" cy="309.0" r="1.1" fill="#6cba6c"/>
<circle cx="724.6" cy="334.0" r="4.9" fill="#8fcf8a"/>
<circle cx="728.1" cy="334.8" r="2.2" fill="#8fcf8a"/>
<circle cx="726.0" cy="337.3" r="1.9" fill="#7fc37c"/>
<circle cx="722.7" cy="337.0" r="2.2" fill="#a3d99e"/>
<circle cx="721.0" cy="334.0" r="2.0" fill="#8fcf8a"/>
<circle cx="722.5" cy="331.1" r="2.0" fill="#a3d99e"/>
<circle cx="725.8" cy="330.7" r="1.9" fill="#7fc37c"/>
<circle cx="727.6" cy="331.0" r="1.5" fill="#6cba6c"/>
<circle cx="731.3" cy="323.8" r="3.6" fill="#9dd698"/>
<circle cx="733.9" cy="323.1" r="1.4" fill="#9dd698"/>
<circle cx="732.0" cy="326.4" r="1.6" fill="#7fc37c"/>
<circle cx="729.9" cy="326.0" r="1.5" fill="#a3d99e"/>
<circle cx="728.8" cy="324.5" r="1.5" fill="#7fc37c"/>
<circle cx="729.9" cy="321.7" r="1.5" fill="#7fc37c"/>
<circle cx="732.2" cy="321.3" r="1.5" fill="#9dd698"/>
<circle cx="733.4" cy="325.8" r="1.0" fill="#6cba6c"/>
<circle cx="728.9" cy="323.0" r="5.0" fill="#94d290"/>
<circle cx="732.4" cy="322.1" r="2.2" fill="#7fc37c"/>
<circle cx="729.9" cy="326.4" r="2.0" fill="#7fc37c"/>
<circle cx="726.3" cy="325.5" r="2.4" fill="#7fc37c"/>
<circle cx="725.3" cy="322.2" r="2.2" fill="#7fc37c"/>
<circle cx="728.0" cy="319.5" r="2.1" fill="#94d290"/>
<circle cx="730.6" cy="319.8" r="2.2" fill="#94d290"/>
<circle cx="727.7" cy="324.6" r="1.3" fill="#6cba6c"/>
<circle cx="730.5" cy="326.8" r="4.3" fill="#94d290"/>
<circle cx="733.5" cy="326.4" r="1.8" fill="#94d290"/>
<circle cx="732.7" cy="329.0" r="1.9" fill="#7fc37c"/>
<circle cx="729.2" cy="329.7" r="1.7" fill="#7fc37c"/>
<circle cx="727.4" cy="327.6" r="1.8" fill="#7fc37c"/>
<circle cx="728.3" cy="324.6" r="2.1" fill="#94d290"/>
<circle cx="732.2" cy="324.3" r="2.0" fill="#94d290"/>
<circle cx="730.8" cy="328.8" r="1.1" fill="#6cba6c"/>
<circle cx="731.2" cy="326.8" r="4.7" fill="#88cb84"/>
<circle cx="734.5" cy="327.8" r="2.3" fill="#88cb84"/>
<circle cx="733.1" cy="329.6" r="2.0" fill="#88cb84"/>
<circle cx="730.3" cy="330.1" r="2.2" fill="#7fc37c"/>
<circle cx="727.9" cy="327.5" r="2.1" fill="#7fc37c"/>
<circle cx="730.1" cy="323.5" r="2.0" fill="#88cb84"/>
<circle cx="732.8" cy="323.7" r="2.2" fill="#a3d99e"/>
<circle cx="729.8" cy="325.8" r="1.1" fill="#6cba6c"/>
<circle cx="667.7" cy="317.8" r="4.2" fill="#94d290"/>
<circle cx="670.8" cy="317.9" r="1.7" fill="#94d290"/>
<circle cx="669.7" cy="320.2" r="1.6" fill="#94d290"/>
<circle cx="665.6" cy="320.1" r="1.9" fill="#7fc37c"/>
<circle cx="664.7" cy="318.4" r="1.6" fill="#a3d99e"/>
<circle cx="666.6" cy="315.0" r="2.0" fill="#a3d99e"/>
<circle cx="669.0" cy="315.0" r="1.6" fill="#a3d99e"/>
<circle cx="669.1" cy="317.3" r="1.3" fill="#6cba6c"/>
<circle cx="671.3" cy="319.0" r="3.7" fill="#9dd698"/>
<circle cx="673.9" cy="318.4" r="1.6" fill="#7fc37c"/>
<circle cx="673.1" cy="321.0" r="1.7" fill="#9dd698"/>
<circle cx="670.4" cy="321.5" r="1.7" fill="#7fc37c"/>
<circle cx="668.7" cy="319.8" r="1.7" fill="#a3d99e"/>
<circle cx="670.1" cy="316.6" r="1.4" fill="#a3d99e"/>
<circle cx="673.1" cy="317.1" r="1.8" fill="#9dd698"/>
<circle cx="669.3" cy="320.1" r="1.2" fill="#6cba6c"/>
<circle cx="683.7" cy="335.2" r="4.9" fill="#9dd698"/>
<circle cx="687.3" cy="335.4" r="2.4" fill="#7fc37c"/>
<circle cx="684.8" cy="338.6" r="2.4" fill="#7fc37c"/>
<circle cx="682.0" cy="338.3" r="1.9" fill="#a3d99e"/>
<circle cx="680.2" cy="336.0" r="2.0" fill="#9dd698"/>
<circle cx="681.4" cy="332.4" r="1.9" fill="#9dd698"/>
<circle cx="685.1" cy="331.9" r="2.2" fill="#9dd698"/>
<circle cx="680.4" cy="338.1" r="1.6" fill="#6cba6c"/>
<circle cx="690.8" cy="334.8" r="4.0" fill="#9dd698"/>
<circle cx="693.7" cy="334.9" r="1.8" fill="#9dd698"/>
<circle cx="692.5" cy="337.2" r="1.5" fill="#9dd698"/>
<circle cx="690.1" cy="337.6" r="1.6" fill="#7fc37c"/>
<circle cx="687.9" cy="334.7" r="1.9" fill="#9dd698"/>
<circle cx="688.8" cy="332.7" r="1.7" fill="#9dd698"/>
<circle cx="692.3" cy="332.4" r="1.6" fill="#9dd698"/>
<circle cx="688.8" cy="335.2" r="1.3" fill="#6cba6c"/>
<circle cx="690.7" cy="337.7" r="3.8" fill="#9dd698"/>
<circle cx="693.5" cy="338.0" r="1.7" fill="#a3d99e"/>
<circle cx="692.1" cy="340.1" r="1.6" fill="#9dd698"/>
<circle cx="689.0" cy="339.8" r="1.6" fill="#9dd698"/>
<circle cx="688.0" cy="337.1" r="1.8" fill="#a3d99e"/>
<circle cx="689.8" cy="335.0" r="1.8" fill="#7fc37c"/>
<circle cx="692.6" cy="335.6" r="1.5" fill="#a3d99e"/>
<circle cx="688.8" cy="338.6" r="1.1" fill="#6cba6c"/>
<circle cx="688.1" cy="329.9" r="4.9" fill="#8fcf8a"/>
<circle cx="691.7" cy="330.0" r="1.9" fill="#7fc37c"/>
<circle cx="690.4" cy="332.7" r="2.2" fill="#8fcf8a"/>
<circle cx="687.0" cy="333.3" r="2.4" fill="#7fc37c"/>
<circle cx="684.5" cy="329.6" r="2.3" fill="#8fcf8a"/>
<circle cx="685.5" cy="327.4" r="2.2" fill="#7fc37c"/>
<circle cx="690.6" cy="327.4" r="2.2" fill="#a3d99e"/>
<circle cx="688.4" cy="332.9" r="1.5" fill="#6cba6c"/>
<circle cx="704.6" cy="317.1" r="4.0" fill="#8fcf8a"/>
<circle cx="707.4" cy="316.7" r="1.6" fill="#a3d99e"/>
<circle cx="706.5" cy="319.3" r="1.5" fill="#a3d99e"/>
<circle cx="702.6" cy="319.2" r="1.5" fill="#a3d99e"/>
<circle cx="701.7" cy="317.0" r="1.6" fill="#8fcf8a"/>
<circle cx="703.1" cy="314.6" r="1.9" fill="#7fc37c"/>
<circle cx="706.1" cy="314.7" r="1.6" fill="#a3d99e"/>
<circle cx="702.3" cy="317.4" r="1.3" fill="#6cba6c"/>
<circle cx="704.6" cy="319.9" r="4.5" fill="#94d290"/>
<circle cx="707.9" cy="320.0" r="1.9" fill="#a3d99e"/>
<circle cx="706.6" cy="322.5" r="1.9" fill="#7fc37c"/>
<circle cx="703.8" cy="323.1" r="1.9" fill="#94d290"/>
<circle cx="701.3" cy="319.9" r="1.9" fill="#a3d99e"/>
<circle cx="702.8" cy="317.2" r="2.2" fill="#94d290"/>
<circle cx="706.8" cy="317.5" r="1.8" fill="#a3d99e"/>
<circle cx="703.5" cy="318.4" r="1.5" fill="#6cba6c"/>
<circle cx="720.0" cy="304.0" r="3.9" fill="#8fcf8a"/>
<circle cx="722.9" cy="304.1" r="1.6" fill="#a3d99e"/>
<circle cx="722.1" cy="306.0" r="1.6" fill="#7fc37c"/>
<circle cx="718.8" cy="306.5" r="1.8" fill="#a3d99e"/>
<circle cx="717.2" cy="304.4" r="1.9" fill="#a3d99e"/>
<circle cx="719.3" cy="301.2" r="1.7" fill="#a3d99e"/>
<circle cx="721.2" cy="301.4" r="1.8" fill="#a3d99e"/>
<circle cx="720.7" cy="302.7" r="1.3" fill="#6cba6c"/>
<circle cx="737.5" cy="334.9" r="3.7" fill="#9dd698"/>
<circle cx="740.2" cy="334.5" r="1.7" fill="#a3d99e"/>
<circle cx="738.3" cy="337.5" r="1.5" fill="#9dd698"/>
<circle cx="736.9" cy="337.5" r="1.7" fill="#a3d99e"/>
<circle cx="734.9" cy="335.5" r="1.6" fill="#a3d99e"/>
<circle cx="735.7" cy="332.8" r="1.8" fill="#7fc37c"/>
<circle cx="739.4" cy="332.9" r="1.7" fill="#7fc37c"/>
<circle cx="739.4" cy="335.9" r="1.0" fill="#6cba6c"/>
<circle cx="726.5" cy="321.2" r="4.1" fill="#9dd698"/>
<circle cx="729.5" cy="321.4" r="1.6" fill="#a3d99e"/>
<circle cx="727.5" cy="324.0" r="1.8" fill="#7fc37c"/>
<circle cx="725.4" cy="323.9" r="1.8" fill="#9dd698"/>
<circle cx="723.5" cy="321.3" r="1.7" fill="#9dd698"/>
<circle cx="724.4" cy="319.0" r="2.0" fill="#7fc37c"/>
<circle cx="728.7" cy="319.1" r="1.8" fill="#9dd698"/>
<circle cx="729.2" cy="319.5" r="1.2" fill="#6cba6c"/>
<circle cx="719.9" cy="305.6" r="5.0" fill="#9dd698"/>
<circle cx="723.5" cy="305.2" r="2.2" fill="#7fc37c"/>
<circle cx="721.6" cy="308.8" r="2.5" fill="#a3d99e"/>
<circle cx="717.5" cy="308.4" r="2.3" fill="#7fc37c"/>
<circle cx="716.3" cy="305.9" r="2.1" fill="#a3d99e"/>
<circle cx="718.4" cy="302.3" r="2.1" fill="#9dd698"/>
<circle cx="722.0" cy="302.7" r="2.2" fill="#9dd698"/>
<circle cx="719.3" cy="305.6" r="1.5" fill="#6cba6c"/>
<circle cx="722.8" cy="310.2" r="5.0" fill="#9dd698"/>
<circle cx="726.4" cy="310.2" r="2.1" fill="#a3d99e"/>
<circle cx="723.8" cy="313.7" r="2.2" fill="#a3d99e"/>
<circle cx="720.9" cy="313.3" r="2.4" fill="#9dd698"/>
<circle cx="719.2" cy="310.5" r="2.1" fill="#9dd698"/>
<circle cx="721.6" cy="306.8" r="2.2" fill="#9dd698"/>
<circle cx="724.9" cy="307.2" r="2.1" fill="#7fc37c"/>
<circle cx="725.0" cy="313.7" r="1.7" fill="#6cba6c"/>
<circle cx="722.4" cy="313.2" r="4.2" fill="#94d290"/>
<circle cx="725.5" cy="313.2" r="1.7" fill="#94d290"/>
<circle cx="724.6" cy="315.4" r="1.9" fill="#94d290"/>
<circle cx="721.1" cy="316.0" r="2.1" fill="#a3d99e"/>
<circle cx="719.3" cy="312.8" r="1.9" fill="#94d290"/>
<circle cx="721.3" cy="310.3" r="1.7" fill="#a3d99e"/>
<circle cx="724.0" cy="310.6" r="2.0" fill="#7fc37c"/>
<circle cx="724.4" cy="313.7" r="1.3" fill="#6cba6c"/>
<circle cx="729.6" cy="322.1" r="3.9" fill="#88cb84"/>
<circle cx="732.4" cy="322.7" r="1.9" fill="#a3d99e"/>
<circle cx="730.3" cy="324.9" r="1.7" fill="#7fc37c"/>
<circle cx="728.1" cy="324.5" r="1.5" fill="#a3d99e"/>
<circle cx="726.8" cy="321.7" r="1.5" fill="#88cb84"/>
<circle cx="727.6" cy="320.1" r="1.9" fill="#7fc37c"/>
<circle cx="731.5" cy="320.0" r="1.7" fill="#88cb84"/>
<circle cx="730.4" cy="323.1" r="1.2" fill="#6cba6c"/>
<circle cx="723.9" cy="312.6" r="3.8" fill="#8fcf8a"/>
<circle cx="726.7" cy="312.2" r="1.5" fill="#a3d99e"/>
<circle cx="725.9" cy="314.5" r="1.5" fill="#a3d99e"/>
<circle cx="722.7" cy="315.1" r="1.5" fill="#7fc37c"/>
<circle cx="721.2" cy="312.4" r="1.9" fill="#7fc37c"/>
<circle cx="722.0" cy="310.6" r="1.5" fill="#8fcf8a"/>
<circle cx="724.6" cy="309.9" r="1.8" fill="#8fcf8a"/>
<circle cx="723.0" cy="314.7" r="1.3" fill="#6cba6c"/>
<circle cx="731.9" cy="335.9" r="4.0" fill="#9dd698"/>
<circle cx="734.7" cy="336.8" r="1.6" fill="#a3d99e"/>
<circle cx="733.5" cy="338.4" r="1.9" fill="#9dd698"/>
<circle cx="730.5" cy="338.5" r="1.7" fill="#a3d99e"/>
<circle cx="728.9" cy="335.9" r="1.9" fill="#9dd698"/>
<circle cx="729.8" cy="333.8" r="1.6" fill="#7fc37c"/>
<circle cx="732.8" cy="333.1" r="2.0" fill="#7fc37c"/>
<circle cx="731.3" cy="335.1" r="1.1" fill="#6cba6c"/>
<circle cx="726.4" cy="325.2" r="4.9" fill="#8fcf8a"/>
<circle cx="730.0" cy="325.1" r="2.4" fill="#a3d99e"/>
<circle cx="728.6" cy="328.0" r="2.0" fill="#7fc37c"/>
<circle cx="724.9" cy="328.5" r="2.1" fill="#7fc37c"/>
<circle cx="722.8" cy="324.9" r="2.0" fill="#8fcf8a"/>
<circle cx="724.1" cy="322.4" r="1.9" fill="#8fcf8a"/>
<circle cx="727.7" cy="321.9" r="2.3" fill="#8fcf8a"/>
<circle cx="726.8" cy="325.0" r="1.6" fill="#6cba6c"/>
<circle cx="726.8" cy="310.6" r="3.9" fill="#9dd698"/>
<circle cx="729.7" cy="310.4" r="1.9" fill="#9dd698"/>
<circle cx="728.5" cy="312.9" r="1.7" fill="#9dd698"/>
<circle cx="725.8" cy="313.3" r="1.7" fill="#9dd698"/>
<circle cx="724.0" cy="309.9" r="1.9" fill="#a3d99e"/>
<circle cx="726.0" cy="307.9" r="1.8" fill="#7fc37c"/>
<circle cx="728.3" cy="308.2" r="1.7" fill="#a3d99e"/>
<circle cx="725.2" cy="312.7" r="1.0" fill="#6cba6c"/>
<circle cx="730.6" cy="312.6" r="4.4" fill="#9dd698"/>
<circle cx="733.6" cy="311.7" r="2.0" fill="#9dd698"/>
<circle cx="732.5" cy="315.2" r="1.8" fill="#9dd698"/>
<circle cx="728.7" cy="315.2" r="2.0" fill="#9dd698"/>
<circle cx="727.4" cy="313.0" r="2.0" fill="#9dd698"/>
<circle cx="728.3" cy="310.4" r="2.1" fill="#a3d99e"/>
<circle cx="732.6" cy="310.2" r="1.7" fill="#a3d99e"/>
<circle cx="729.4" cy="310.9" r="1.1" fill="#6cba6c"/>
<circle cx="725.2" cy="317.1" r="4.7" fill="#9dd698"/>
<circle cx="728.6" cy="317.7" r="2.2" fill="#9dd698"/>
<circle cx="726.1" cy="320.4" r="1.9" fill="#7fc37c"/>
<circle cx="723.2" cy="319.9" r="2.1" fill="#7fc37c"/>
<circle cx="721.9" cy="316.3" r="1.8" fill="#a3d99e"/>
<circle cx="723.9" cy="314.0" r="1.9" fill="#7fc37c"/>
<circle cx="726.7" cy="314.0" r="2.1" fill="#9dd698"/>
<circle cx="723.8" cy="315.6" r="1.4" fill="#6cba6c"/>
<circle cx="753.3" cy="331.0" r="3.9" fill="#94d290"/>
<circle cx="756.1" cy="330.8" r="1.8" fill="#94d290"/>
<circle cx="754.9" cy="333.3" r="1.5" fill="#7fc37c"/>
<circle cx="751.7" cy="333.3" r="1.9" fill="#a3d99e"/>
<circle cx="750.5" cy="330.4" r="1.7" fill="#a3d99e"/>
<circle cx="751.9" cy="328.5" r="1.9" fill="#a3d99e"/>
<circle cx="755.0" cy="328.7" r="1.6" fill="#94d290"/>
<circle cx="751.2" cy="332.4" r="1.2" fill="#6cba6c"/>
<circle cx="758.2" cy="335.6" r="4.9" fill="#8fcf8a"/>
<circle cx="761.7" cy="336.6" r="2.3" fill="#8fcf8a"/>
<circle cx="759.5" cy="339.0" r="2.0" fill="#7fc37c"/>
<circle cx="756.0" cy="338.4" r="1.9" fill="#a3d99e"/>
<circle cx="754.7" cy="335.1" r="2.4" fill="#a3d99e"/>
<circle cx="757.1" cy="332.2" r="2.0" fill="#8fcf8a"/>
<circle cx="759.7" cy="332.3" r="2.4" fill="#7fc37c"/>
<circle cx="761.2" cy="337.0" r="1.6" fill="#6cba6c"/>
<circle cx="751.7" cy="332.3" r="4.8" fill="#8fcf8a"/>
<circle cx="755.2" cy="332.7" r="1.9" fill="#a3d99e"/>
<circle cx="753.5" cy="335.4" r="2.4" fill="#8fcf8a"/>
<circle cx="750.0" cy="335.4" r="1.9" fill="#a3d99e"/>
<circle cx="748.2" cy="331.6" r="2.1" fill="#8fcf8a"/>
<circle cx="750.0" cy="329.2" r="2.4" fill="#a3d99e"/>
<circle cx="753.0" cy="329.0" r="2.0" fill="#8fcf8a"/>
<circle cx="749.4" cy="331.3" r="1.2" fill="#6cba6c"/>
<circle cx="738.5" cy="338.3" r="4.5" fill="#9dd698"/>
<circle cx="741.8" cy="338.6" r="1.8" fill="#9dd698"/>
<circle cx="740.9" cy="340.5" r="2.1" fill="#9dd698"/>
<circle cx="736.1" cy="340.6" r="1.9" fill="#7fc37c"/>
<circle cx="735.2" cy="339.0" r="2.1" fill="#a3d99e"/>
<circle cx="736.9" cy="335.3" r="1.9" fill="#9dd698"/>
<circle cx="740.2" cy="335.4" r="2.1" fill="#9dd698"/>
<circle cx="739.6" cy="336.0" r="1.6" fill="#6cba6c"/>
<circle cx="745.8" cy="326.2" r="4.9" fill="#88cb84"/>
<circle cx="749.2" cy="325.1" r="2.1" fill="#88cb84"/>
<circle cx="748.3" cy="328.7" r="2.0" fill="#88cb84"/>
<circle cx="744.8" cy="329.6" r="2.0" fill="#88cb84"/>
<circle cx="742.3" cy="326.9" r="2.1" fill="#a3d99e"/>
<circle cx="743.8" cy="323.2" r="1.9" fill="#88cb84"/>
<circle cx="746.7" cy="322.7" r="2.1" fill="#7fc37c"/>
<circle cx="743.0" cy="327.6" r="1.7" fill="#6cba6c"/>
<circle cx="737.6" cy="333.2" r="4.4" fill="#9dd698"/>
<circle cx="740.9" cy="333.2" r="2.1" fill="#7fc37c"/>
<circle cx="740.0" cy="335.4" r="2.1" fill="#a3d99e"/>
<circle cx="736.4" cy="336.2" r="2.0" fill="#a3d99e"/>
<circle cx="734.4" cy="332.9" r="1.8" fill="#9dd698"/>
<circle cx="735.4" cy="330.9" r="2.1" fill="#9dd698"/>
<circle cx="739.7" cy="330.7" r="2.1" fill="#7fc37c"/>
<circle cx="736.8" cy="336.1" r="1.3" fill="#6cba6c"/>
<circle cx="753.1" cy="323.6" r="4.9" fill="#88cb84"/>
<circle cx="756.7" cy="324.1" r="2.0" fill="#88cb84"/>
<circle cx="754.6" cy="326.9" r="2.1" fill="#88cb84"/>
<circle cx="751.6" cy="326.9" r="2.2" fill="#7fc37c"/>
<circle cx="749.6" cy="322.9" r="2.0" fill="#88cb84"/>
<circle cx="750.5" cy="321.1" r="2.2" fill="#a3d99e"/>
<circle cx="755.6" cy="321.0" r="2.4" fill="#7fc37c"/>
<circle cx="755.9" cy="326.7" r="1.4" fill="#6cba6c"/>
<circle cx="738.9" cy="328.3" r="4.3" fill="#8fcf8a"/>
<circle cx="742.0" cy="327.6" r="1.7" fill="#8fcf8a"/>
<circle cx="740.6" cy="331.0" r="2.1" fill="#8fcf8a"/>
<circle cx="736.6" cy="330.5" r="2.1" fill="#7fc37c"/>
<circle cx="735.8" cy="328.9" r="2.0" fill="#8fcf8a"/>
<circle cx="736.6" cy="326.1" r="1.9" fill="#a3d99e"/>
<circle cx="740.3" cy="325.5" r="1.8" fill="#a3d99e"/>
<circle cx="736.2" cy="329.6" r="1.5" fill="#6cba6c"/>
<circle cx="734.3" cy="345.8" r="3.7" fill="#94d290"/>
<circle cx="736.9" cy="346.4" r="1.5" fill="#7fc37c"/>
<circle cx="736.2" cy="347.6" r="1.7" fill="#a3d99e"/>
<circle cx="733.2" cy="348.2" r="1.5" fill="#94d290"/>
<circle cx="731.6" cy="345.7" r="1.6" fill="#7fc37c"/>
<circle cx="733.6" cy="343.2" r="1.8" fill="#94d290"/>
<circle cx="736.2" cy="343.9" r="1.8" fill="#a3d99e"/>
<circle cx="732.1" cy="347.4" r="1.2" fill="#6cba6c"/>
<circle cx="752.7" cy="335.2" r="4.1" fill="#9dd698"/>
<circle cx="755.6" cy="336.0" r="1.8" fill="#a3d99e"/>
<circle cx="754.7" cy="337.4" r="2.0" fill="#a3d99e"/>
<circle cx="750.7" cy="337.4" r="1.5" fill="#9dd698"/>
<circle cx="749.8" cy="335.7" r="1.9" fill="#a3d99e"/>
<circle cx="750.6" cy="333.1" r="1.9" fill="#7fc37c"/>
<circle cx="754.3" cy="332.7" r="2.0" fill="#7fc37c"/>
<circle cx="752.9" cy="335.6" r="1.1" fill="#6cba6c"/>
<circle cx="739.2" cy="344.0" r="3.7" fill="#8fcf8a"/>
<circle cx="741.9" cy="343.5" r="1.8" fill="#a3d99e"/>
<circle cx="741.1" cy="345.9" r="1.6" fill="#7fc37c"/>
<circle cx="737.6" cy="346.1" r="1.5" fill="#7fc37c"/>
<circle cx="736.5" cy="344.4" r="1.7" fill="#8fcf8a"/>
<circle cx="738.2" cy="341.4" r="1.8" fill="#a3d99e"/>
<circle cx="739.9" cy="341.3" r="1.6" fill="#8fcf8a"/>
<circle cx="740.8" cy="342.0" r="1.1" fill="#6cba6c"/>
<circle cx="757.6" cy="345.1" r="4.3" fill="#8fcf8a"/>
<circle cx="760.8" cy="345.0" r="2.0" fill="#a3d99e"/>
<circle cx="759.7" cy="347.5" r="2.1" fill="#a3d99e"/>
<circle cx="756.0" cy="347.8" r="1.7" fill="#7fc37c"/>
<circle cx="754.5" cy="344.6" r="1.7" fill="#8fcf8a"/>
<circle cx="755.3" cy="342.9" r="1.7" fill="#a3d99e"/>
<circle cx="759.3" cy="342.4" r="1.7" fill="#7fc37c"/>
<circle cx="755.3" cy="342.8" r="1.5" fill="#6cba6c"/>
<circle cx="762.2" cy="325.5" r="3.7" fill="#8fcf8a"/>
<circle cx="764.8" cy="326.1" r="1.8" fill="#8fcf8a"/>
<circle cx="763.8" cy="327.7" r="1.8" fill="#a3d99e"/>
<circle cx="760.6" cy="327.7" r="1.8" fill="#8fcf8a"/>
<circle cx="759.6" cy="325.9" r="1.6" fill="#a3d99e"/>
<circle cx="761.5" cy="322.9" r="1.7" fill="#8fcf8a"/>
<circle cx="764.0" cy="323.4" r="1.5" fill="#7fc37c"/>
<circle cx="762.5" cy="327.1" r="0.9" fill="#6cba6c"/>
<circle cx="763.1" cy="352.4" r="5.0" fill="#94d290"/>
<circle cx="766.7" cy="352.8" r="1.9" fill="#a3d99e"/>
<circle cx="765.0" cy="355.5" r="2.3" fill="#7fc37c"/>
<circle cx="762.1" cy="355.9" r="2.3" fill="#94d290"/>
<circle cx="759.6" cy="353.1" r="2.4" fill="#a3d99e"/>
<circle cx="761.6" cy="349.1" r="2.4" fill="#a3d99e"/>
<circle cx="765.6" cy="349.7" r="2.2" fill="#a3d99e"/>
<circle cx="765.0" cy="350.8" r="1.4" fill="#6cba6c"/>
<circle cx="769.9" cy="356.3" r="3.6" fill="#9dd698"/>
<circle cx="772.5" cy="356.8" r="1.7" fill="#9dd698"/>
<circle cx="771.8" cy="358.1" r="1.6" fill="#a3d99e"/>
<circle cx="768.4" cy="358.4" r="1.5" fill="#7fc37c"/>
<circle cx="767.4" cy="355.5" r="1.7" fill="#7fc37c"/>
<circle cx="768.5" cy="354.1" r="1.7" fill="#a3d99e"/>
<circle cx="771.3" cy="354.0" r="1.5" fill="#a3d99e"/>
<circle cx="768.5" cy="358.3" r="1.1" fill="#6cba6c"/>
<circle cx="753.4" cy="353.9" r="3.6" fill="#9dd698"/>
<circle cx="756.0" cy="353.6" r="1.6" fill="#7fc37c"/>
<circle cx="755.0" cy="356.0" r="1.5" fill="#7fc37c"/>
<circle cx="752.3" cy="356.3" r="1.4" fill="#7fc37c"/>
<circle cx="750.8" cy="353.3" r="1.6" fill="#a3d99e"/>
<circle cx="751.6" cy="351.9" r="1.7" fill="#7fc37c"/>
<circle cx="754.6" cy="351.5" r="1.4" fill="#7fc37c"/>
<circle cx="752.7" cy="354.2" r="1.1" fill="#6cba6c"/>
<circle cx="763.9" cy="364.3" r="3.8" fill="#8fcf8a"/>
<circle cx="766.6" cy="364.9" r="1.8" fill="#a3d99e"/>
<circle cx="765.2" cy="366.7" r="1.5" fill="#7fc37c"/>
<circle cx="762.2" cy="366.4" r="1.5" fill="#8fcf8a"/>
<circle cx="761.2" cy="364.0" r="1.6" fill="#7fc37c"/>
<circle cx="762.9" cy="361.7" r="1.7" fill="#a3d99e"/>
<circle cx="764.9" cy="361.7" r="1.8" fill="#a3d99e"/>
<circle cx="763.4" cy="361.9" r="1.0" fill="#6cba6c"/>
<circle cx="769.4" cy="356.2" r="4.1" fill="#88cb84"/>
<circle cx="772.3" cy="356.9" r="1.9" fill="#7fc37c"/>
<circle cx="771.4" cy="358.4" r="1.6" fill="#a3d99e"/>
<circle cx="768.0" cy="358.8" r="1.7" fill="#a3d99e"/>
<circle cx="766.5" cy="355.7" r="2.0" fill="#a3d99e"/>
<circle cx="767.3" cy="354.1" r="1.7" fill="#7fc37c"/>
<circle cx="770.5" cy="353.4" r="1.8" fill="#a3d99e"/>
<circle cx="771.9" cy="355.2" r="1.4" fill="#6cba6c"/>
<circle cx="752.2" cy="350.8" r="4.5" fill="#88cb84"/>
<circle cx="755.3" cy="351.8" r="1.9" fill="#a3d99e"/>
<circle cx="753.9" cy="353.6" r="2.1" fill="#88cb84"/>
<circle cx="750.0" cy="353.3" r="1.8" fill="#88cb84"/>
<circle cx="748.9" cy="351.3" r="1.8" fill="#88cb84"/>
<circle cx="751.0" cy="347.8" r="2.0" fill="#88cb84"/>
<circle cx="754.1" cy="348.2" r="1.8" fill="#7fc37c"/>
<circle cx="751.8" cy="353.3" r="1.2" fill="#6cba6c"/>
<circle cx="752.4" cy="351.9" r="4.3" fill="#8fcf8a"/>
<circle cx="755.5" cy="352.8" r="1.9" fill="#8fcf8a"/>
<circle cx="754.7" cy="354.1" r="2.0" fill="#a3d99e"/>
<circle cx="751.1" cy="354.8" r="1.7" fill="#8fcf8a"/>
<circle cx="749.3" cy="352.3" r="2.0" fill="#8fcf8a"/>
<circle cx="751.1" cy="349.0" r="2.1" fill="#8fcf8a"/>
<circle cx="753.7" cy="349.0" r="2.1" fill="#8fcf8a"/>
<circle cx="753.4" cy="351.3" r="1.4" fill="#6cba6c"/>
<circle cx="751.5" cy="354.9" r="4.1" fill="#8fcf8a"/>
<circle cx="754.4" cy="354.2" r="1.8" fill="#7fc37c"/>
<circle cx="752.2" cy="357.8" r="1.7" fill="#7fc37c"/>
<circle cx="749.4" cy="357.1" r="1.6" fill="#7fc37c"/>
<circle cx="748.5" cy="354.8" r="2.0" fill="#8fcf8a"/>
<circle cx="749.9" cy="352.4" r="1.9" fill="#7fc37c"/>
<circle cx="752.4" cy="352.1" r="1.5" fill="#8fcf8a"/>
<circle cx="749.4" cy="356.5" r="1.0" fill="#6cba6c"/>
<circle cx="781.1" cy="342.7" r="4.8" fill="#94d290"/>
<circle cx="784.6" cy="343.0" r="2.2" fill="#7fc37c"/>
<circle cx="783.3" cy="345.4" r="2.2" fill="#a3d99e"/>
<circle cx="779.3" cy="345.8" r="1.8" fill="#a3d99e"/>
<circle cx="777.6" cy="343.1" r="2.3" fill="#a3d99e"/>
<circle cx="779.2" cy="339.7" r="2.0" fill="#a3d99e"/>
<circle cx="782.9" cy="339.7" r="2.0" fill="#7fc37c"/>
<circle cx="777.7" cy="342.5" r="1.5" fill="#6cba6c"/>
<circle cx="780.5" cy="347.6" r="4.8" fill="#94d290"/>
<circle cx="783.9" cy="347.4" r="2.3" fill="#94d290"/>
<circle cx="782.0" cy="350.7" r="1.9" fill="#a3d99e"/>
<circle cx="778.7" cy="350.6" r="2.1" fill="#94d290"/>
<circle cx="777.0" cy="348.1" r="2.1" fill="#a3d99e"/>
<circle cx="778.1" cy="345.0" r="1.9" fill="#a3d99e"/>
<circle cx="782.8" cy="345.0" r="2.2" fill="#a3d99e"/>
<circle cx="777.3" cy="349.4" r="1.3" fill="#6cba6c"/>
<circle cx="781.8" cy="343.7" r="5.1" fill="#88cb84"/>
<circle cx="785.4" cy="344.6" r="2.1" fill="#88cb84"/>
<circle cx="784.0" cy="346.7" r="2.4" fill="#88cb84"/>
<circle cx="779.6" cy="346.7" r="1.9" fill="#a3d99e"/>
<circle cx="778.2" cy="342.8" r="2.3" fill="#7fc37c"/>
<circle cx="779.2" cy="341.1" r="2.2" fill="#7fc37c"/>
<circle cx="784.4" cy="341.0" r="2.1" fill="#a3d99e"/>
<circle cx="782.7" cy="341.7" r="1.3" fill="#6cba6c"/>
<circle cx="781.1" cy="339.1" r="4.0" fill="#94d290"/>
<circle cx="783.9" cy="338.8" r="1.7" fill="#7fc37c"/>
<circle cx="782.8" cy="341.4" r="2.0" fill="#94d290"/>
<circle cx="779.0" cy="341.1" r="1.9" fill="#7fc37c"/>
<circle cx="778.2" cy="338.4" r="1.9" fill="#7fc37c"/>
<circle cx="780.3" cy="336.3" r="1.6" fill="#7fc37c"/>
<circle cx="782.2" cy="336.4" r="1.6" fill="#7fc37c"/>
<circle cx="783.2" cy="337.7" r="1.1" fill="#6cba6c"/>
<circle cx="789.6" cy="364.8" r="4.5" fill="#8fcf8a"/>
<circle cx="792.8" cy="365.5" r="1.8" fill="#a3d99e"/>
<circle cx="791.4" cy="367.5" r="2.1" fill="#7fc37c"/>
<circle cx="788.5" cy="367.9" r="2.2" fill="#7fc37c"/>
<circle cx="786.3" cy="364.4" r="2.1" fill="#8fcf8a"/>
<circle cx="788.8" cy="361.6" r="1.7" fill="#7fc37c"/>
<circle cx="790.6" cy="361.7" r="2.1" fill="#8fcf8a"/>
<circle cx="791.1" cy="364.6" r="1.3" fill="#6cba6c"/>
<circle cx="786.1" cy="371.5" r="4.2" fill="#9dd698"/>
<circle cx="789.0" cy="372.2" r="2.1" fill="#9dd698"/>
<circle cx="787.5" cy="374.2" r="1.7" fill="#a3d99e"/>
<circle cx="784.2" cy="374.0" r="1.6" fill="#a3d99e"/>
<circle cx="783.0" cy="371.3" r="1.9" fill="#a3d99e"/>
<circle cx="783.9" cy="369.3" r="1.6" fill="#7fc37c"/>
<circle cx="786.8" cy="368.5" r="1.6" fill="#7fc37c"/>
<circle cx="788.8" cy="371.6" r="1.0" fill="#6cba6c"/>
<circle cx="784.9" cy="371.1" r="3.9" fill="#8fcf8a"/>
<circle cx="787.7" cy="371.1" r="1.9" fill="#8fcf8a"/>
<circle cx="786.5" cy="373.4" r="1.6" fill="#8fcf8a"/>
<circle cx="783.1" cy="373.3" r="1.6" fill="#8fcf8a"/>
<circle cx="782.1" cy="371.9" r="1.6" fill="#8fcf8a"/>
<circle cx="783.0" cy="368.9" r="1.5" fill="#a3d99e"/>
<circle cx="786.9" cy="369.1" r="1.6" fill="#7fc37c"/>
<circle cx="785.9" cy="371.9" r="1.2" fill="#6cba6c"/>
<circle cx="786.6" cy="376.1" r="4.4" fill="#88cb84"/>
<circle cx="789.8" cy="375.9" r="1.8" fill="#7fc37c"/>
<circle cx="788.4" cy="378.8" r="1.7" fill="#7fc37c"/>
<circle cx="784.4" cy="378.5" r="2.1" fill="#a3d99e"/>
<circle cx="783.5" cy="377.1" r="2.0" fill="#7fc37c"/>
<circle cx="785.3" cy="373.2" r="2.0" fill="#88cb84"/>
<circle cx="788.7" cy="373.7" r="2.0" fill="#88cb84"/>
<circle cx="788.7" cy="377.9" r="1.5" fill="#6cba6c"/>
<circle cx="786.8" cy="366.2" r="3.6" fill="#9dd698"/>
<circle cx="789.5" cy="366.3" r="1.5" fill="#a3d99e"/>
<circle cx="788.8" cy="368.0" r="1.7" fill="#7fc37c"/>
<circle cx="785.5" cy="368.5" r="1.6" fill="#7fc37c"/>
<circle cx="784.2" cy="366.6" r="1.6" fill="#a3d99e"/>
<circle cx="786.1" cy="363.7" r="1.5" fill="#9dd698"/>
<circle cx="788.0" cy="363.8" r="1.6" fill="#a3d99e"/>
<circle cx="787.7" cy="367.9" r="0.9" fill="#6cba6c"/>
<circle cx="792.9" cy="353.7" r="4.8" fill="#88cb84"/>
<circle cx="796.4" cy="353.2" r="2.3" fill="#a3d99e"/>
<circle cx="795.0" cy="356.5" r="2.1" fill="#a3d99e"/>
<circle cx="791.7" cy="356.9" r="1.9" fill="#a3d99e"/>
<circle cx="789.5" cy="354.0" r="1.9" fill="#88cb84"/>
<circle cx="791.8" cy="350.4" r="1.9" fill="#88cb84"/>
<circle cx="794.0" cy="350.3" r="2.2" fill="#88cb84"/>
<circle cx="793.9" cy="355.9" r="1.6" fill="#6cba6c"/>
<circle cx="790.2" cy="350.9" r="4.9" fill="#9dd698"/>
<circle cx="793.7" cy="350.1" r="1.9" fill="#7fc37c"/>
<circle cx="792.2" cy="353.9" r="2.1" fill="#a3d99e"/>
<circle cx="787.9" cy="353.6" r="2.1" fill="#7fc37c"/>
<circle cx="786.7" cy="350.6" r="2.0" fill="#7fc37c"/>
<circle cx="789.4" cy="347.4" r="2.2" fill="#7fc37c"/>
<circle cx="792.2" cy="348.0" r="2.3" fill="#9dd698"/>
<circle cx="792.0" cy="348.5" r="1.5" fill="#6cba6c"/>
<circle cx="807.9" cy="366.0" r="4.1" fill="#88cb84"/>
<circle cx="810.9" cy="366.1" r="1.9" fill="#7fc37c"/>
<circle cx="810.1" cy="368.1" r="1.7" fill="#a3d99e"/>
<circle cx="806.8" cy="368.8" r="1.8" fill="#7fc37c"/>
<circle cx="804.9" cy="365.6" r="1.7" fill="#7fc37c"/>
<circle cx="806.0" cy="363.7" r="1.7" fill="#7fc37c"/>
<circle cx="808.7" cy="363.1" r="1.9" fill="#88cb84"/>
<circle cx="806.1" cy="365.6" r="1.4" fill="#6cba6c"/>
<circle cx="805.2" cy="363.4" r="4.5" fill="#9dd698"/>
<circle cx="808.5" cy="363.1" r="1.7" fill="#7fc37c"/>
<circle cx="806.0" cy="366.6" r="1.9" fill="#a3d99e"/>
<circle cx="803.1" cy="365.9" r="1.9" fill="#7fc37c"/>
<circle cx="802.0" cy="362.7" r="1.8" fill="#a3d99e"/>
<circle cx="803.1" cy="360.9" r="2.2" fill="#a3d99e"/>
<circle cx="807.0" cy="360.6" r="1.7" fill="#9dd698"/>
<circle cx="804.2" cy="360.6" r="1.5" fill="#6cba6c"/>
<circle cx="808.0" cy="369.9" r="4.2" fill="#8fcf8a"/>
<circle cx="810.9" cy="369.2" r="1.8" fill="#7fc37c"/>
<circle cx="809.2" cy="372.7" r="1.8" fill="#7fc37c"/>
<circle cx="807.0" cy="372.8" r="1.6" fill="#7fc37c"/>
<circle cx="804.9" cy="370.0" r="1.8" fill="#8fcf8a"/>
<circle cx="806.7" cy="367.2" r="1.9" fill="#7fc37c"/>
<circle cx="809.5" cy="367.4" r="2.0" fill="#7fc37c"/>
<circle cx="808.3" cy="371.5" r="1.4" fill="#6cba6c"/>
<circle cx="802.2" cy="363.3" r="3.8" fill="#8fcf8a"/>
<circle cx="804.9" cy="362.7" r="1.5" fill="#8fcf8a"/>
<circle cx="803.5" cy="365.7" r="1.4" fill="#a3d99e"/>
<circle cx="801.3" cy="365.9" r="1.6" fill="#8fcf8a"/>
<circle cx="799.5" cy="363.2" r="1.7" fill="#a3d99e"/>
<circle cx="800.4" cy="361.3" r="1.6" fill="#8fcf8a"/>
<circle cx="804.1" cy="361.3" r="1.5" fill="#7fc37c"/>
<circle cx="800.6" cy="365.9" r="1.0" fill="#6cba6c"/>
<circle cx="807.9" cy="363.9" r="4.4" fill="#9dd698"/>
<circle cx="811.0" cy="363.4" r="2.1" fill="#a3d99e"/>
<circle cx="809.6" cy="366.6" r="2.1" fill="#a3d99e"/>
<circle cx="807.1" cy="367.0" r="1.8" fill="#7fc37c"/>
<circle cx="804.7" cy="363.3" r="2.1" fill="#7fc37c"/>
<circle cx="805.9" cy="361.3" r="1.7" fill="#9dd698"/>
<circle cx="809.5" cy="361.2" r="1.8" fill="#7fc37c"/>
<circle cx="808.8" cy="365.2" r="1.1" fill="#6cba6c"/>
<circle cx="804.8" cy="369.4" r="5.0" fill="#8fcf8a"/>
<circle cx="808.5" cy="369.9" r="1.9" fill="#8fcf8a"/>
<circle cx="806.8" cy="372.4" r="2.2" fill="#7fc37c"/>
<circle cx="804.0" cy="372.9" r="2.0" fill="#7fc37c"/>
<circle cx="801.2" cy="369.9" r="2.3" fill="#a3d99e"/>
<circle cx="803.2" cy="366.1" r="2.1" fill="#a3d99e"/>
<circle cx="806.6" cy="366.2" r="2.4" fill="#8fcf8a"/>
<circle cx="802.6" cy="371.9" r="1.2" fill="#6cba6c"/>
<circle cx="807.9" cy="394.9" r="3.8" fill="#9dd698"/>
<circle cx="810.6" cy="394.4" r="1.8" fill="#a3d99e"/>
<circle cx="808.9" cy="397.4" r="1.5" fill="#9dd698"/>
<circle cx="806.3" cy="397.1" r="1.7" fill="#7fc37c"/>
<circle cx="805.2" cy="394.4" r="1.7" fill="#9dd698"/>
<circle cx="806.0" cy="392.8" r="1.8" fill="#9dd698"/>
<circle cx="809.3" cy="392.5" r="1.6" fill="#9dd698"/>
<circle cx="809.4" cy="397.3" r="1.1" fill="#6cba6c"/>
<circle cx="800.4" cy="395.3" r="4.6" fill="#9dd698"/>
<circle cx="803.7" cy="394.7" r="1.8" fill="#a3d99e"/>
<circle cx="802.7" cy="397.8" r="1.8" fill="#7fc37c"/>
<circle cx="799.1" cy="398.4" r="1.8" fill="#a3d99e"/>
<circle cx="797.1" cy="394.7" r="2.1" fill="#a3d99e"/>
<circle cx="798.2" cy="392.9" r="2.2" fill="#7fc37c"/>
<circle cx="802.2" cy="392.5" r="1.8" fill="#a3d99e"/>
<circle cx="803.5" cy="394.6" r="1.1" fill="#6cba6c"/>
<circle cx="804.8" cy="388.7" r="4.2" fill="#8fcf8a"/>
<circle cx="807.8" cy="388.1" r="1.6" fill="#8fcf8a"/>
<circle cx="806.4" cy="391.2" r="1.9" fill="#8fcf8a"/>
<circle cx="804.1" cy="391.6" r="1.7" fill="#a3d99e"/>
<circle cx="801.9" cy="387.9" r="2.0" fill="#a3d99e"/>
<circle cx="803.3" cy="386.0" r="1.7" fill="#7fc37c"/>
<circle cx="805.5" cy="385.7" r="1.9" fill="#8fcf8a"/>
<circle cx="803.0" cy="387.4" r="1.1" fill="#6cba6c"/>
<circle cx="806.0" cy="388.6" r="4.5" fill="#9dd698"/>
<circle cx="809.3" cy="388.2" r="2.1" fill="#9dd698"/>
<circle cx="807.5" cy="391.5" r="1.8" fill="#a3d99e"/>
<circle cx="804.3" cy="391.3" r="2.2" fill="#7fc37c"/>
<circle cx="802.8" cy="389.2" r="1.8" fill="#7fc37c"/>
<circle cx="803.7" cy="386.3" r="1.9" fill="#7fc37c"/>
<circle cx="807.6" cy="385.8" r="1.9" fill="#7fc37c"/>
<circle cx="804.0" cy="390.4" r="1.2" fill="#6cba6c"/>
<circle cx="768.7" cy="391.6" r="3.7" fill="#8fcf8a"/>
<circle cx="771.4" cy="392.1" r="1.6" fill="#7fc37c"/>
<circle cx="770.7" cy="393.5" r="1.4" fill="#a3d99e"/>
<circle cx="768.0" cy="394.2" r="1.7" fill="#8fcf8a"/>
<circle cx="766.1" cy="391.7" r="1.7" fill="#8fcf8a"/>
<circle cx="767.2" cy="389.4" r="1.7" fill="#8fcf8a"/>
<circle cx="769.9" cy="389.2" r="1.7" fill="#8fcf8a"/>
<circle cx="767.9" cy="393.4" r="1.2" fill="#6cba6c"/>
<circle cx="763.3" cy="392.0" r="4.3" fill="#94d290"/>
<circle cx="766.4" cy="391.3" r="1.9" fill="#a3d99e"/>
<circle cx="764.8" cy="394.8" r="1.8" fill="#94d290"/>
<circle cx="762.3" cy="395.0" r="1.9" fill="#a3d99e"/>
<circle cx="760.2" cy="392.5" r="2.1" fill="#7fc37c"/>
<circle cx="761.6" cy="389.4" r="1.7" fill="#94d290"/>
<circle cx="765.5" cy="389.7" r="2.0" fill="#a3d99e"/>
<circle cx="763.3" cy="394.4" r="1.0" fill="#6cba6c"/>
<circle cx="767.8" cy="398.7" r="5.0" fill="#94d290"/>
<circle cx="771.4" cy="399.1" r="2.0" fill="#94d290"/>
<circle cx="770.2" cy="401.4" r="2.0" fill="#94d290"/>
<circle cx="766.1" cy="402.0" r="2.3" fill="#94d290"/>
<circle cx="764.1" cy="399.2" r="2.4" fill="#94d290"/>
<circle cx="766.3" cy="395.4" r="2.0" fill="#94d290"/>
<circle cx="769.8" cy="395.6" r="2.3" fill="#a3d99e"/>
<circle cx="770.0" cy="401.0" r="1.2" fill="#6cba6c"/>
<circle cx="762.5" cy="393.1" r="4.1" fill="#94d290"/>
<circle cx="765.4" cy="393.7" r="1.7" fill="#7fc37c"/>
<circle cx="763.8" cy="395.8" r="1.6" fill="#7fc37c"/>
<circle cx="760.4" cy="395.2" r="1.7" fill="#7fc37c"/>
<circle cx="759.6" cy="393.9" r="1.9" fill="#94d290"/>
<circle cx="761.4" cy="390.4" r="1.9" fill="#94d290"/>
<circle cx="764.4" cy="390.8" r="1.9" fill="#94d290"/>
<circle cx="760.7" cy="391.5" r="1.1" fill="#6cba6c"/>
<circle cx="740.8" cy="374.0" r="5.1" fill="#9dd698"/>
<circle cx="744.3" cy="373.0" r="2.2" fill="#7fc37c"/>
<circle cx="741.8" cy="377.5" r="2.4" fill="#a3d99e"/>
<circle cx="739.8" cy="377.6" r="2.4" fill="#9dd698"/>
<circle cx="737.2" cy="373.2" r="2.4" fill="#9dd698"/>
<circle cx="739.2" cy="370.6" r="2.5" fill="#a3d99e"/>
<circle cx="741.9" cy="370.5" r="2.5" fill="#a3d99e"/>
<circle cx="742.7" cy="374.0" r="1.3" fill="#6cba6c"/>
<circle cx="724.9" cy="363.6" r="4.6" fill="#9dd698"/>
<circle cx="728.2" cy="364.2" r="2.2" fill="#a3d99e"/>
<circle cx="727.1" cy="366.1" r="2.0" fill="#a3d99e"/>
<circle cx="722.7" cy="366.2" r="2.2" fill="#7fc37c"/>
<circle cx="721.6" cy="363.1" r="2.1" fill="#a3d99e"/>
<circle cx="724.0" cy="360.3" r="1.8" fill="#7fc37c"/>
<circle cx="727.0" cy="360.9" r="2.2" fill="#9dd698"/>
<circle cx="722.9" cy="363.3" r="1.2" fill="#6cba6c"/>
<circle cx="739.2" cy="372.8" r="4.3" fill="#8fcf8a"/>
<circle cx="742.4" cy="372.6" r="2.0" fill="#a3d99e"/>
<circle cx="740.5" cy="375.6" r="2.1" fill="#7fc37c"/>
<circle cx="737.8" cy="375.6" r="1.7" fill="#a3d99e"/>
<circle cx="736.1" cy="372.4" r="2.0" fill="#a3d99e"/>
<circle cx="737.8" cy="369.9" r="2.1" fill="#7fc37c"/>
<circle cx="739.9" cy="369.7" r="1.9" fill="#8fcf8a"/>
<circle cx="742.0" cy="375.1" r="1.3" fill="#6cba6c"/>
<circle cx="724.7" cy="364.7" r="4.2" fill="#94d290"/>
<circle cx="727.6" cy="363.9" r="1.8" fill="#7fc37c"/>
<circle cx="726.0" cy="367.4" r="1.7" fill="#94d290"/>
<circle cx="722.4" cy="366.7" r="1.7" fill="#7fc37c"/>
<circle cx="721.6" cy="364.8" r="1.8" fill="#94d290"/>
<circle cx="722.6" cy="362.4" r="1.9" fill="#94d290"/>
<circle cx="726.0" cy="361.9" r="2.0" fill="#7fc37c"/>
<circle cx="723.3" cy="367.4" r="1.2" fill="#6cba6c"/>
<circle cx="739.1" cy="371.7" r="3.9" fill="#9dd698"/>
<circle cx="741.9" cy="371.4" r="1.6" fill="#a3d99e"/>
<circle cx="740.0" cy="374.4" r="1.8" fill="#9dd698"/>
<circle cx="737.8" cy="374.3" r="1.5" fill="#9dd698"/>
<circle cx="736.3" cy="372.4" r="1.6" fill="#a3d99e"/>
<circle cx="738.1" cy="369.0" r="1.6" fill="#7fc37c"/>
<circle cx="740.8" cy="369.4" r="1.9" fill="#a3d99e"/>
<circle cx="741.1" cy="371.8" r="1.1" fill="#6cba6c"/>
<circle cx="738.5" cy="372.3" r="5.0" fill="#8fcf8a"/>
<circle cx="742.1" cy="372.3" r="2.1" fill="#7fc37c"/>
<circle cx="739.4" cy="375.8" r="2.1" fill="#a3d99e"/>
<circle cx="736.3" cy="375.2" r="2.3" fill="#a3d99e"/>
<circle cx="734.9" cy="371.6" r="1.9" fill="#a3d99e"/>
<circle cx="736.6" cy="369.1" r="2.1" fill="#8fcf8a"/>
<circle cx="739.4" cy="368.8" r="2.4" fill="#a3d99e"/>
<circle cx="735.8" cy="371.4" r="1.4" fill="#6cba6c"/>
<circle cx="721.2" cy="371.6" r="4.4" fill="#9dd698"/>
<circle cx="724.3" cy="370.7" r="1.8" fill="#9dd698"/>
<circle cx="723.5" cy="373.8" r="2.1" fill="#7fc37c"/>
<circle cx="720.2" cy="374.6" r="1.9" fill="#a3d99e"/>
<circle cx="718.0" cy="371.6" r="2.2" fill="#9dd698"/>
<circle cx="720.0" cy="368.6" r="2.0" fill="#7fc37c"/>
<circle cx="723.0" cy="369.0" r="1.8" fill="#a3d99e"/>
<circle cx="718.3" cy="371.9" r="1.2" fill="#6cba6c"/>
<circle cx="740.7" cy="372.2" r="3.7" fill="#9dd698"/>
<circle cx="743.3" cy="373.0" r="1.7" fill="#a3d99e"/>
<circle cx="741.5" cy="374.8" r="1.5" fill="#a3d99e"/>
<circle cx="739.4" cy="374.6" r="1.4" fill="#a3d99e"/>
<circle cx="738.0" cy="372.5" r="1.5" fill="#a3d99e"/>
<circle cx="739.8" cy="369.7" r="1.4" fill="#7fc37c"/>
<circle cx="742.4" cy="370.1" r="1.5" fill="#7fc37c"/>
<circle cx="742.8" cy="372.7" r="1.3" fill="#6cba6c"/>
<circle cx="802.4" cy="392.5" r="4.8" fill="#88cb84"/>
<circle cx="805.8" cy="392.1" r="2.3" fill="#88cb84"/>
<circle cx="803.9" cy="395.6" r="2.3" fill="#7fc37c"/>
<circle cx="801.4" cy="395.8" r="1.9" fill="#7fc37c"/>
<circle cx="798.9" cy="392.9" r="2.2" fill="#7fc37c"/>
<circle cx="800.2" cy="389.8" r="1.9" fill="#a3d99e"/>
<circle cx="804.0" cy="389.4" r="2.3" fill="#a3d99e"/>
<circle cx="800.1" cy="395.1" r="1.1" fill="#6cba6c"/>
<circle cx="804.2" cy="392.4" r="4.0" fill="#9dd698"/>
<circle cx="807.1" cy="392.8" r="1.6" fill="#7fc37c"/>
<circle cx="805.3" cy="395.1" r="1.7" fill="#7fc37c"/>
<circle cx="802.3" cy="394.5" r="1.6" fill="#7fc37c"/>
<circle cx="801.3" cy="391.9" r="1.5" fill="#a3d99e"/>
<circle cx="802.8" cy="389.8" r="1.7" fill="#7fc37c"/>
<circle cx="805.3" cy="389.7" r="1.6" fill="#9dd698"/>
<circle cx="806.3" cy="390.1" r="1.2" fill="#6cba6c"/>
<circle cx="807.2" cy="392.7" r="4.8" fill="#88cb84"/>
<circle cx="810.6" cy="392.0" r="1.9" fill="#a3d99e"/>
<circle cx="808.7" cy="395.8" r="2.2" fill="#7fc37c"/>
<circle cx="805.6" cy="395.8" r="2.4" fill="#a3d99e"/>
<circle cx="803.7" cy="391.9" r="2.0" fill="#7fc37c"/>
<circle cx="806.0" cy="389.3" r="2.0" fill="#88cb84"/>
<circle cx="809.3" cy="389.8" r="1.9" fill="#a3d99e"/>
<circle cx="807.3" cy="393.8" r="1.7" fill="#6cba6c"/>
<circle cx="801.9" cy="385.5" r="3.8" fill="#9dd698"/>
<circle cx="804.6" cy="384.8" r="1.4" fill="#a3d99e"/>
<circle cx="803.0" cy="388.0" r="1.7" fill="#7fc37c"/>
<circle cx="801.0" cy="388.1" r="1.7" fill="#a3d99e"/>
<circle cx="799.2" cy="385.0" r="1.8" fill="#9dd698"/>
<circle cx="800.1" cy="383.4" r="1.8" fill="#9dd698"/>
<circle cx="803.3" cy="383.1" r="1.8" fill="#9dd698"/>
<circle cx="803.2" cy="387.2" r="1.2" fill="#6cba6c"/>
<circle cx="821.7" cy="409.5" r="4.9" fill="#9dd698"/>
<circle cx="825.3" cy="409.7" r="2.0" fill="#9dd698"/>
<circle cx="823.0" cy="412.8" r="2.2" fill="#a3d99e"/>
<circle cx="820.4" cy="412.8" r="2.0" fill="#9dd698"/>
<circle cx="818.2" cy="409.9" r="2.1" fill="#a3d99e"/>
<circle cx="820.9" cy="406.0" r="2.3" fill="#7fc37c"/>
<circle cx="822.6" cy="406.0" r="2.1" fill="#9dd698"/>
<circle cx="824.1" cy="408.3" r="1.2" fill="#6cba6c"/>
<circle cx="821.6" cy="405.7" r="4.5" fill="#8fcf8a"/>
<circle cx="824.8" cy="406.7" r="2.0" fill="#a3d99e"/>
<circle cx="822.7" cy="408.8" r="1.7" fill="#7fc37c"/>
<circle cx="820.7" cy="408.9" r="1.8" fill="#a3d99e"/>
<circle cx="818.4" cy="404.9" r="2.2" fill="#a3d99e"/>
<circle cx="820.1" cy="402.8" r="1.8" fill="#8fcf8a"/>
<circle cx="822.9" cy="402.7" r="2.2" fill="#a3d99e"/>
<circle cx="821.8" cy="402.7" r="1.5" fill="#6cba6c"/>
<circle cx="826.6" cy="406.9" r="3.6" fill="#8fcf8a"/>
<circle cx="829.1" cy="407.7" r="1.5" fill="#8fcf8a"/>
<circle cx="827.8" cy="409.3" r="1.5" fill="#a3d99e"/>
<circle cx="824.7" cy="408.8" r="1.5" fill="#a3d99e"/>
<circle cx="824.0" cy="406.4" r="1.8" fill="#7fc37c"/>
<circle cx="825.9" cy="404.4" r="1.5" fill="#7fc37c"/>
<circle cx="827.3" cy="404.4" r="1.6" fill="#8fcf8a"/>
<circle cx="826.2" cy="409.3" r="1.2" fill="#6cba6c"/>
<circle cx="822.3" cy="408.8" r="4.5" fill="#8fcf8a"/>
<circle cx="825.6" cy="408.6" r="1.8" fill="#8fcf8a"/>
<circle cx="824.6" cy="411.1" r="2.2" fill="#8fcf8a"/>
<circle cx="820.8" cy="411.7" r="1.8" fill="#a3d99e"/>
<circle cx="819.0" cy="408.3" r="2.1" fill="#8fcf8a"/>
<circle cx="820.8" cy="405.9" r="2.1" fill="#7fc37c"/>
<circle cx="824.4" cy="406.2" r="2.2" fill="#a3d99e"/>
<circle cx="823.7" cy="410.2" r="1.1" fill="#6cba6c"/>
<circle cx="840.4" cy="428.0" r="3.9" fill="#88cb84"/>
<circle cx="843.2" cy="428.1" r="1.7" fill="#a3d99e"/>
<circle cx="841.6" cy="430.6" r="1.9" fill="#7fc37c"/>
<circle cx="839.6" cy="430.8" r="1.8" fill="#a3d99e"/>
<circle cx="837.6" cy="428.3" r="1.9" fill="#a3d99e"/>
<circle cx="838.9" cy="425.6" r="1.5" fill="#88cb84"/>
<circle cx="842.3" cy="426.0" r="1.6" fill="#7fc37c"/>
<circle cx="840.3" cy="425.8" r="1.1" fill="#6cba6c"/>
<circle cx="852.3" cy="430.8" r="4.1" fill="#8fcf8a"/>
<circle cx="855.3" cy="430.8" r="1.6" fill="#7fc37c"/>
<circle cx="854.2" cy="433.0" r="1.6" fill="#8fcf8a"/>
<circle cx="850.2" cy="432.9" r="1.6" fill="#7fc37c"/>
<circle cx="849.4" cy="430.0" r="2.0" fill="#7fc37c"/>
<circle cx="851.2" cy="428.0" r="1.9" fill="#8fcf8a"/>
<circle cx="854.2" cy="428.5" r="1.9" fill="#8fcf8a"/>
<circle cx="850.2" cy="428.5" r="1.3" fill="#6cba6c"/>
<circle cx="841.0" cy="426.5" r="4.4" fill="#8fcf8a"/>
<circle cx="844.2" cy="426.4" r="1.7" fill="#a3d99e"/>
<circle cx="842.5" cy="429.3" r="1.7" fill="#7fc37c"/>
<circle cx="839.6" cy="429.4" r="1.9" fill="#7fc37c"/>
<circle cx="837.8" cy="426.5" r="2.0" fill="#8fcf8a"/>
<circle cx="838.6" cy="424.3" r="1.8" fill="#7fc37c"/>
<circle cx="842.4" cy="423.6" r="1.7" fill="#a3d99e"/>
<circle cx="843.3" cy="429.3" r="1.3" fill="#6cba6c"/>
<circle cx="852.3" cy="423.4" r="4.4" fill="#9dd698"/>
<circle cx="855.5" cy="423.9" r="2.0" fill="#a3d99e"/>
<circle cx="854.6" cy="425.6" r="1.9" fill="#7fc37c"/>
<circle cx="850.5" cy="426.0" r="2.1" fill="#9dd698"/>
<circle cx="849.1" cy="423.0" r="1.9" fill="#7fc37c"/>
<circle cx="850.9" cy="420.5" r="1.7" fill="#7fc37c"/>
<circle cx="854.1" cy="420.7" r="1.7" fill="#9dd698"/>
<circle cx="854.2" cy="425.8" r="1.0" fill="#6cba6c"/>
<circle cx="850.1" cy="412.1" r="4.4" fill="#8fcf8a"/>
<circle cx="853.3" cy="411.6" r="2.1" fill="#8fcf8a"/>
<circle cx="851.2" cy="415.2" r="1.7" fill="#8fcf8a"/>
<circle cx="848.7" cy="415.0" r="2.2" fill="#8fcf8a"/>
<circle cx="846.9" cy="411.6" r="1.7" fill="#a3d99e"/>
<circle cx="848.7" cy="409.2" r="2.1" fill="#7fc37c"/>
<circle cx="850.9" cy="409.0" r="1.9" fill="#7fc37c"/>
<circle cx="851.7" cy="409.6" r="1.6" fill="#6cba6c"/>
<circle cx="843.1" cy="426.2" r="4.7" fill="#94d290"/>
<circle cx="846.5" cy="426.5" r="1.9" fill="#a3d99e"/>
<circle cx="844.3" cy="429.4" r="2.2" fill="#94d290"/>
<circle cx="842.2" cy="429.5" r="1.8" fill="#a3d99e"/>
<circle cx="839.8" cy="425.6" r="2.0" fill="#a3d99e"/>
<circle cx="841.6" cy="423.2" r="2.2" fill="#a3d99e"/>
<circle cx="844.0" cy="423.0" r="1.8" fill="#a3d99e"/>
<circle cx="843.9" cy="425.9" r="1.5" fill="#6cba6c"/>
<circle cx="843.3" cy="411.2" r="4.4" fill="#9dd698"/>
<circle cx="846.5" cy="410.7" r="2.0" fill="#a3d99e"/>
<circle cx="845.4" cy="413.7" r="1.9" fill="#9dd698"/>
<circle cx="841.5" cy="413.9" r="1.7" fill="#a3d99e"/>
<circle cx="840.1" cy="411.5" r="1.7" fill="#a3d99e"/>
<circle cx="841.3" cy="408.7" r="2.1" fill="#9dd698"/>
<circle cx="844.2" cy="408.1" r="1.8" fill="#7fc37c"/>
<circle cx="844.9" cy="409.0" r="1.4" fill="#6cba6c"/>
<circle cx="858.6" cy="397.2" r="5.1" fill="#8fcf8a"/>
<circle cx="862.2" cy="396.2" r="2.3" fill="#a3d99e"/>
<circle cx="861.0" cy="400.1" r="2.1" fill="#7fc37c"/>
<circle cx="856.0" cy="399.9" r="2.3" fill="#8fcf8a"/>
<circle cx="855.0" cy="396.3" r="2.3" fill="#8fcf8a"/>
<circle cx="857.6" cy="393.7" r="2.4" fill="#a3d99e"/>
<circle cx="860.9" cy="394.3" r="2.3" fill="#8fcf8a"/>
<circle cx="861.1" cy="396.7" r="1.7" fill="#6cba6c"/>
<circle cx="861.2" cy="400.7" r="3.8" fill="#94d290"/>
<circle cx="863.9" cy="400.3" r="1.6" fill="#7fc37c"/>
<circle cx="863.2" cy="402.7" r="1.6" fill="#94d290"/>
<circle cx="859.8" cy="403.2" r="1.9" fill="#a3d99e"/>
<circle cx="858.4" cy="400.5" r="1.7" fill="#a3d99e"/>
<circle cx="860.3" cy="398.1" r="1.9" fill="#7fc37c"/>
<circle cx="862.2" cy="398.1" r="1.6" fill="#7fc37c"/>
<circle cx="861.4" cy="399.9" r="1.2" fill="#6cba6c"/>
<circle cx="859.5" cy="396.4" r="4.1" fill="#94d290"/>
<circle cx="862.5" cy="397.1" r="1.9" fill="#a3d99e"/>
<circle cx="861.5" cy="398.6" r="1.6" fill="#7fc37c"/>
<circle cx="858.2" cy="399.1" r="1.7" fill="#94d290"/>
<circle cx="856.5" cy="396.3" r="2.0" fill="#94d290"/>
<circle cx="857.6" cy="394.1" r="1.6" fill="#a3d99e"/>
<circle cx="861.1" cy="393.8" r="2.0" fill="#7fc37c"/>
<circle cx="862.1" cy="396.5" r="1.3" fill="#6cba6c"/>
<circle cx="857.6" cy="398.7" r="4.5" fill="#8fcf8a"/>
<circle cx="860.8" cy="399.2" r="1.9" fill="#8fcf8a"/>
<circle cx="858.3" cy="402.0" r="1.8" fill="#7fc37c"/>
<circle cx="855.7" cy="401.5" r="1.8" fill="#a3d99e"/>
<circle cx="854.3" cy="399.2" r="1.9" fill="#7fc37c"/>
<circle cx="855.5" cy="396.2" r="1.7" fill="#a3d99e"/>
<circle cx="859.8" cy="396.3" r="2.0" fill="#a3d99e"/>
<circle cx="860.5" cy="399.7" r="1.4" fill="#6cba6c"/>
<circle cx="878.8" cy="424.4" r="4.6" fill="#88cb84"/>
<circle cx="882.0" cy="423.6" r="2.1" fill="#a3d99e"/>
<circle cx="881.2" cy="426.7" r="1.9" fill="#88cb84"/>
<circle cx="877.0" cy="427.2" r="2.1" fill="#a3d99e"/>
<circle cx="875.6" cy="423.5" r="2.1" fill="#7fc37c"/>
<circle cx="877.9" cy="421.2" r="2.0" fill="#88cb84"/>
<circle cx="880.0" cy="421.3" r="1.9" fill="#a3d99e"/>
<circle cx="880.0" cy="424.0" r="1.5" fill="#6cba6c"/>
<circle cx="881.8" cy="420.2" r="3.7" fill="#94d290"/>
<circle cx="884.4" cy="419.4" r="1.8" fill="#94d290"/>
<circle cx="883.7" cy="422.2" r="1.5" fill="#7fc37c"/>
<circle cx="880.3" cy="422.4" r="1.5" fill="#94d290"/>
<circle cx="879.2" cy="419.6" r="1.4" fill="#94d290"/>
<circle cx="880.0" cy="418.2" r="1.7" fill="#a3d99e"/>
<circle cx="882.9" cy="417.7" r="1.5" fill="#94d290"/>
<circle cx="880.0" cy="418.1" r="1.3" fill="#6cba6c"/>
<circle cx="879.3" cy="423.0" r="4.2" fill="#94d290"/>
<circle cx="882.2" cy="422.2" r="1.7" fill="#7fc37c"/>
<circle cx="880.2" cy="425.9" r="1.6" fill="#7fc37c"/>
<circle cx="878.0" cy="425.8" r="1.9" fill="#94d290"/>
<circle cx="876.3" cy="423.3" r="1.9" fill="#7fc37c"/>
<circle cx="877.6" cy="420.5" r="1.8" fill="#94d290"/>
<circle cx="881.3" cy="420.8" r="2.0" fill="#94d290"/>
<circle cx="878.0" cy="422.3" r="1.4" fill="#6cba6c"/>
<circle cx="862.6" cy="437.8" r="3.9" fill="#9dd698"/>
<circle cx="865.4" cy="438.4" r="1.6" fill="#7fc37c"/>
<circle cx="864.4" cy="440.0" r="1.5" fill="#9dd698"/>
<circle cx="861.0" cy="440.1" r="1.9" fill="#9dd698"/>
<circle cx="859.8" cy="438.2" r="1.7" fill="#7fc37c"/>
<circle cx="860.7" cy="435.7" r="1.7" fill="#a3d99e"/>
<circle cx="864.0" cy="435.3" r="1.7" fill="#7fc37c"/>
<circle cx="862.5" cy="436.0" r="1.0" fill="#6cba6c"/>
<circle cx="861.4" cy="434.9" r="4.2" fill="#88cb84"/>
<circle cx="864.5" cy="434.8" r="1.7" fill="#7fc37c"/>
<circle cx="862.9" cy="437.6" r="1.6" fill="#88cb84"/>
<circle cx="859.9" cy="437.6" r="1.7" fill="#a3d99e"/>
<circle cx="858.4" cy="434.2" r="2.1" fill="#7fc37c"/>
<circle cx="859.3" cy="432.6" r="2.1" fill="#a3d99e"/>
<circle cx="862.2" cy="431.9" r="1.9" fill="#a3d99e"/>
<circle cx="863.6" cy="433.2" r="1.0" fill="#6cba6c"/>
<circle cx="876.1" cy="442.8" r="4.0" fill="#94d290"/>
<circle cx="878.9" cy="442.1" r="1.7" fill="#7fc37c"/>
<circle cx="878.1" cy="444.9" r="1.6" fill="#7fc37c"/>
<circle cx="875.4" cy="445.6" r="1.8" fill="#7fc37c"/>
<circle cx="873.2" cy="442.9" r="1.6" fill="#94d290"/>
<circle cx="874.9" cy="440.2" r="1.9" fill="#94d290"/>
<circle cx="877.8" cy="440.5" r="1.8" fill="#94d290"/>
<circle cx="876.3" cy="441.3" r="1.2" fill="#6cba6c"/>
<circle cx="871.0" cy="436.6" r="4.5" fill="#88cb84"/>
<circle cx="874.2" cy="437.1" r="2.1" fill="#7fc37c"/>
<circle cx="872.3" cy="439.6" r="2.0" fill="#a3d99e"/>
<circle cx="869.8" cy="439.7" r="2.0" fill="#a3d99e"/>
<circle cx="867.8" cy="437.4" r="1.8" fill="#88cb84"/>
<circle cx="869.0" cy="434.0" r="2.2" fill="#88cb84"/>
<circle cx="872.3" cy="433.6" r="1.9" fill="#88cb84"/>
<circle cx="873.7" cy="436.0" r="1.4" fill="#6cba6c"/>
<circle cx="876.9" cy="437.9" r="3.6" fill="#9dd698"/>
<circle cx="879.5" cy="437.7" r="1.7" fill="#a3d99e"/>
<circle cx="878.2" cy="440.2" r="1.8" fill="#a3d99e"/>
<circle cx="875.0" cy="439.8" r="1.4" fill="#7fc37c"/>
<circle cx="874.3" cy="438.4" r="1.8" fill="#7fc37c"/>
<circle cx="875.3" cy="435.9" r="1.8" fill="#7fc37c"/>
<circle cx="877.5" cy="435.4" r="1.4" fill="#7fc37c"/>
<circle cx="877.7" cy="435.5" r="1.0" fill="#6cba6c"/>
<circle cx="874.4" cy="433.1" r="3.8" fill="#88cb84"/>
<circle cx="877.2" cy="433.3" r="1.7" fill="#a3d99e"/>
<circle cx="875.5" cy="435.7" r="1.5" fill="#88cb84"/>
<circle cx="873.0" cy="435.5" r="1.6" fill="#7fc37c"/>
<circle cx="871.7" cy="433.7" r="1.5" fill="#a3d99e"/>
<circle cx="872.6" cy="431.1" r="1.6" fill="#88cb84"/>
<circle cx="875.3" cy="430.5" r="1.6" fill="#88cb84"/>
<circle cx="874.9" cy="432.9" r="1.1" fill="#6cba6c"/>
<circle cx="871.0" cy="450.6" r="4.9" fill="#88cb84"/>
<circle cx="874.5" cy="451.6" r="2.3" fill="#88cb84"/>
<circle cx="873.6" cy="453.1" r="2.4" fill="#88cb84"/>
<circle cx="868.4" cy="453.1" r="2.4" fill="#88cb84"/>
<circle cx="867.5" cy="451.0" r="2.4" fill="#88cb84"/>
<circle cx="869.1" cy="447.5" r="2.2" fill="#7fc37c"/>
<circle cx="873.4" cy="447.8" r="2.2" fill="#a3d99e"/>
<circle cx="871.6" cy="450.2" r="1.4" fill="#6cba6c"/>
<circle cx="871.5" cy="441.0" r="4.4" fill="#94d290"/>
<circle cx="874.7" cy="440.9" r="2.0" fill="#7fc37c"/>
<circle cx="873.0" cy="443.9" r="1.7" fill="#a3d99e"/>
<circle cx="869.2" cy="443.3" r="2.0" fill="#7fc37c"/>
<circle cx="868.3" cy="441.3" r="1.9" fill="#a3d99e"/>
<circle cx="870.5" cy="438.0" r="2.0" fill="#94d290"/>
<circle cx="873.3" cy="438.4" r="1.9" fill="#a3d99e"/>
<circle cx="870.4" cy="443.6" r="1.3" fill="#6cba6c"/>
<circle cx="953.5" cy="481.7" r="4.1" fill="#94d290"/>
<circle cx="956.5" cy="481.6" r="1.7" fill="#94d290"/>
<circle cx="954.2" cy="484.6" r="1.6" fill="#94d290"/>
<circle cx="952.0" cy="484.2" r="1.7" fill="#94d290"/>
<circle cx="950.6" cy="481.0" r="1.7" fill="#a3d99e"/>
<circle cx="952.4" cy="479.0" r="1.7" fill="#7fc37c"/>
<circle cx="955.4" cy="479.4" r="1.6" fill="#94d290"/>
<circle cx="954.3" cy="483.9" r="1.0" fill="#6cba6c"/>
<circle cx="955.4" cy="478.3" r="4.4" fill="#8fcf8a"/>
<circle cx="958.6" cy="478.3" r="1.9" fill="#7fc37c"/>
<circle cx="956.9" cy="481.2" r="1.8" fill="#a3d99e"/>
<circle cx="953.4" cy="480.8" r="1.8" fill="#7fc37c"/>
<circle cx="952.3" cy="478.0" r="2.0" fill="#8fcf8a"/>
<circle cx="953.7" cy="475.7" r="1.7" fill="#a3d99e"/>
<circle cx="957.4" cy="475.9" r="2.1" fill="#a3d99e"/>
<circle cx="953.6" cy="476.8" r="1.3" fill="#6cba6c"/>
<circle cx="947.1" cy="480.3" r="4.7" fill="#88cb84"/>
<circle cx="950.5" cy="479.6" r="1.8" fill="#7fc37c"/>
<circle cx="948.2" cy="483.6" r="2.3" fill="#a3d99e"/>
<circle cx="946.2" cy="483.6" r="2.3" fill="#a3d99e"/>
<circle cx="943.6" cy="480.2" r="2.2" fill="#7fc37c"/>
<circle cx="944.6" cy="477.9" r="2.2" fill="#88cb84"/>
<circle cx="948.0" cy="477.0" r="1.9" fill="#88cb84"/>
<circle cx="945.3" cy="478.7" r="1.5" fill="#6cba6c"/>
<circle cx="941.9" cy="474.1" r="5.1" fill="#8fcf8a"/>
<circle cx="945.4" cy="475.1" r="2.0" fill="#7fc37c"/>
<circle cx="944.5" cy="476.7" r="2.1" fill="#7fc37c"/>
<circle cx="940.2" cy="477.4" r="2.2" fill="#7fc37c"/>
<circle cx="938.2" cy="474.5" r="2.5" fill="#7fc37c"/>
<circle cx="939.4" cy="471.3" r="2.0" fill="#a3d99e"/>
<circle cx="942.8" cy="470.5" r="2.5" fill="#8fcf8a"/>
<circle cx="944.0" cy="475.8" r="1.4" fill="#6cba6c"/>
<circle cx="944.0" cy="481.3" r="4.3" fill="#8fcf8a"/>
<circle cx="947.2" cy="481.7" r="2.1" fill="#7fc37c"/>
<circle cx="945.8" cy="483.9" r="2.0" fill="#8fcf8a"/>
<circle cx="942.8" cy="484.2" r="1.7" fill="#7fc37c"/>
<circle cx="941.0" cy="482.0" r="1.9" fill="#8fcf8a"/>
<circle cx="943.0" cy="478.3" r="1.9" fill="#7fc37c"/>
<circle cx="946.1" cy="478.9" r="1.7" fill="#8fcf8a"/>
<circle cx="946.0" cy="481.1" r="1.2" fill="#6cba6c"/>
<circle cx="989.2" cy="510.1" r="3.6" fill="#9dd698"/>
<circle cx="991.8" cy="509.7" r="1.5" fill="#7fc37c"/>
<circle cx="990.5" cy="512.4" r="1.5" fill="#9dd698"/>
<circle cx="988.6" cy="512.6" r="1.7" fill="#9dd698"/>
<circle cx="986.6" cy="510.1" r="1.4" fill="#a3d99e"/>
<circle cx="988.2" cy="507.7" r="1.6" fill="#9dd698"/>
<circle cx="990.1" cy="507.6" r="1.5" fill="#a3d99e"/>
<circle cx="991.2" cy="508.2" r="0.9" fill="#6cba6c"/>
<circle cx="965.7" cy="524.1" r="4.3" fill="#88cb84"/>
<circle cx="968.8" cy="524.0" r="1.9" fill="#7fc37c"/>
<circle cx="967.9" cy="526.3" r="1.9" fill="#88cb84"/>
<circle cx="964.4" cy="527.0" r="1.8" fill="#88cb84"/>
<circle cx="962.6" cy="524.8" r="2.1" fill="#88cb84"/>
<circle cx="964.0" cy="521.5" r="1.7" fill="#88cb84"/>
<circle cx="967.7" cy="521.7" r="2.0" fill="#7fc37c"/>
<circle cx="966.8" cy="524.0" r="1.2" fill="#6cba6c"/>
<circle cx="978.2" cy="522.0" r="3.7" fill="#9dd698"/>
<circle cx="980.9" cy="522.0" r="1.5" fill="#a3d99e"/>
<circle cx="979.5" cy="524.3" r="1.6" fill="#7fc37c"/>
<circle cx="976.3" cy="523.9" r="1.6" fill="#a3d99e"/>
<circle cx="975.5" cy="522.2" r="1.6" fill="#a3d99e"/>
<circle cx="977.5" cy="519.4" r="1.7" fill="#9dd698"/>
<circle cx="979.9" cy="519.9" r="1.4" fill="#7fc37c"/>
<circle cx="976.3" cy="523.9" r="1.3" fill="#6cba6c"/>
<circle cx="955.1" cy="523.5" r="4.4" fill="#8fcf8a"/>
<circle cx="958.3" cy="523.2" r="1.7" fill="#a3d99e"/>
<circle cx="956.2" cy="526.6" r="1.9" fill="#8fcf8a"/>
<circle cx="954.1" cy="526.6" r="2.0" fill="#a3d99e"/>
<circle cx="952.0" cy="522.7" r="1.7" fill="#7fc37c"/>
<circle cx="954.2" cy="520.4" r="2.0" fill="#a3d99e"/>
<circle cx="956.0" cy="520.4" r="1.7" fill="#8fcf8a"/>
<circle cx="957.1" cy="524.2" r="1.3" fill="#6cba6c"/>
<circle cx="967.5" cy="527.2" r="3.9" fill="#88cb84"/>
<circle cx="970.3" cy="527.0" r="1.9" fill="#7fc37c"/>
<circle cx="968.1" cy="530.0" r="1.5" fill="#7fc37c"/>
<circle cx="965.4" cy="529.2" r="1.9" fill="#a3d99e"/>
<circle cx="964.7" cy="526.5" r="1.7" fill="#88cb84"/>
<circle cx="966.2" cy="524.6" r="1.6" fill="#7fc37c"/>
<circle cx="968.7" cy="524.6" r="1.6" fill="#88cb84"/>
<circle cx="968.8" cy="529.5" r="1.2" fill="#6cba6c"/>
<circle cx="972.4" cy="526.6" r="4.9" fill="#8fcf8a"/>
<circle cx="975.9" cy="526.1" r="2.1" fill="#a3d99e"/>
<circle cx="974.8" cy="529.2" r="2.3" fill="#7fc37c"/>
<circle cx="971.0" cy="529.9" r="2.3" fill="#7fc37c"/>
<circle cx="968.8" cy="526.2" r="2.2" fill="#8fcf8a"/>
<circle cx="971.2" cy="523.2" r="2.3" fill="#a3d99e"/>
<circle cx="973.9" cy="523.4" r="2.3" fill="#7fc37c"/>
<circle cx="973.1" cy="529.4" r="1.7" fill="#6cba6c"/>
<circle cx="985.5" cy="527.5" r="4.1" fill="#88cb84"/>
<circle cx="988.4" cy="528.3" r="1.7" fill="#a3d99e"/>
<circle cx="987.2" cy="529.9" r="1.7" fill="#88cb84"/>
<circle cx="983.4" cy="529.6" r="1.5" fill="#a3d99e"/>
<circle cx="982.6" cy="527.6" r="1.8" fill="#a3d99e"/>
<circle cx="984.4" cy="524.7" r="1.6" fill="#a3d99e"/>
<circle cx="987.4" cy="525.2" r="2.0" fill="#a3d99e"/>
<circle cx="983.6" cy="525.5" r="1.1" fill="#6cba6c"/>
<circle cx="965.2" cy="516.6" r="4.3" fill="#88cb84"/>
<circle cx="968.3" cy="515.9" r="1.9" fill="#7fc37c"/>
<circle cx="966.5" cy="519.5" r="1.7" fill="#88cb84"/>
<circle cx="963.1" cy="519.0" r="2.1" fill="#88cb84"/>
<circle cx="962.1" cy="516.0" r="2.1" fill="#a3d99e"/>
<circle cx="963.7" cy="513.9" r="2.1" fill="#a3d99e"/>
<circle cx="967.5" cy="514.4" r="2.1" fill="#7fc37c"/>
<circle cx="966.9" cy="518.4" r="1.5" fill="#6cba6c"/>
<circle cx="965.6" cy="511.2" r="3.9" fill="#8fcf8a"/>
<circle cx="968.4" cy="510.5" r="1.9" fill="#8fcf8a"/>
<circle cx="967.4" cy="513.4" r="1.5" fill="#8fcf8a"/>
<circle cx="964.2" cy="513.7" r="1.5" fill="#7fc37c"/>
<circle cx="962.8" cy="510.9" r="1.6" fill="#7fc37c"/>
<circle cx="964.9" cy="508.4" r="1.6" fill="#a3d99e"/>
<circle cx="967.6" cy="509.1" r="1.7" fill="#7fc37c"/>
<circle cx="967.8" cy="512.5" r="1.1" fill="#6cba6c"/>
<circle cx="974.7" cy="507.7" r="4.9" fill="#8fcf8a"/>
<circle cx="978.2" cy="507.7" r="2.1" fill="#a3d99e"/>
<circle cx="976.9" cy="510.5" r="2.0" fill="#a3d99e"/>
<circle cx="973.1" cy="510.9" r="2.4" fill="#a3d99e"/>
<circle cx="971.2" cy="506.9" r="2.2" fill="#a3d99e"/>
<circle cx="972.1" cy="505.2" r="2.2" fill="#7fc37c"/>
<circle cx="975.5" cy="504.2" r="1.9" fill="#8fcf8a"/>
<circle cx="972.5" cy="506.3" r="1.5" fill="#6cba6c"/>
<circle cx="956.7" cy="526.5" r="4.7" fill="#8fcf8a"/>
<circle cx="960.1" cy="525.9" r="2.3" fill="#a3d99e"/>
<circle cx="958.6" cy="529.4" r="2.0" fill="#a3d99e"/>
<circle cx="955.8" cy="529.8" r="2.0" fill="#7fc37c"/>
<circle cx="953.3" cy="526.9" r="2.0" fill="#a3d99e"/>
<circle cx="955.9" cy="523.1" r="2.0" fill="#a3d99e"/>
<circle cx="957.5" cy="523.1" r="2.3" fill="#a3d99e"/>
<circle cx="959.8" cy="529.8" r="1.4" fill="#6cba6c"/>
<circle cx="959.9" cy="529.6" r="4.8" fill="#8fcf8a"/>
<circle cx="963.3" cy="530.4" r="2.0" fill="#8fcf8a"/>
<circle cx="962.1" cy="532.3" r="1.8" fill="#a3d99e"/>
<circle cx="957.6" cy="532.2" r="2.2" fill="#a3d99e"/>
<circle cx="956.5" cy="528.7" r="2.1" fill="#8fcf8a"/>
<circle cx="958.3" cy="526.5" r="1.9" fill="#a3d99e"/>
<circle cx="961.5" cy="526.5" r="1.8" fill="#8fcf8a"/>
<circle cx="960.6" cy="528.0" r="1.3" fill="#6cba6c"/>
<circle cx="972.4" cy="517.5" r="4.2" fill="#8fcf8a"/>
<circle cx="975.4" cy="518.0" r="2.0" fill="#a3d99e"/>
<circle cx="974.5" cy="519.8" r="2.0" fill="#a3d99e"/>
<circle cx="971.3" cy="520.4" r="1.8" fill="#8fcf8a"/>
<circle cx="969.4" cy="518.0" r="1.7" fill="#8fcf8a"/>
<circle cx="971.7" cy="514.5" r="1.9" fill="#8fcf8a"/>
<circle cx="974.3" cy="515.1" r="1.9" fill="#a3d99e"/>
<circle cx="970.7" cy="519.5" r="1.2" fill="#6cba6c"/>
<circle cx="971.5" cy="504.4" r="4.4" fill="#8fcf8a"/>
<circle cx="974.5" cy="505.1" r="2.1" fill="#a3d99e"/>
<circle cx="972.7" cy="507.3" r="1.7" fill="#7fc37c"/>
<circle cx="970.4" cy="507.4" r="1.7" fill="#a3d99e"/>
<circle cx="968.3" cy="504.7" r="2.0" fill="#8fcf8a"/>
<circle cx="970.7" cy="501.3" r="1.8" fill="#7fc37c"/>
<circle cx="972.8" cy="501.6" r="1.9" fill="#7fc37c"/>
<circle cx="969.4" cy="502.7" r="1.1" fill="#6cba6c"/>
<circle cx="964.6" cy="518.5" r="3.9" fill="#94d290"/>
<circle cx="967.5" cy="518.4" r="1.8" fill="#a3d99e"/>
<circle cx="966.1" cy="521.0" r="1.9" fill="#7fc37c"/>
<circle cx="963.2" cy="521.0" r="1.7" fill="#a3d99e"/>
<circle cx="961.9" cy="519.1" r="1.5" fill="#94d290"/>
<circle cx="963.0" cy="516.2" r="1.6" fill="#94d290"/>
<circle cx="965.9" cy="516.0" r="1.6" fill="#7fc37c"/>
<circle cx="963.7" cy="519.7" r="1.3" fill="#6cba6c"/>
<circle cx="970.6" cy="527.7" r="4.6" fill="#8fcf8a"/>
<circle cx="973.8" cy="526.8" r="2.1" fill="#7fc37c"/>
<circle cx="972.5" cy="530.4" r="2.1" fill="#a3d99e"/>
<circle cx="969.1" cy="530.6" r="1.9" fill="#7fc37c"/>
<circle cx="967.3" cy="528.3" r="2.1" fill="#a3d99e"/>
<circle cx="969.3" cy="524.6" r="2.2" fill="#8fcf8a"/>
<circle cx="972.4" cy="524.9" r="2.1" fill="#7fc37c"/>
<circle cx="972.4" cy="528.2" r="1.4" fill="#6cba6c"/>
<circle cx="989.3" cy="519.8" r="4.1" fill="#9dd698"/>
<circle cx="992.2" cy="520.1" r="1.7" fill="#9dd698"/>
<circle cx="990.1" cy="522.7" r="1.9" fill="#9dd698"/>
<circle cx="987.6" cy="522.3" r="1.9" fill="#7fc37c"/>
<circle cx="986.3" cy="519.8" r="1.7" fill="#9dd698"/>
<circle cx="987.6" cy="517.4" r="1.8" fill="#7fc37c"/>
<circle cx="991.0" cy="517.4" r="1.8" fill="#7fc37c"/>
<circle cx="987.9" cy="520.4" r="1.2" fill="#6cba6c"/>
<circle cx="953.7" cy="526.5" r="4.9" fill="#8fcf8a"/>
<circle cx="957.2" cy="526.3" r="2.4" fill="#a3d99e"/>
<circle cx="956.2" cy="529.0" r="2.3" fill="#7fc37c"/>
<circle cx="951.3" cy="529.2" r="1.9" fill="#a3d99e"/>
<circle cx="950.1" cy="526.8" r="1.9" fill="#8fcf8a"/>
<circle cx="951.1" cy="524.0" r="2.3" fill="#8fcf8a"/>
<circle cx="955.1" cy="523.3" r="2.0" fill="#7fc37c"/>
<circle cx="952.0" cy="528.2" r="1.6" fill="#6cba6c"/>
<circle cx="988.7" cy="519.8" r="5.0" fill="#8fcf8a"/>
<circle cx="992.3" cy="520.4" r="2.0" fill="#8fcf8a"/>
<circle cx="991.3" cy="522.3" r="2.2" fill="#a3d99e"/>
<circle cx="987.1" cy="523.0" r="1.9" fill="#a3d99e"/>
<circle cx="985.1" cy="519.2" r="2.2" fill="#7fc37c"/>
<circle cx="986.1" cy="517.3" r="1.9" fill="#8fcf8a"/>
<circle cx="989.6" cy="516.3" r="2.1" fill="#a3d99e"/>
<circle cx="989.6" cy="517.1" r="1.3" fill="#6cba6c"/>
<circle cx="988.6" cy="537.9" r="3.8" fill="#94d290"/>
<circle cx="991.4" cy="537.6" r="1.9" fill="#7fc37c"/>
<circle cx="990.3" cy="540.2" r="1.6" fill="#7fc37c"/>
<circle cx="987.6" cy="540.5" r="1.9" fill="#a3d99e"/>
<circle cx="985.9" cy="537.5" r="1.5" fill="#94d290"/>
<circle cx="987.8" cy="535.2" r="1.8" fill="#a3d99e"/>
<circle cx="990.4" cy="535.7" r="1.5" fill="#a3d99e"/>
<circle cx="989.3" cy="540.1" r="1.3" fill="#6cba6c"/>
<circle cx="990.4" cy="530.4" r="4.4" fill="#9dd698"/>
<circle cx="993.5" cy="531.1" r="2.0" fill="#7fc37c"/>
<circle cx="991.7" cy="533.3" r="1.9" fill="#9dd698"/>
<circle cx="988.2" cy="532.8" r="2.1" fill="#a3d99e"/>
<circle cx="987.2" cy="530.4" r="1.9" fill="#a3d99e"/>
<circle cx="988.6" cy="527.7" r="2.0" fill="#9dd698"/>
<circle cx="992.0" cy="527.6" r="2.1" fill="#a3d99e"/>
<circle cx="990.5" cy="527.3" r="1.5" fill="#6cba6c"/>
<circle cx="989.0" cy="536.6" r="4.2" fill="#9dd698"/>
<circle cx="992.0" cy="536.3" r="1.8" fill="#a3d99e"/>
<circle cx="989.8" cy="539.6" r="1.9" fill="#7fc37c"/>
<circle cx="986.9" cy="538.8" r="1.7" fill="#9dd698"/>
<circle cx="986.0" cy="536.1" r="2.0" fill="#9dd698"/>
<circle cx="988.3" cy="533.6" r="1.9" fill="#7fc37c"/>
<circle cx="990.7" cy="534.1" r="1.9" fill="#a3d99e"/>
<circle cx="988.0" cy="537.0" r="1.3" fill="#6cba6c"/>
<circle cx="411.6" cy="465.5" r="5.0" fill="#9dd698"/>
<circle cx="415.2" cy="466.5" r="2.3" fill="#9dd698"/>
<circle cx="413.6" cy="468.6" r="1.9" fill="#7fc37c"/>
<circle cx="409.1" cy="468.2" r="2.2" fill="#7fc37c"/>
<circle cx="408.0" cy="465.1" r="1.9" fill="#a3d99e"/>
<circle cx="410.4" cy="462.1" r="2.0" fill="#7fc37c"/>
<circle cx="414.1" cy="462.8" r="2.3" fill="#7fc37c"/>
<circle cx="411.2" cy="467.1" r="1.3" fill="#6cba6c"/>
<circle cx="408.4" cy="438.8" r="4.7" fill="#9dd698"/>
<circle cx="411.8" cy="439.5" r="1.9" fill="#9dd698"/>
<circle cx="409.9" cy="441.9" r="1.9" fill="#7fc37c"/>
<circle cx="407.3" cy="442.0" r="2.0" fill="#a3d99e"/>
<circle cx="405.2" cy="437.8" r="2.0" fill="#a3d99e"/>
<circle cx="407.1" cy="435.7" r="2.1" fill="#7fc37c"/>
<circle cx="410.0" cy="435.8" r="2.2" fill="#7fc37c"/>
<circle cx="409.6" cy="440.1" r="1.6" fill="#6cba6c"/>
<circle cx="412.1" cy="461.0" r="3.6" fill="#88cb84"/>
<circle cx="414.6" cy="460.3" r="1.8" fill="#a3d99e"/>
<circle cx="413.0" cy="463.4" r="1.8" fill="#7fc37c"/>
<circle cx="410.5" cy="463.1" r="1.5" fill="#88cb84"/>
<circle cx="409.4" cy="461.3" r="1.6" fill="#7fc37c"/>
<circle cx="410.7" cy="458.7" r="1.4" fill="#88cb84"/>
<circle cx="413.0" cy="458.5" r="1.6" fill="#a3d99e"/>
<circle cx="409.9" cy="459.9" r="1.2" fill="#6cba6c"/>
<circle cx="413.6" cy="455.4" r="4.5" fill="#8fcf8a"/>
<circle cx="416.8" cy="455.7" r="2.1" fill="#7fc37c"/>
<circle cx="415.5" cy="458.1" r="1.8" fill="#8fcf8a"/>
<circle cx="412.0" cy="458.3" r="2.1" fill="#7fc37c"/>
<circle cx="410.3" cy="455.9" r="1.7" fill="#8fcf8a"/>
<circle cx="412.7" cy="452.3" r="2.0" fill="#8fcf8a"/>
<circle cx="415.4" cy="452.7" r="2.0" fill="#7fc37c"/>
<circle cx="411.7" cy="454.9" r="1.3" fill="#6cba6c"/>
<circle cx="398.4" cy="447.4" r="4.0" fill="#9dd698"/>
<circle cx="401.3" cy="447.3" r="1.8" fill="#9dd698"/>
<circle cx="399.2" cy="450.2" r="1.6" fill="#a3d99e"/>
<circle cx="397.5" cy="450.2" r="1.7" fill="#9dd698"/>
<circle cx="395.5" cy="446.6" r="2.0" fill="#7fc37c"/>
<circle cx="396.9" cy="444.8" r="1.7" fill="#7fc37c"/>
<circle cx="399.2" cy="444.5" r="1.8" fill="#a3d99e"/>
<circle cx="397.4" cy="446.5" r="1.0" fill="#6cba6c"/>
<circle cx="399.3" cy="465.6" r="4.2" fill="#9dd698"/>
<circle cx="402.4" cy="465.8" r="2.0" fill="#7fc37c"/>
<circle cx="400.7" cy="468.3" r="1.6" fill="#9dd698"/>
<circle cx="398.1" cy="468.4" r="1.8" fill="#7fc37c"/>
<circle cx="396.3" cy="465.7" r="1.7" fill="#a3d99e"/>
<circle cx="398.1" cy="462.9" r="1.8" fill="#a3d99e"/>
<circle cx="400.4" cy="462.8" r="2.0" fill="#a3d99e"/>
<circle cx="400.3" cy="464.8" r="1.3" fill="#6cba6c"/>
<circle cx="414.1" cy="443.0" r="4.0" fill="#8fcf8a"/>
<circle cx="417.1" cy="442.8" r="1.6" fill="#8fcf8a"/>
<circle cx="416.0" cy="445.2" r="1.8" fill="#8fcf8a"/>
<circle cx="412.3" cy="445.3" r="1.6" fill="#8fcf8a"/>
<circle cx="411.2" cy="442.7" r="2.0" fill="#8fcf8a"/>
<circle cx="413.0" cy="440.3" r="1.9" fill="#8fcf8a"/>
<circle cx="415.2" cy="440.3" r="2.0" fill="#8fcf8a"/>
<circle cx="416.8" cy="441.9" r="1.2" fill="#6cba6c"/>
<circle cx="404.5" cy="463.9" r="3.6" fill="#94d290"/>
<circle cx="407.0" cy="463.2" r="1.4" fill="#94d290"/>
<circle cx="405.2" cy="466.4" r="1.4" fill="#94d290"/>
<circle cx="402.6" cy="465.8" r="1.5" fill="#a3d99e"/>
<circle cx="401.9" cy="463.9" r="1.5" fill="#7fc37c"/>
<circle cx="403.0" cy="461.7" r="1.6" fill="#94d290"/>
<circle cx="405.9" cy="461.7" r="1.6" fill="#7fc37c"/>
<circle cx="402.5" cy="465.2" r="1.0" fill="#6cba6c"/>
<circle cx="403.6" cy="456.1" r="3.8" fill="#8fcf8a"/>
<circle cx="406.2" cy="456.9" r="1.9" fill="#a3d99e"/>
<circle cx="404.9" cy="458.6" r="1.6" fill="#7fc37c"/>
<circle cx="401.9" cy="458.3" r="1.7" fill="#7fc37c"/>
<circle cx="400.9" cy="455.5" r="1.6" fill="#a3d99e"/>
<circle cx="401.7" cy="454.1" r="1.5" fill="#8fcf8a"/>
<circle cx="404.4" cy="453.5" r="1.8" fill="#8fcf8a"/>
<circle cx="401.8" cy="456.2" r="1.1" fill="#6cba6c"/>
<circle cx="404.5" cy="452.3" r="4.4" fill="#8fcf8a"/>
<circle cx="407.7" cy="452.8" r="1.8" fill="#8fcf8a"/>
<circle cx="406.6" cy="454.8" r="2.1" fill="#8fcf8a"/>
<circle cx="402.3" cy="454.7" r="1.9" fill="#8fcf8a"/>
<circle cx="401.4" cy="451.7" r="2.0" fill="#7fc37c"/>
<circle cx="402.7" cy="449.7" r="2.1" fill="#8fcf8a"/>
<circle cx="406.9" cy="450.1" r="2.2" fill="#8fcf8a"/>
<circle cx="404.2" cy="452.4" r="1.5" fill="#6cba6c"/>
<circle cx="400.7" cy="437.8" r="4.5" fill="#8fcf8a"/>
<circle cx="403.9" cy="438.4" r="2.1" fill="#7fc37c"/>
<circle cx="402.1" cy="440.8" r="1.9" fill="#7fc37c"/>
<circle cx="399.8" cy="441.0" r="2.1" fill="#7fc37c"/>
<circle cx="397.5" cy="438.3" r="1.8" fill="#7fc37c"/>
<circle cx="398.9" cy="435.1" r="2.2" fill="#8fcf8a"/>
<circle cx="402.7" cy="435.2" r="1.9" fill="#8fcf8a"/>
<circle cx="401.3" cy="437.8" r="1.6" fill="#6cba6c"/>
<circle cx="533.0" cy="243.0" r="4.7" fill="#8fcf8a"/>
<circle cx="536.4" cy="242.6" r="1.8" fill="#8fcf8a"/>
<circle cx="535.3" cy="245.5" r="2.2" fill="#a3d99e"/>
<circle cx="531.8" cy="246.2" r="2.0" fill="#8fcf8a"/>
<circle cx="529.6" cy="242.7" r="2.0" fill="#a3d99e"/>
<circle cx="531.2" cy="240.1" r="1.9" fill="#7fc37c"/>
<circle cx="533.7" cy="239.7" r="1.9" fill="#7fc37c"/>
<circle cx="530.3" cy="242.4" r="1.4" fill="#6cba6c"/>
<circle cx="528.2" cy="232.9" r="4.0" fill="#88cb84"/>
<circle cx="531.1" cy="232.4" r="1.7" fill="#a3d99e"/>
<circle cx="529.1" cy="235.6" r="1.5" fill="#88cb84"/>
<circle cx="527.4" cy="235.7" r="1.8" fill="#7fc37c"/>
<circle cx="525.3" cy="232.1" r="1.6" fill="#a3d99e"/>
<circle cx="527.0" cy="230.2" r="1.6" fill="#88cb84"/>
<circle cx="529.9" cy="230.5" r="1.7" fill="#7fc37c"/>
<circle cx="527.0" cy="235.3" r="1.3" fill="#6cba6c"/>
<circle cx="525.4" cy="237.2" r="4.3" fill="#94d290"/>
<circle cx="528.5" cy="237.5" r="1.6" fill="#94d290"/>
<circle cx="526.8" cy="240.0" r="2.1" fill="#94d290"/>
<circle cx="523.4" cy="239.6" r="2.0" fill="#94d290"/>
<circle cx="522.3" cy="237.9" r="1.8" fill="#94d290"/>
<circle cx="523.4" cy="234.8" r="2.1" fill="#7fc37c"/>
<circle cx="526.7" cy="234.4" r="2.0" fill="#7fc37c"/>
<circle cx="524.8" cy="239.2" r="1.1" fill="#6cba6c"/>
<circle cx="525.8" cy="230.9" r="4.2" fill="#9dd698"/>
<circle cx="528.8" cy="231.5" r="1.9" fill="#9dd698"/>
<circle cx="527.1" cy="233.7" r="1.7" fill="#9dd698"/>
<circle cx="524.9" cy="233.8" r="1.8" fill="#a3d99e"/>
<circle cx="522.8" cy="231.4" r="1.7" fill="#7fc37c"/>
<circle cx="523.7" cy="228.7" r="1.7" fill="#a3d99e"/>
<circle cx="527.1" cy="228.0" r="2.0" fill="#a3d99e"/>
<circle cx="528.0" cy="231.4" r="1.5" fill="#6cba6c"/>
<circle cx="535.6" cy="238.7" r="4.6" fill="#94d290"/>
<circle cx="538.9" cy="238.3" r="1.8" fill="#a3d99e"/>
<circle cx="537.5" cy="241.4" r="1.9" fill="#a3d99e"/>
<circle cx="533.8" cy="241.5" r="2.2" fill="#a3d99e"/>
<circle cx="532.3" cy="239.1" r="2.0" fill="#a3d99e"/>
<circle cx="533.2" cy="236.4" r="1.9" fill="#a3d99e"/>
<circle cx="536.7" cy="235.5" r="2.0" fill="#7fc37c"/>
<circle cx="533.1" cy="239.5" r="1.3" fill="#6cba6c"/>
<circle cx="529.7" cy="241.2" r="4.1" fill="#9dd698"/>
<circle cx="532.7" cy="241.3" r="1.7" fill="#a3d99e"/>
<circle cx="531.9" cy="243.3" r="1.7" fill="#7fc37c"/>
<circle cx="527.8" cy="243.6" r="1.7" fill="#7fc37c"/>
<circle cx="526.7" cy="240.6" r="1.9" fill="#7fc37c"/>
<circle cx="528.0" cy="238.7" r="1.9" fill="#a3d99e"/>
<circle cx="531.4" cy="238.7" r="2.0" fill="#7fc37c"/>
<circle cx="530.6" cy="242.2" r="1.3" fill="#6cba6c"/>
<circle cx="553.0" cy="244.1" r="4.6" fill="#88cb84"/>
<circle cx="556.4" cy="243.9" r="2.0" fill="#a3d99e"/>
<circle cx="554.7" cy="247.0" r="2.1" fill="#7fc37c"/>
<circle cx="550.8" cy="246.7" r="1.9" fill="#7fc37c"/>
<circle cx="549.6" cy="244.1" r="2.1" fill="#a3d99e"/>
<circle cx="551.7" cy="240.9" r="2.0" fill="#7fc37c"/>
<circle cx="554.1" cy="240.9" r="2.2" fill="#88cb84"/>
<circle cx="554.4" cy="246.7" r="1.6" fill="#6cba6c"/>
<circle cx="553.8" cy="245.7" r="4.9" fill="#88cb84"/>
<circle cx="557.3" cy="245.0" r="2.2" fill="#a3d99e"/>
<circle cx="556.1" cy="248.4" r="2.0" fill="#a3d99e"/>
<circle cx="551.4" cy="248.3" r="2.0" fill="#88cb84"/>
<circle cx="550.3" cy="244.9" r="2.1" fill="#88cb84"/>
<circle cx="551.4" cy="243.0" r="2.3" fill="#a3d99e"/>
<circle cx="554.8" cy="242.3" r="2.4" fill="#7fc37c"/>
<circle cx="553.8" cy="249.1" r="1.7" fill="#6cba6c"/>
<circle cx="363.8" cy="389.6" r="5.0" fill="#9bc897" opacity="0.85"/>
<circle cx="369.0" cy="388.2" r="4.7" fill="#9bc897" opacity="0.85"/>
<circle cx="359.1" cy="386.2" r="4.0" fill="#9bc897" opacity="0.85"/>
<circle cx="360.8" cy="395.9" r="4.6" fill="#9bc897" opacity="0.85"/>
<circle cx="361.1" cy="387.7" r="4.4" fill="#9bc897" opacity="0.85"/>
<circle cx="370.8" cy="390.2" r="4.6" fill="#9bc897" opacity="0.85"/>
<circle cx="369.8" cy="401.3" r="4.2" fill="#9bc897" opacity="0.85"/>
<circle cx="366.6" cy="394.9" r="3.7" fill="#9bc897" opacity="0.85"/>
<circle cx="359.1" cy="393.9" r="4.8" fill="#9bc897" opacity="0.85"/>
<circle cx="352.7" cy="436.0" r="3.9" fill="#9bc897" opacity="0.85"/>
<circle cx="347.6" cy="415.6" r="4.9" fill="#9bc897" opacity="0.85"/>
<circle cx="352.2" cy="426.7" r="4.0" fill="#9bc897" opacity="0.85"/>
<circle cx="351.3" cy="415.6" r="4.1" fill="#9bc897" opacity="0.85"/>
<circle cx="353.9" cy="423.8" r="4.5" fill="#9bc897" opacity="0.85"/>
<circle cx="353.2" cy="428.3" r="4.0" fill="#9bc897" opacity="0.85"/>
<circle cx="346.9" cy="426.8" r="4.2" fill="#9bc897" opacity="0.85"/>
<circle cx="355.0" cy="413.9" r="4.2" fill="#9bc897" opacity="0.85"/>
<circle cx="353.2" cy="434.5" r="4.4" fill="#9bc897" opacity="0.85"/>
<circle cx="360.3" cy="435.7" r="3.7" fill="#9bc897" opacity="0.85"/>
<circle cx="356.8" cy="433.8" r="4.6" fill="#9bc897" opacity="0.85"/>
<circle cx="286.9" cy="145.1" r="4.8" fill="#9bc897" opacity="0.85"/>
<circle cx="285.8" cy="145.9" r="4.5" fill="#9bc897" opacity="0.85"/>
<circle cx="284.8" cy="137.3" r="3.8" fill="#9bc897" opacity="0.85"/>
<circle cx="289.4" cy="136.3" r="4.2" fill="#9bc897" opacity="0.85"/>
<text x="508.5" y="206.0" transform="rotate(-62.0 508.5 206.0)" font-family="Liberation Sans" font-size="7.5" fill="#5a5a5a" letter-spacing="1.3" text-anchor="middle" dominant-baseline="central">OLD S HEAD RD</text>
<text x="574.0" y="80.0" transform="rotate(-62.0 574.0 80.0)" font-family="Liberation Sans" font-size="7.5" fill="#5a5a5a" letter-spacing="1.3" text-anchor="middle" dominant-baseline="central">OLD S H</text>
<text x="438.0" y="348.0" transform="rotate(-62.0 438.0 348.0)" font-family="Liberation Sans" font-size="7.5" fill="#5a5a5a" letter-spacing="1.3" text-anchor="middle" dominant-baseline="central">OLD S HEAD RD</text>
<text x="300.0" y="605.0" transform="rotate(-57.0 300.0 605.0)" font-family="Liberation Sans" font-size="7.5" fill="#5a5a5a" letter-spacing="1.3" text-anchor="middle" dominant-baseline="central">S HEAD RD</text>
<text x="578.5" y="199.0" transform="rotate(37.0 578.5 199.0)" font-family="Liberation Sans" font-size="7.0" fill="#5a5a5a" letter-spacing="1.3" text-anchor="middle" dominant-baseline="central">WARNERS AVE</text>
<text x="699.0" y="302.0" transform="rotate(37.0 699.0 302.0)" font-family="Liberation Sans" font-size="7.0" fill="#5a5a5a" letter-spacing="1.3" text-anchor="middle" dominant-baseline="central">WARNERS AVE</text>
<text x="828.0" y="399.0" transform="rotate(37.0 828.0 399.0)" font-family="Liberation Sans" font-size="7.0" fill="#5a5a5a" letter-spacing="1.3" text-anchor="middle" dominant-baseline="central">WARNERS AVE</text>
<text x="651.0" y="650.0" transform="rotate(37.0 651.0 650.0)" font-family="Liberation Sans" font-size="6.5" fill="#5a5a5a" letter-spacing="1.2" text-anchor="middle" dominant-baseline="central">BEACH RD</text>
<text x="392.0" y="680.0" transform="rotate(-57.0 392.0 680.0)" font-family="Liberation Sans" font-size="6.5" fill="#5a5a5a" letter-spacing="1.2" text-anchor="middle" dominant-baseline="central">SIMPSON ST</text>
<text x="990.0" y="325.0" transform="rotate(-62.0 990.0 325.0)" font-family="Liberation Sans" font-size="6.5" fill="#5a5a5a" letter-spacing="1.2" text-anchor="middle" dominant-baseline="central">BRAE</text>
<text x="606" y="138" font-family="Liberation Sans" font-size="5" fill="#9a968f" text-anchor="middle">349</text>
<text x="634" y="116" font-family="Liberation Sans" font-size="5" fill="#9a968f" text-anchor="middle">351</text>
<text x="599" y="184" font-family="Liberation Sans" font-size="5" fill="#9a968f" text-anchor="middle">343</text>
<text x="810" y="181" font-family="Liberation Sans" font-size="5" fill="#9a968f" text-anchor="middle">355A</text>
<text x="389" y="533" font-family="Liberation Sans" font-size="5" fill="#9a968f" text-anchor="middle">339</text>
<text x="919" y="201" font-family="Liberation Sans" font-size="5" fill="#9a968f" text-anchor="middle">98</text>
<g transform="translate(532.0 272.0) scale(0.857)" fill="#474a45"><circle cx="5" cy="3" r="3"/><path d="M1,7 L9,7 L10,17 L8,17 L8,28 L5.6,28 L5,19 L4.4,28 L2,28 L2,17 L0,17 Z"/></g>
<g transform="translate(540.5 278.0) scale(0.661)" fill="#474a45"><circle cx="5" cy="3" r="3"/><path d="M1,7 L9,7 L10,17 L8,17 L8,28 L5.6,28 L5,19 L4.4,28 L2,28 L2,17 L0,17 Z"/></g>
<g transform="translate(487.0 326.0) scale(0.875)" fill="#e0852e"><circle cx="5" cy="3" r="3"/><path d="M1,7 L9,7 L10,17 L8,17 L8,28 L5.6,28 L5,19 L4.4,28 L2,28 L2,17 L0,17 Z"/></g>
<g transform="translate(477.0 338.0) scale(0.667)" fill="#e0852e"><path d="M3,0 L6,0 L7,2 L7,5 L10,8 L13,11 L13,18 L11,18 L11,15 L8,15 L6,18 L4,18 L5,13 L4,6 L1,5 L0,3 Z"/></g>
<g transform="translate(427.0 466.0) scale(0.893)" fill="#e0852e"><circle cx="5" cy="3" r="3"/><path d="M1,7 L9,7 L10,17 L8,17 L8,28 L5.6,28 L5,19 L4.4,28 L2,28 L2,17 L0,17 Z"/></g>
<g transform="translate(415.5 479.0) scale(0.667)" fill="#e0852e"><path d="M3,0 L6,0 L7,2 L7,5 L10,8 L13,11 L13,18 L11,18 L11,15 L8,15 L6,18 L4,18 L5,13 L4,6 L1,5 L0,3 Z"/></g>
<g transform="translate(534.0 496.0) scale(0.893)" fill="#e0852e"><circle cx="5" cy="3" r="3"/><path d="M1,7 L9,7 L10,17 L8,17 L8,28 L5.6,28 L5,19 L4.4,28 L2,28 L2,17 L0,17 Z"/></g>
<g transform="translate(524.0 509.0) scale(0.667)" fill="#e0852e"><path d="M3,0 L6,0 L7,2 L7,5 L10,8 L13,11 L13,18 L11,18 L11,15 L8,15 L6,18 L4,18 L5,13 L4,6 L1,5 L0,3 Z"/></g>
<g transform="translate(671.0 452.6) scale(1.042)" fill="#2c6165"><path d="M0,3 L4,6 L15,6 L19,1 L22,0 L24,3 L21,6 L20,8 L21,16 L18,16 L17,10 L8,10 L5,16 L2,16 L4,9 Z"/></g>
<text x="539.0" y="283.0" font-family="Liberation Sans" font-size="6.3" fill="#a09ca8" text-anchor="middle" stroke="#8a9580" stroke-width="0.8" paint-order="stroke" stroke-opacity="0.6">Playground and</text>
<text x="539.0" y="290.8" font-family="Liberation Sans" font-size="6.3" fill="#a09ca8" text-anchor="middle" stroke="#8a9580" stroke-width="0.8" paint-order="stroke" stroke-opacity="0.6">Courts Area</text>
<text x="487.5" y="340.6" font-family="Liberation Sans" font-size="6.3" fill="#8d8d95" text-anchor="middle" stroke="#d8b98a" stroke-width="0.8" paint-order="stroke" stroke-opacity="0.6">Playground Perimeter</text>
<text x="427.3" y="481.3" font-family="Liberation Sans" font-size="6.3" fill="#7d87a0" text-anchor="middle" stroke="#d8b98a" stroke-width="0.8" paint-order="stroke" stroke-opacity="0.6">Beach Road Reserve</text>
<text x="534.0" y="507.5" font-family="Liberation Sans" font-size="6.3" fill="#7d87a0" text-anchor="middle" stroke="#d8b98a" stroke-width="0.8" paint-order="stroke" stroke-opacity="0.6">Simpson Street</text>
<text x="534.0" y="515.0" font-family="Liberation Sans" font-size="6.3" fill="#7d87a0" text-anchor="middle" stroke="#d8b98a" stroke-width="0.8" paint-order="stroke" stroke-opacity="0.6">Road Closure</text>
<text x="683.0" y="463.5" font-family="Liberation Sans" font-size="6.3" fill="#3f6d78" text-anchor="middle" stroke="#7aa396" stroke-width="0.8" paint-order="stroke" stroke-opacity="0.6">Sportsfield</text>
  </svg>

  <!-- map UI overlays -->
  <div class="abs" style="left:253.8px;top:3.6px;width:172.6px;height:37.4px;background:#fff;border:1px solid #9c9a98;border-radius:5px;box-shadow:0 1px 2px rgba(0,0,0,0.25)"></div>
  <div class="t" style="left:268px;top:21.3px;font-size:9.1px;font-weight:bold;color:#444">Support &amp; Resources</div>
  <svg class="abs" style="left:401px;top:23.3px" width="7" height="5" viewBox="0 0 7 5"><path d="M1,1 L3.5,3.5 L6,1" fill="none" stroke="#555" stroke-width="1"/></svg>
  <div class="abs" style="left:939.5px;top:1px;width:15.5px;height:45.5px;background:#fff;border-radius:3px;box-shadow:0 0 0 1px rgba(0,0,0,0.08)"></div>
  <div class="abs" style="left:939.5px;top:16px;width:15.5px;height:1px;background:#e8e8e8"></div>
  <div class="abs" style="left:939.5px;top:31.5px;width:15.5px;height:1px;background:#e8e8e8"></div>
  <svg class="abs" style="left:939.5px;top:1px" width="16" height="46" viewBox="0 0 16 46">
    <path d="M7.75,4.5 L7.75,11 M4.5,7.75 L11,7.75" stroke="#333" stroke-width="1.4"/>
    <path d="M5,23.3 L10.5,23.3" stroke="#333" stroke-width="1.4"/>
    <path d="M7.75,34.5 L9.6,38.8 L5.9,38.8 Z" fill="#333"/><path d="M7.75,42.5 L9.6,38.8 L5.9,38.8 Z" fill="#bbb"/>
  </svg>
  <div class="abs" style="left:939.5px;top:52.7px;width:15.5px;height:15px;background:#fff;border-radius:3px;box-shadow:0 0 0 1px rgba(0,0,0,0.08)"></div>
  <svg class="abs" style="left:939.5px;top:52.7px" width="16" height="15" viewBox="0 0 16 15">
    <circle cx="7.75" cy="7.5" r="3.6" fill="none" stroke="#333" stroke-width="1.1"/><circle cx="7.75" cy="7.5" r="1.5" fill="#333"/>
    <path d="M7.75,2.3 L7.75,3.9 M7.75,11.1 L7.75,12.7 M2.6,7.5 L4.2,7.5 M11.3,7.5 L12.9,7.5" stroke="#333" stroke-width="1.1"/>
  </svg>
  <!-- zones legend -->
  <div class="abs" style="left:254.2px;top:547.2px;width:84px;height:97.5px;background:#fff;border:1px solid #c4c1be;border-radius:5px;box-shadow:0 1px 3px rgba(0,0,0,0.2)"></div>
  <div class="t" style="left:261.7px;top:557.5px;font-size:8.5px;color:#3a3a3a;-webkit-text-stroke:0.3px #3a3a3a">Zones</div>
  <svg class="abs" style="left:322px;top:558.5px" width="6" height="4" viewBox="0 0 6 4"><path d="M0.7,0.7 L3,3 L5.3,0.7" fill="none" stroke="#555" stroke-width="0.9"/></svg>
  <div class="abs" style="left:266px;top:578.1px;width:12px;height:9px;line-height:0"><svg width="12" height="8.4" viewBox="0 0 10 7"><path d="M0.5,1.2 L2,2.2 L6.5,2.2 L8,0.5 L9.6,1.2 L9,2.8 L8.2,3 L8.6,6.5 L7.4,6.5 L6.8,4.2 L3.6,4.2 L2.8,6.5 L1.6,6.5 L2,3.4 Z" fill="#2f6f6f"/></svg></div>
<div class="t" style="left:280.7px;top:578.0px;font-size:8px;color:#3a3a3a;-webkit-text-stroke:0.2px #3a3a3a">Dog Zone</div>
<div class="abs" style="left:267px;top:601.2px;line-height:0"><svg width="8" height="9" viewBox="0 0 8 9"><circle cx="2.4" cy="1.2" r="1.1" fill="#555"/><circle cx="5.8" cy="3" r="0.9" fill="#555"/><path d="M1,2.6 L3.8,2.6 L3.9,5.6 L3.4,5.6 L3.4,8.6 L1.4,8.6 L1.4,5.6 L0.9,5.6 Z M4.6,4.2 L7,4.2 L7.2,6.4 L6.8,6.4 L6.8,8.6 L5,8.6 L5,6.4 L4.5,6.4 Z" fill="#555"/></svg></div>
<div class="t" style="left:280.7px;top:601.3px;font-size:8px;color:#3a3a3a;-webkit-text-stroke:0.2px #3a3a3a">Human Zone</div>
<div class="abs" style="left:267px;top:624.8px;line-height:0"><svg width="9" height="9" viewBox="0 0 9 9"><circle cx="6.5" cy="1.3" r="1.1" fill="#e0852e"/><path d="M5.4,2.8 L7.6,2.8 L7.8,5.5 L7.3,5.5 L7.2,8.6 L6.1,8.6 L6,5.5 L5.3,5.5 Z M0.6,8.6 L1,6 L0.5,5.2 L1.6,4.6 L2.6,5.4 L4.5,5.4 L4.6,8.6 L3.7,8.6 L3.4,7 L1.8,7 L1.5,8.6 Z" fill="#e0852e"/></svg></div>
<div class="t" style="left:280.7px;top:624.9px;font-size:8px;color:#3a3a3a;-webkit-text-stroke:0.2px #3a3a3a">Shared Zone</div>
  <!-- home indicator -->
  <div class="abs" style="left:356.6px;top:612.6px;width:250.4px;height:6.7px;background:#000;border-radius:3.4px"></div>
  <div class="abs" style="left:246px;top:0;width:1px;height:646px;background:#4a8ed8"></div>
  <div class="abs" style="left:960px;top:8px;width:1px;height:628px;background:#6a9ad6"></div>
  <div class="abs" style="left:810px;top:643.5px;width:140px;height:2.5px;background:rgba(255,255,255,0.6)"></div>
  <div class="abs side">
    <!-- header -->
    <svg class="abs" style="left:9px;top:4px" width="19" height="17" viewBox="0 0 19 17">
      <path d="M0.3,0 L2.8,0 L2.8,6.8 L9.5,6.8 L9.5,14 L11.7,15.8 L0.3,15.8 Z M9.7,0 L11.4,0 L11.6,2.2 L18,2.2 L14.5,6.6 L9.7,6.6 Z" fill="#5cae76"/>
    </svg>
    <div class="t" style="left:31px;top:2.2px;font-size:21px;color:#5cae76;-webkit-text-stroke:0.55px #5cae76;transform:scaleX(0.95);transform-origin:0 0">bestr</div>
    <div class="t" style="left:184px;top:8.5px;font-size:7.7px;font-weight:bold;color:#5cb87e">Pet Etiquette</div>
    <svg class="abs" style="left:12px;top:31px" width="6" height="5" viewBox="0 0 6 5"><path d="M5.5,2.5 L0.8,2.5 M2.6,0.7 L0.8,2.5 L2.6,4.3" fill="none" stroke="#5cb87e" stroke-width="0.9"/></svg><div class="t" style="left:21px;top:30.5px;font-size:6.4px;color:#5cb87e;letter-spacing:0.1px">Places</div>
    <div class="t" style="left:52px;top:30px;font-size:7.2px;color:#777">&#8250;</div>
    <div class="t" style="left:59.5px;top:30.5px;font-size:6.9px;color:#333">Barracluff Park</div>
    <div class="abs" style="left:0;top:45px;width:246px;height:1.5px;background:#c4c2c0"></div>
    <!-- scroll area -->
    <div class="abs" style="left:237px;top:46px;width:9px;height:600px;background:#f7f7f7;border-left:1px solid #efefef"></div>
    <div class="abs" style="left:240px;top:196px;width:4px;height:450px;background:#c2c2c2;border-radius:2px"></div>
    <!-- description box -->
    <div class="abs" style="left:12px;top:140px;width:213px;height:50px;border:1px solid #a9a6a4;border-radius:4px"></div>
    <div class="t" style="left:21px;top:157px;font-size:9.15px;color:#555">roam except during sporting activities or</div>
    <div class="t" style="left:21px;top:170.3px;font-size:9.15px;color:#555">community events.</div>
    <!-- sticky header -->
    <div class="abs" style="left:0;top:46px;width:245px;height:112.6px;background:#fff;box-shadow:0 1px 1px rgba(0,0,0,0.08)"></div>
    <svg class="abs" style="left:28px;top:73.5px" width="8" height="7" viewBox="0 0 8 7"><path d="M7.2,3.5 L1,3.5 M3.6,1 L1,3.5 L3.6,6" fill="none" stroke="#444" stroke-width="1.1"/></svg>
    <div class="t" style="left:41px;top:73px;font-size:8px;color:#444">Back to list</div>
    <div class="t" style="left:12.5px;top:97.3px;font-size:13.45px;font-weight:bold;color:#3a3a3a">Barracluff Park</div>
    <div class="abs" style="left:201.7px;top:94.2px;width:31.3px;height:12.5px;border:1.3px solid #8ad98f;background:#e2f5e2;border-radius:7px"></div>
    <div class="t" style="left:208px;top:97.2px;font-size:7.2px;color:#3b8f4e;-webkit-text-stroke:0.15px #3b8f4e">Active</div>
    <div class="t" style="left:12.5px;top:114.8px;font-size:6.6px;font-weight:bold;color:#4fbf73">Waverley Council</div>
    <svg class="abs" style="left:13px;top:128px" width="7" height="10" viewBox="0 0 7 10"><path d="M3.5,0.6 C1.7,0.6 0.6,1.9 0.6,3.5 C0.6,5.6 3.5,9 3.5,9 C3.5,9 6.4,5.6 6.4,3.5 C6.4,1.9 5.3,0.6 3.5,0.6 Z M3.5,2.3 A1.2,1.2 0 1 1 3.5,4.7 A1.2,1.2 0 1 1 3.5,2.3Z" fill="none" stroke="#4fbf73" stroke-width="1.1"/></svg>
    <div class="t" style="left:25.2px;top:128.8px;font-size:8.95px;color:#4a4a4a">Warners Ave, North Bondi NSW 2026</div>
    <svg class="abs" style="left:13px;top:142px" width="6" height="6" viewBox="0 0 6 6"><path d="M5.5,0.5 L0.5,2.5 L2.7,3.2 L3.3,5.5 Z" fill="none" stroke="#4fbf73" stroke-width="0.9"/></svg>
    <div class="t" style="left:20.5px;top:142px;font-size:7px;color:#4fbf73">21m <span style="color:#555">away</span></div>
    <!-- accordions -->
    <div class="acc" style="top:199px"></div>
    <svg class="abs" style="left:21px;top:211.8px" width="8" height="8" viewBox="0 0 8 8"><circle cx="4" cy="4" r="3.3" fill="none" stroke="#444" stroke-width="0.9"/><path d="M4,3.3 L4,5.8 M4,2 L4,2.6" stroke="#444" stroke-width="0.9"/></svg>
    <div class="t" style="left:33.5px;top:211.4px;font-size:9px;font-weight:bold;color:#3a3a3a">Information</div>
    <svg class="abs" style="left:208px;top:213.5px" width="6" height="4" viewBox="0 0 6 4"><path d="M0.7,0.7 L3,3 L5.3,0.7" fill="none" stroke="#444" stroke-width="1"/></svg>
    <div class="acc" style="top:231px"></div>
    <svg class="abs" style="left:21px;top:244.8px" width="8" height="8" viewBox="0 0 8 8"><path d="M1.2,1 L2.8,0.8 L3.6,2.6 L2.6,3.4 C3.1,4.5 3.8,5.2 4.8,5.6 L5.6,4.6 L7.4,5.4 L7.2,7 C4,7.2 1,4.2 1.2,1 Z" fill="none" stroke="#444" stroke-width="0.8"/></svg>
    <div class="t" style="left:33.5px;top:244.4px;font-size:9px;font-weight:bold;color:#3a3a3a">Contact</div>
    <svg class="abs" style="left:208px;top:246.5px" width="6" height="4" viewBox="0 0 6 4"><path d="M0.7,0.7 L3,3 L5.3,0.7" fill="none" stroke="#444" stroke-width="1"/></svg>
    <div class="acc" style="top:264px"></div>
    <svg class="abs" style="left:21px;top:277px" width="8" height="9" viewBox="0 0 8 9"><path d="M1,0.6 L5,0.6 L7,2.6 L7,8.4 L1,8.4 Z M2.6,4.5 L5.4,4.5 M2.6,6.3 L5.4,6.3" fill="none" stroke="#444" stroke-width="0.9"/></svg>
    <div class="t" style="left:33.5px;top:277.2px;font-size:9px;font-weight:bold;color:#3a3a3a">Rules</div>
    <svg class="abs" style="left:208px;top:279px" width="6" height="4" viewBox="0 0 6 4"><path d="M0.7,0.7 L3,3 L5.3,0.7" fill="none" stroke="#444" stroke-width="1"/></svg>
    <div class="t" style="left:12.3px;top:311.2px;font-size:10.2px;font-weight:bold;color:#3f3f3f;letter-spacing:-0.4px">Zones</div>
    <div class="card" style="top:327.0px;height:60.8px"></div>
<div class="t" style="left:21.5px;top:337.6px;font-size:9.5px;color:#3e3e3e;letter-spacing:-0.2px;-webkit-text-stroke:0.25px #3e3e3e">Sportsfield</div>
<div class="t" style="left:21.5px;top:352.4px;font-size:6.9px;color:#4a4a4a">Main grassy area suitable for off-leash exercise during</div>
<div class="t" style="left:21.5px;top:360.9px;font-size:6.9px;color:#4a4a4a">permitted hours</div>
<div class="t" style="left:21.5px;top:371.8px;font-size:6.9px;color:#4a4a4a">Area: Main field</div>
<div class="t" style="right:30.5px;top:338.2px;font-size:7.3px;color:#3b6f77;display:flex;align-items:center;gap:3px"><svg width="10" height="7" viewBox="0 0 10 7"><path d="M0.5,1.2 L2,2.2 L6.5,2.2 L8,0.5 L9.6,1.2 L9,2.8 L8.2,3 L8.6,6.5 L7.4,6.5 L6.8,4.2 L3.6,4.2 L2.8,6.5 L1.6,6.5 L2,3.4 Z" fill="#3b6f77"/></svg><span>dog</span></div>
<div class="t" style="right:30.5px;top:371.8px;font-size:6.9px;color:#3f6583">Click to select</div>
<div class="card" style="top:394.3px;height:60.7px"></div>
<div class="t" style="left:21.5px;top:404.9px;font-size:9.5px;color:#3e3e3e;letter-spacing:-0.2px;-webkit-text-stroke:0.25px #3e3e3e">Playground Perimeter</div>
<div class="t" style="left:21.5px;top:419.7px;font-size:6.9px;color:#4a4a4a">Perimeter walkway around playground where dogs must be on-</div>
<div class="t" style="left:21.5px;top:428.2px;font-size:6.9px;color:#4a4a4a">leash</div>
<div class="t" style="left:21.5px;top:439.1px;font-size:6.9px;color:#4a4a4a">Area: Perimeter walkway</div>
<div class="t" style="right:30.5px;top:405.5px;font-size:7.3px;color:#d9822b;display:flex;align-items:center;gap:3px"><svg width="9" height="9" viewBox="0 0 9 9"><circle cx="6.5" cy="1.3" r="1.1" fill="#d9822b"/><path d="M5.4,2.8 L7.6,2.8 L7.8,5.5 L7.3,5.5 L7.2,8.6 L6.1,8.6 L6,5.5 L5.3,5.5 Z M0.6,8.6 L1,6 L0.5,5.2 L1.6,4.6 L2.6,5.4 L4.5,5.4 L4.6,8.6 L3.7,8.6 L3.4,7 L1.8,7 L1.5,8.6 Z" fill="#d9822b"/></svg><span>shared</span></div>
<div class="t" style="right:30.5px;top:439.1px;font-size:6.9px;color:#d9822b">Click to select</div>
<div class="card" style="top:462.3px;height:60.2px"></div>
<div class="t" style="left:21.5px;top:472.9px;font-size:9.5px;color:#3e3e3e;letter-spacing:-0.2px;-webkit-text-stroke:0.25px #3e3e3e">Playground and Courts Area</div>
<div class="t" style="left:21.5px;top:487.7px;font-size:6.9px;color:#4a4a4a">Children's playground and sports courts where dogs are not</div>
<div class="t" style="left:21.5px;top:496.2px;font-size:6.9px;color:#4a4a4a">permitted</div>
<div class="t" style="left:21.5px;top:507.1px;font-size:6.9px;color:#4a4a4a">Area: Northern section</div>
<div class="t" style="right:30.5px;top:473.5px;font-size:7.3px;color:#4a4a4a;display:flex;align-items:center;gap:3px"><svg width="8" height="9" viewBox="0 0 8 9"><circle cx="2.4" cy="1.2" r="1.1" fill="#4a4a4a"/><circle cx="5.8" cy="3" r="0.9" fill="#4a4a4a"/><path d="M1,2.6 L3.8,2.6 L3.9,5.6 L3.4,5.6 L3.4,8.6 L1.4,8.6 L1.4,5.6 L0.9,5.6 Z M4.6,4.2 L7,4.2 L7.2,6.4 L6.8,6.4 L6.8,8.6 L5,8.6 L5,6.4 L4.5,6.4 Z" fill="#4a4a4a"/></svg><span>human</span></div>
<div class="t" style="right:30.5px;top:507.1px;font-size:6.9px;color:#4a4a4a">Click to select</div>
<div class="card" style="top:529.6px;height:52.1px"></div>
<div class="t" style="left:21.5px;top:540.2px;font-size:9.5px;color:#3e3e3e;letter-spacing:-0.2px;-webkit-text-stroke:0.25px #3e3e3e">Beach Road Reserve</div>
<div class="t" style="left:21.5px;top:555.0px;font-size:6.9px;color:#4a4a4a">Shared community space where dogs must remain on-leash</div>
<div class="t" style="left:21.5px;top:565.9px;font-size:6.9px;color:#4a4a4a">Area: Southern section</div>
<div class="t" style="right:30.5px;top:540.8px;font-size:7.3px;color:#d9822b;display:flex;align-items:center;gap:3px"><svg width="9" height="9" viewBox="0 0 9 9"><circle cx="6.5" cy="1.3" r="1.1" fill="#d9822b"/><path d="M5.4,2.8 L7.6,2.8 L7.8,5.5 L7.3,5.5 L7.2,8.6 L6.1,8.6 L6,5.5 L5.3,5.5 Z M0.6,8.6 L1,6 L0.5,5.2 L1.6,4.6 L2.6,5.4 L4.5,5.4 L4.6,8.6 L3.7,8.6 L3.4,7 L1.8,7 L1.5,8.6 Z" fill="#d9822b"/></svg><span>shared</span></div>
<div class="t" style="right:30.5px;top:565.9px;font-size:6.9px;color:#d9822b">Click to select</div>
<div class="card" style="top:588.6px;height:52.0px"></div>
<div class="t" style="left:21.5px;top:599.2px;font-size:9.5px;color:#3e3e3e;letter-spacing:-0.2px;-webkit-text-stroke:0.25px #3e3e3e">Simpson Street Road Closure</div>
<div class="t" style="left:21.5px;top:614.0px;font-size:6.9px;color:#4a4a4a">Former road area now used as additional park space</div>
<div class="t" style="left:21.5px;top:624.9px;font-size:6.9px;color:#4a4a4a">Area: Road closure area</div>
<div class="t" style="right:30.5px;top:599.8px;font-size:7.3px;color:#d9822b;display:flex;align-items:center;gap:3px"><svg width="9" height="9" viewBox="0 0 9 9"><circle cx="6.5" cy="1.3" r="1.1" fill="#d9822b"/><path d="M5.4,2.8 L7.6,2.8 L7.8,5.5 L7.3,5.5 L7.2,8.6 L6.1,8.6 L6,5.5 L5.3,5.5 Z M0.6,8.6 L1,6 L0.5,5.2 L1.6,4.6 L2.6,5.4 L4.5,5.4 L4.6,8.6 L3.7,8.6 L3.4,7 L1.8,7 L1.5,8.6 Z" fill="#d9822b"/></svg><span>shared</span></div>
<div class="t" style="right:30.5px;top:624.9px;font-size:6.9px;color:#d9822b">Click to select</div>
</div>
</div>
</body></html>
